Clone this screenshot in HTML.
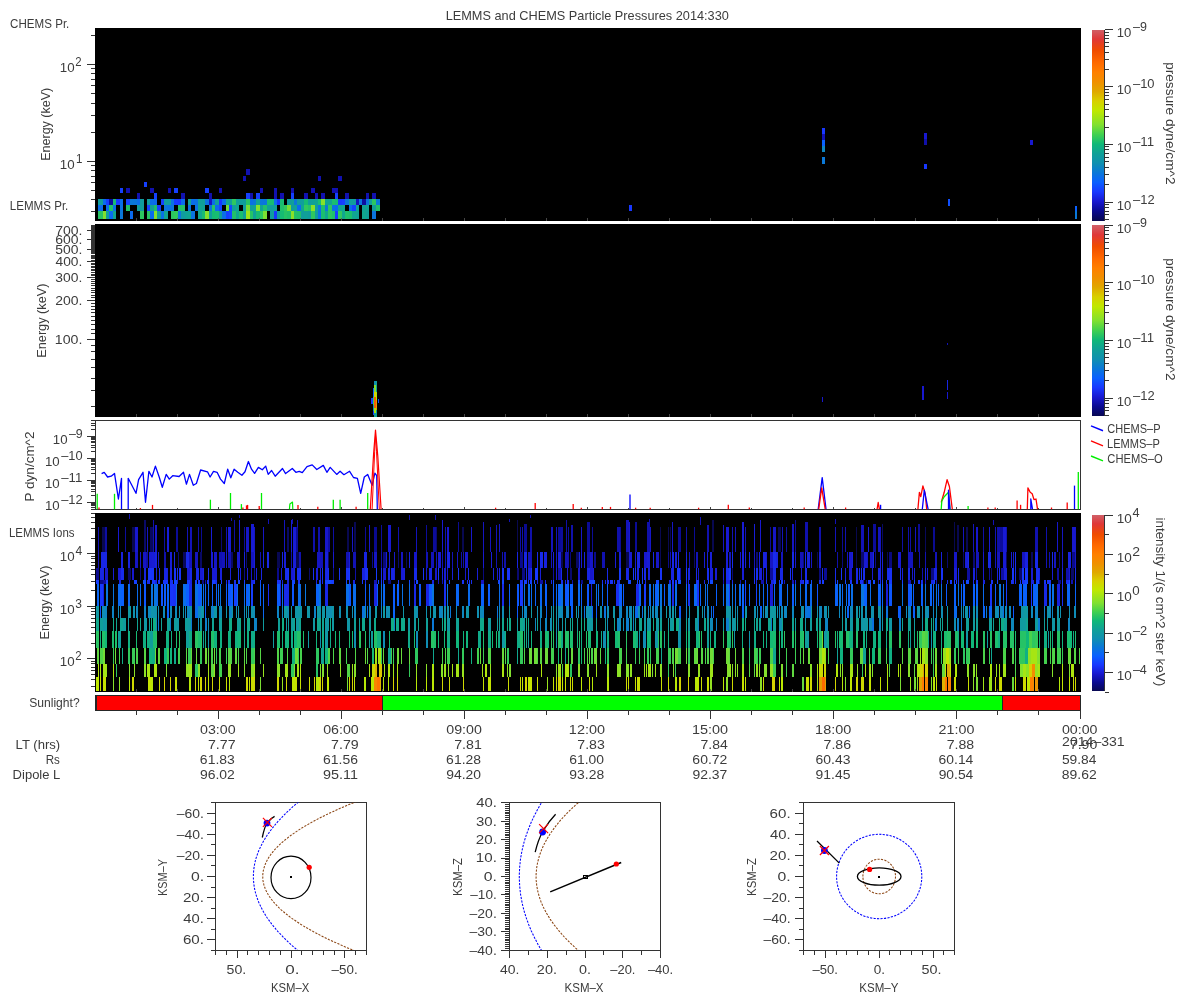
<!DOCTYPE html><html><head><meta charset="utf-8"><style>html,body{margin:0;padding:0;background:#fff;width:1200px;height:1000px;overflow:hidden}svg{display:block}text{font-family:"Liberation Sans",sans-serif}line,rect{shape-rendering:crispEdges}</style></head><body><svg width="1200" height="1000" viewBox="0 0 1200 1000" font-family="Liberation Sans, sans-serif" style="will-change:transform">
<rect x="0.00" y="0.00" width="1200.00" height="1000.00" fill="#ffffff"/>
<defs><linearGradient id="cm" x1="0" y1="1" x2="0" y2="0"><stop offset="0.0" stop-color="#080850"/><stop offset="0.05" stop-color="#0a0a90"/><stop offset="0.1" stop-color="#1818d0"/><stop offset="0.15" stop-color="#1838ff"/><stop offset="0.2" stop-color="#0a60ff"/><stop offset="0.25" stop-color="#0a78d8"/><stop offset="0.3" stop-color="#1090b0"/><stop offset="0.35" stop-color="#10a098"/><stop offset="0.4" stop-color="#10b878"/><stop offset="0.45" stop-color="#40d050"/><stop offset="0.5" stop-color="#80e030"/><stop offset="0.575" stop-color="#c0e800"/><stop offset="0.625" stop-color="#d8d000"/><stop offset="0.675" stop-color="#e0a800"/><stop offset="0.725" stop-color="#f09000"/><stop offset="0.775" stop-color="#ff8000"/><stop offset="0.825" stop-color="#ff6a00"/><stop offset="0.89" stop-color="#f04c00"/><stop offset="0.95" stop-color="#e03838"/><stop offset="1.0" stop-color="#d06068"/></linearGradient></defs>
<text x="445.67" y="19.50" font-size="12.2" textLength="283.21" lengthAdjust="spacingAndGlyphs" fill="#3c3c3c">LEMMS and CHEMS Particle Pressures  2014:330</text>
<rect x="95.00" y="28.00" width="986.00" height="193.00" fill="#000000"/>
<line x1="91.00" y1="211.84" x2="95.00" y2="211.84" stroke="#333333" stroke-width="1"/>
<line x1="91.00" y1="199.75" x2="95.00" y2="199.75" stroke="#333333" stroke-width="1"/>
<line x1="91.00" y1="190.37" x2="95.00" y2="190.37" stroke="#333333" stroke-width="1"/>
<line x1="91.00" y1="182.71" x2="95.00" y2="182.71" stroke="#333333" stroke-width="1"/>
<line x1="91.00" y1="176.24" x2="95.00" y2="176.24" stroke="#333333" stroke-width="1"/>
<line x1="91.00" y1="170.63" x2="95.00" y2="170.63" stroke="#333333" stroke-width="1"/>
<line x1="91.00" y1="165.68" x2="95.00" y2="165.68" stroke="#333333" stroke-width="1"/>
<line x1="87.00" y1="161.25" x2="95.00" y2="161.25" stroke="#333333" stroke-width="1"/>
<line x1="91.00" y1="132.13" x2="95.00" y2="132.13" stroke="#333333" stroke-width="1"/>
<line x1="91.00" y1="115.09" x2="95.00" y2="115.09" stroke="#333333" stroke-width="1"/>
<line x1="91.00" y1="103.00" x2="95.00" y2="103.00" stroke="#333333" stroke-width="1"/>
<line x1="91.00" y1="93.62" x2="95.00" y2="93.62" stroke="#333333" stroke-width="1"/>
<line x1="91.00" y1="85.96" x2="95.00" y2="85.96" stroke="#333333" stroke-width="1"/>
<line x1="91.00" y1="79.49" x2="95.00" y2="79.49" stroke="#333333" stroke-width="1"/>
<line x1="91.00" y1="73.88" x2="95.00" y2="73.88" stroke="#333333" stroke-width="1"/>
<line x1="91.00" y1="68.93" x2="95.00" y2="68.93" stroke="#333333" stroke-width="1"/>
<line x1="87.00" y1="64.50" x2="95.00" y2="64.50" stroke="#333333" stroke-width="1"/>
<line x1="91.00" y1="35.38" x2="95.00" y2="35.38" stroke="#333333" stroke-width="1"/>
<text x="59.79" y="72.00" font-size="12.6" textLength="14.83" lengthAdjust="spacingAndGlyphs" fill="#3c3c3c">10</text>
<text x="75.23" y="65.90" font-size="12.6" textLength="6.33" lengthAdjust="spacingAndGlyphs" fill="#3c3c3c">2</text>
<text x="59.89" y="168.75" font-size="12.6" textLength="14.83" lengthAdjust="spacingAndGlyphs" fill="#3c3c3c">10</text>
<text x="76.12" y="162.65" font-size="12.6" textLength="6.44" lengthAdjust="spacingAndGlyphs" fill="#3c3c3c">1</text>
<text transform="translate(49.80,160.82) rotate(-90)" x="0" y="0" font-size="12.2" textLength="73.09" lengthAdjust="spacingAndGlyphs" fill="#3c3c3c">Energy (keV)</text>
<text x="10.12" y="28.00" font-size="12.2" textLength="59.23" lengthAdjust="spacingAndGlyphs" fill="#3c3c3c">CHEMS Pr.</text>
<text x="9.75" y="210.00" font-size="12.2" textLength="58.60" lengthAdjust="spacingAndGlyphs" fill="#3c3c3c">LEMMS Pr.</text>
<rect x="97.92" y="199.00" width="5.00" height="6.30" fill="#109e9b"/>
<rect x="97.92" y="205.30" width="5.00" height="6.00" fill="#0a6cec"/>
<rect x="97.92" y="211.30" width="5.00" height="7.70" fill="#28c464"/>
<rect x="102.92" y="199.00" width="3.33" height="6.30" fill="#0a6bee"/>
<rect x="102.92" y="211.30" width="3.33" height="7.70" fill="#81e02f"/>
<rect x="106.25" y="199.00" width="2.92" height="6.30" fill="#163dff"/>
<rect x="106.25" y="205.30" width="2.92" height="6.00" fill="#0a6aee"/>
<rect x="106.25" y="211.30" width="2.92" height="7.70" fill="#10a098"/>
<rect x="109.17" y="199.00" width="3.75" height="6.30" fill="#0d0d9e"/>
<rect x="109.17" y="205.30" width="3.75" height="6.00" fill="#21c16a"/>
<rect x="109.17" y="211.30" width="3.75" height="7.70" fill="#0a6bee"/>
<rect x="112.92" y="199.00" width="2.92" height="6.30" fill="#17bc72"/>
<rect x="112.92" y="205.30" width="2.92" height="6.00" fill="#0a70e5"/>
<rect x="112.92" y="211.30" width="2.92" height="7.70" fill="#10a592"/>
<rect x="115.83" y="199.00" width="3.75" height="6.30" fill="#1837fe"/>
<rect x="119.58" y="199.00" width="3.33" height="6.30" fill="#0a6dea"/>
<rect x="119.58" y="205.30" width="3.33" height="6.00" fill="#0a73e1"/>
<rect x="119.58" y="211.30" width="3.33" height="7.70" fill="#0a77d9"/>
<rect x="125.83" y="199.00" width="4.17" height="6.30" fill="#1542ff"/>
<rect x="125.83" y="205.30" width="4.17" height="6.00" fill="#20c06a"/>
<rect x="130.00" y="199.00" width="3.33" height="6.30" fill="#0a78d9"/>
<rect x="130.00" y="211.30" width="3.33" height="7.70" fill="#0a6aee"/>
<rect x="133.33" y="199.00" width="3.33" height="6.30" fill="#0a76db"/>
<rect x="136.67" y="199.00" width="3.33" height="6.30" fill="#0a6ee9"/>
<rect x="136.67" y="205.30" width="3.33" height="6.00" fill="#109d9d"/>
<rect x="140.00" y="199.00" width="3.75" height="6.30" fill="#109c9e"/>
<rect x="140.00" y="205.30" width="3.75" height="6.00" fill="#109e9b"/>
<rect x="140.00" y="211.30" width="3.75" height="7.70" fill="#2cc660"/>
<rect x="147.08" y="199.00" width="3.33" height="6.30" fill="#109d9d"/>
<rect x="147.08" y="205.30" width="3.33" height="6.00" fill="#1542ff"/>
<rect x="147.08" y="211.30" width="3.33" height="7.70" fill="#27c465"/>
<rect x="150.42" y="199.00" width="3.33" height="6.30" fill="#0a6fe7"/>
<rect x="150.42" y="205.30" width="3.33" height="6.00" fill="#10a197"/>
<rect x="150.42" y="211.30" width="3.33" height="7.70" fill="#0a6bee"/>
<rect x="153.75" y="199.00" width="3.33" height="6.30" fill="#0a6aee"/>
<rect x="153.75" y="205.30" width="3.33" height="6.00" fill="#1bbd6f"/>
<rect x="153.75" y="211.30" width="3.33" height="7.70" fill="#85e12d"/>
<rect x="157.08" y="205.30" width="3.75" height="6.00" fill="#163eff"/>
<rect x="157.08" y="211.30" width="3.75" height="7.70" fill="#109e9b"/>
<rect x="160.83" y="199.00" width="3.33" height="6.30" fill="#1442ff"/>
<rect x="160.83" y="211.30" width="3.33" height="7.70" fill="#0a70e5"/>
<rect x="164.17" y="199.00" width="3.33" height="6.30" fill="#109e9b"/>
<rect x="164.17" y="205.30" width="3.33" height="6.00" fill="#0a75dd"/>
<rect x="164.17" y="211.30" width="3.33" height="7.70" fill="#10a394"/>
<rect x="167.50" y="199.00" width="3.33" height="6.30" fill="#109e9c"/>
<rect x="167.50" y="205.30" width="3.33" height="6.00" fill="#0a72e2"/>
<rect x="170.83" y="199.00" width="3.33" height="6.30" fill="#0a71e3"/>
<rect x="170.83" y="205.30" width="3.33" height="6.00" fill="#0a76db"/>
<rect x="170.83" y="211.30" width="3.33" height="7.70" fill="#2ac562"/>
<rect x="174.17" y="199.00" width="3.33" height="6.30" fill="#173bff"/>
<rect x="174.17" y="211.30" width="3.33" height="7.70" fill="#31c95c"/>
<rect x="177.50" y="199.00" width="3.75" height="6.30" fill="#1837fe"/>
<rect x="177.50" y="205.30" width="3.75" height="6.00" fill="#21c06a"/>
<rect x="177.50" y="211.30" width="3.75" height="7.70" fill="#0a75de"/>
<rect x="181.25" y="199.00" width="3.33" height="6.30" fill="#0a6cec"/>
<rect x="181.25" y="205.30" width="3.33" height="6.00" fill="#23c168"/>
<rect x="181.25" y="211.30" width="3.33" height="7.70" fill="#109c9f"/>
<rect x="184.58" y="211.30" width="3.33" height="7.70" fill="#10a295"/>
<rect x="187.92" y="199.00" width="3.33" height="6.30" fill="#10a493"/>
<rect x="187.92" y="205.30" width="3.33" height="6.00" fill="#0a72e2"/>
<rect x="187.92" y="211.30" width="3.33" height="7.70" fill="#10a591"/>
<rect x="191.25" y="199.00" width="3.75" height="6.30" fill="#0a6ee8"/>
<rect x="191.25" y="211.30" width="3.75" height="7.70" fill="#0a74df"/>
<rect x="194.67" y="199.00" width="3.33" height="6.30" fill="#0a72e1"/>
<rect x="194.67" y="205.30" width="3.33" height="6.00" fill="#0a72e2"/>
<rect x="198.00" y="199.00" width="3.75" height="6.30" fill="#10a099"/>
<rect x="198.00" y="205.30" width="3.75" height="6.00" fill="#10a591"/>
<rect x="198.00" y="211.30" width="3.75" height="7.70" fill="#10a68f"/>
<rect x="201.75" y="199.00" width="3.33" height="6.30" fill="#10a098"/>
<rect x="201.75" y="205.30" width="3.33" height="6.00" fill="#10a295"/>
<rect x="201.75" y="211.30" width="3.33" height="7.70" fill="#17bb73"/>
<rect x="205.08" y="199.00" width="3.75" height="6.30" fill="#0a74df"/>
<rect x="205.08" y="211.30" width="3.75" height="7.70" fill="#84e02d"/>
<rect x="208.83" y="199.00" width="3.33" height="6.30" fill="#1515c3"/>
<rect x="208.83" y="205.30" width="3.33" height="6.00" fill="#0a75dc"/>
<rect x="208.83" y="211.30" width="3.33" height="7.70" fill="#109e9b"/>
<rect x="212.17" y="199.00" width="2.92" height="6.30" fill="#0a6fe6"/>
<rect x="212.17" y="205.30" width="2.92" height="6.00" fill="#28c464"/>
<rect x="212.17" y="211.30" width="2.92" height="7.70" fill="#15bb73"/>
<rect x="215.08" y="199.00" width="3.75" height="6.30" fill="#10a099"/>
<rect x="215.08" y="205.30" width="3.75" height="6.00" fill="#0a6ceb"/>
<rect x="215.08" y="211.30" width="3.75" height="7.70" fill="#18bc71"/>
<rect x="218.83" y="199.00" width="3.33" height="6.30" fill="#1836fc"/>
<rect x="218.83" y="205.30" width="3.33" height="6.00" fill="#1346ff"/>
<rect x="218.83" y="211.30" width="3.33" height="7.70" fill="#109c9d"/>
<rect x="222.17" y="199.00" width="3.75" height="6.30" fill="#0a6dea"/>
<rect x="222.17" y="211.30" width="3.75" height="7.70" fill="#0a6fe6"/>
<rect x="225.92" y="199.00" width="3.33" height="6.30" fill="#10a591"/>
<rect x="225.92" y="205.30" width="3.33" height="6.00" fill="#70dc38"/>
<rect x="225.92" y="211.30" width="3.33" height="7.70" fill="#163fff"/>
<rect x="229.25" y="199.00" width="2.92" height="6.30" fill="#10a197"/>
<rect x="229.25" y="205.30" width="2.92" height="6.00" fill="#1249ff"/>
<rect x="229.25" y="211.30" width="2.92" height="7.70" fill="#1348ff"/>
<rect x="232.17" y="199.00" width="3.75" height="6.30" fill="#2ec75f"/>
<rect x="232.17" y="205.30" width="3.75" height="6.00" fill="#109e9b"/>
<rect x="232.17" y="211.30" width="3.75" height="7.70" fill="#21c06a"/>
<rect x="235.92" y="199.00" width="3.33" height="6.30" fill="#109f9a"/>
<rect x="235.92" y="205.30" width="3.33" height="6.00" fill="#10a691"/>
<rect x="235.92" y="211.30" width="3.33" height="7.70" fill="#10a78f"/>
<rect x="239.25" y="199.00" width="3.75" height="6.30" fill="#109d9d"/>
<rect x="239.25" y="211.30" width="3.75" height="7.70" fill="#1abd70"/>
<rect x="243.00" y="199.00" width="3.33" height="6.30" fill="#109d9c"/>
<rect x="243.00" y="205.30" width="3.33" height="6.00" fill="#109d9c"/>
<rect x="243.00" y="211.30" width="3.33" height="7.70" fill="#10a098"/>
<rect x="246.33" y="199.00" width="3.75" height="6.30" fill="#26c366"/>
<rect x="246.33" y="205.30" width="3.75" height="6.00" fill="#77de35"/>
<rect x="246.33" y="211.30" width="3.75" height="7.70" fill="#9ee41a"/>
<rect x="250.08" y="199.00" width="2.92" height="6.30" fill="#0a70e6"/>
<rect x="250.08" y="205.30" width="2.92" height="6.00" fill="#109f9a"/>
<rect x="250.08" y="211.30" width="2.92" height="7.70" fill="#25c366"/>
<rect x="253.00" y="199.00" width="3.33" height="6.30" fill="#0a77d9"/>
<rect x="253.00" y="205.30" width="3.33" height="6.00" fill="#10a394"/>
<rect x="253.00" y="211.30" width="3.33" height="7.70" fill="#10a098"/>
<rect x="256.33" y="199.00" width="3.75" height="6.30" fill="#10a296"/>
<rect x="256.33" y="205.30" width="3.75" height="6.00" fill="#85e12d"/>
<rect x="256.33" y="211.30" width="3.75" height="7.70" fill="#16bb73"/>
<rect x="260.08" y="199.00" width="3.33" height="6.30" fill="#0a77da"/>
<rect x="260.08" y="205.30" width="3.33" height="6.00" fill="#10a493"/>
<rect x="260.08" y="211.30" width="3.33" height="7.70" fill="#2ec75f"/>
<rect x="263.42" y="199.00" width="3.33" height="6.30" fill="#0a75dd"/>
<rect x="263.42" y="205.30" width="3.33" height="6.00" fill="#20c06b"/>
<rect x="263.42" y="211.30" width="3.33" height="7.70" fill="#7cdf32"/>
<rect x="266.75" y="199.00" width="3.33" height="6.30" fill="#18bc72"/>
<rect x="266.75" y="205.30" width="3.33" height="6.00" fill="#10a295"/>
<rect x="270.08" y="199.00" width="3.75" height="6.30" fill="#17bb73"/>
<rect x="270.08" y="205.30" width="3.75" height="6.00" fill="#109c9e"/>
<rect x="270.08" y="211.30" width="3.75" height="7.70" fill="#109d9c"/>
<rect x="273.83" y="199.00" width="3.33" height="6.30" fill="#0a6cec"/>
<rect x="273.83" y="205.30" width="3.33" height="6.00" fill="#109e9a"/>
<rect x="273.83" y="211.30" width="3.33" height="7.70" fill="#1836fc"/>
<rect x="277.17" y="199.00" width="2.92" height="6.30" fill="#1835fa"/>
<rect x="277.17" y="211.30" width="2.92" height="7.70" fill="#109d9d"/>
<rect x="280.08" y="199.00" width="3.75" height="6.30" fill="#18bc72"/>
<rect x="280.08" y="205.30" width="3.75" height="6.00" fill="#1fc06b"/>
<rect x="280.08" y="211.30" width="3.75" height="7.70" fill="#16bb73"/>
<rect x="283.83" y="205.30" width="3.33" height="6.00" fill="#2ec75f"/>
<rect x="283.83" y="211.30" width="3.33" height="7.70" fill="#26c365"/>
<rect x="287.17" y="199.00" width="3.75" height="6.30" fill="#109d9d"/>
<rect x="287.17" y="205.30" width="3.75" height="6.00" fill="#76de35"/>
<rect x="287.17" y="211.30" width="3.75" height="7.70" fill="#1fbf6c"/>
<rect x="290.67" y="199.00" width="3.33" height="6.30" fill="#109f9a"/>
<rect x="290.67" y="205.30" width="3.33" height="6.00" fill="#109c9d"/>
<rect x="290.67" y="211.30" width="3.33" height="7.70" fill="#89e129"/>
<rect x="294.00" y="199.00" width="2.92" height="6.30" fill="#0a78d8"/>
<rect x="294.00" y="205.30" width="2.92" height="6.00" fill="#10a098"/>
<rect x="294.00" y="211.30" width="2.92" height="7.70" fill="#23c168"/>
<rect x="296.92" y="199.00" width="3.75" height="6.30" fill="#109c9e"/>
<rect x="296.92" y="205.30" width="3.75" height="6.00" fill="#0a6bed"/>
<rect x="296.92" y="211.30" width="3.75" height="7.70" fill="#1fbf6c"/>
<rect x="300.67" y="199.00" width="3.33" height="6.30" fill="#109e9b"/>
<rect x="300.67" y="205.30" width="3.33" height="6.00" fill="#10a592"/>
<rect x="300.67" y="211.30" width="3.33" height="7.70" fill="#109d9d"/>
<rect x="304.00" y="199.00" width="3.75" height="6.30" fill="#15bb73"/>
<rect x="304.00" y="205.30" width="3.75" height="6.00" fill="#30c85d"/>
<rect x="304.00" y="211.30" width="3.75" height="7.70" fill="#10a097"/>
<rect x="307.75" y="199.00" width="3.33" height="6.30" fill="#109d9d"/>
<rect x="307.75" y="205.30" width="3.33" height="6.00" fill="#24c267"/>
<rect x="307.75" y="211.30" width="3.33" height="7.70" fill="#109b9f"/>
<rect x="311.08" y="199.00" width="3.75" height="6.30" fill="#10a097"/>
<rect x="311.08" y="205.30" width="3.75" height="6.00" fill="#8ce227"/>
<rect x="311.08" y="211.30" width="3.75" height="7.70" fill="#2ec75f"/>
<rect x="314.83" y="199.00" width="3.33" height="6.30" fill="#10a394"/>
<rect x="314.83" y="205.30" width="3.33" height="6.00" fill="#109e9b"/>
<rect x="314.83" y="211.30" width="3.33" height="7.70" fill="#109f9a"/>
<rect x="318.17" y="199.00" width="2.92" height="6.30" fill="#1abd70"/>
<rect x="318.17" y="205.30" width="2.92" height="6.00" fill="#0a75dd"/>
<rect x="318.17" y="211.30" width="2.92" height="7.70" fill="#0a71e3"/>
<rect x="321.08" y="199.00" width="3.75" height="6.30" fill="#87e12b"/>
<rect x="321.08" y="205.30" width="3.75" height="6.00" fill="#1ebf6c"/>
<rect x="321.08" y="211.30" width="3.75" height="7.70" fill="#1bbe6f"/>
<rect x="324.83" y="199.00" width="3.33" height="6.30" fill="#10a492"/>
<rect x="324.83" y="205.30" width="3.33" height="6.00" fill="#0a78d8"/>
<rect x="324.83" y="211.30" width="3.33" height="7.70" fill="#10a591"/>
<rect x="328.17" y="199.00" width="3.75" height="6.30" fill="#10a492"/>
<rect x="328.17" y="205.30" width="3.75" height="6.00" fill="#2cc660"/>
<rect x="328.17" y="211.30" width="3.75" height="7.70" fill="#2ac562"/>
<rect x="331.92" y="199.00" width="2.92" height="6.30" fill="#1bbe6f"/>
<rect x="331.92" y="205.30" width="2.92" height="6.00" fill="#0a71e3"/>
<rect x="331.92" y="211.30" width="2.92" height="7.70" fill="#1fc06b"/>
<rect x="334.83" y="199.00" width="3.33" height="6.30" fill="#16bb73"/>
<rect x="334.83" y="205.30" width="3.33" height="6.00" fill="#0a6aef"/>
<rect x="334.83" y="211.30" width="3.33" height="7.70" fill="#173bff"/>
<rect x="338.17" y="199.00" width="3.33" height="6.30" fill="#173aff"/>
<rect x="338.17" y="205.30" width="3.33" height="6.00" fill="#10a394"/>
<rect x="338.17" y="211.30" width="3.33" height="7.70" fill="#30c85d"/>
<rect x="341.50" y="199.00" width="3.33" height="6.30" fill="#163fff"/>
<rect x="341.50" y="205.30" width="3.33" height="6.00" fill="#10a690"/>
<rect x="341.50" y="211.30" width="3.33" height="7.70" fill="#10a78f"/>
<rect x="344.83" y="199.00" width="4.17" height="6.30" fill="#0a77d9"/>
<rect x="344.83" y="211.30" width="4.17" height="7.70" fill="#1fc06b"/>
<rect x="349.00" y="199.00" width="3.33" height="6.30" fill="#109d9c"/>
<rect x="349.00" y="205.30" width="3.33" height="6.00" fill="#0a6dea"/>
<rect x="349.00" y="211.30" width="3.33" height="7.70" fill="#1abd6f"/>
<rect x="352.33" y="199.00" width="3.33" height="6.30" fill="#109d9c"/>
<rect x="352.33" y="205.30" width="3.33" height="6.00" fill="#1443ff"/>
<rect x="352.33" y="211.30" width="3.33" height="7.70" fill="#10a690"/>
<rect x="355.67" y="199.00" width="3.33" height="6.30" fill="#1414bd"/>
<rect x="355.67" y="205.30" width="3.33" height="6.00" fill="#10a098"/>
<rect x="355.67" y="211.30" width="3.33" height="7.70" fill="#10a295"/>
<rect x="359.00" y="199.00" width="3.33" height="6.30" fill="#0a75dd"/>
<rect x="362.33" y="199.00" width="3.33" height="6.30" fill="#0e0ea0"/>
<rect x="362.33" y="205.30" width="3.33" height="6.00" fill="#10a295"/>
<rect x="362.33" y="211.30" width="3.33" height="7.70" fill="#10a690"/>
<rect x="365.67" y="199.00" width="3.33" height="6.30" fill="#0a75dd"/>
<rect x="365.67" y="205.30" width="3.33" height="6.00" fill="#10a493"/>
<rect x="365.67" y="211.30" width="3.33" height="7.70" fill="#10a098"/>
<rect x="369.00" y="199.00" width="3.33" height="6.30" fill="#109d9d"/>
<rect x="372.33" y="199.00" width="3.75" height="6.30" fill="#2cc661"/>
<rect x="372.33" y="205.30" width="3.75" height="6.00" fill="#109e9a"/>
<rect x="372.33" y="211.30" width="3.75" height="7.70" fill="#0a75dd"/>
<rect x="376.08" y="199.00" width="3.75" height="6.30" fill="#0a78d9"/>
<rect x="376.08" y="205.30" width="3.75" height="6.00" fill="#20c06a"/>
<rect x="119.58" y="187.50" width="3.33" height="5.80" fill="#1540ff"/>
<rect x="125.83" y="187.50" width="4.17" height="5.80" fill="#1111b0"/>
<rect x="136.67" y="193.30" width="3.33" height="5.60" fill="#1111b0"/>
<rect x="143.75" y="182.00" width="3.33" height="5.30" fill="#1540ff"/>
<rect x="150.42" y="187.50" width="3.33" height="5.80" fill="#1111b0"/>
<rect x="153.75" y="193.30" width="3.33" height="5.60" fill="#1540ff"/>
<rect x="167.50" y="187.50" width="3.33" height="5.80" fill="#1111b0"/>
<rect x="174.17" y="187.50" width="3.33" height="5.80" fill="#1540ff"/>
<rect x="181.25" y="193.30" width="3.33" height="5.60" fill="#1111b0"/>
<rect x="205.08" y="187.50" width="3.75" height="5.80" fill="#1540ff"/>
<rect x="208.83" y="193.30" width="3.33" height="5.60" fill="#1111b0"/>
<rect x="218.83" y="187.50" width="3.33" height="5.80" fill="#1111b0"/>
<rect x="243.00" y="175.80" width="3.33" height="5.00" fill="#1111b0"/>
<rect x="246.33" y="193.30" width="3.75" height="5.60" fill="#1540ff"/>
<rect x="246.33" y="169.00" width="3.75" height="6.00" fill="#1111b0"/>
<rect x="250.08" y="193.30" width="2.92" height="5.60" fill="#1111b0"/>
<rect x="256.33" y="193.30" width="3.75" height="5.60" fill="#1540ff"/>
<rect x="260.08" y="187.50" width="3.33" height="5.80" fill="#1111b0"/>
<rect x="273.83" y="187.50" width="3.33" height="5.80" fill="#1111b0"/>
<rect x="273.83" y="193.30" width="3.33" height="5.60" fill="#1111b0"/>
<rect x="280.08" y="193.30" width="3.75" height="5.60" fill="#1111b0"/>
<rect x="290.67" y="193.30" width="3.33" height="5.60" fill="#1540ff"/>
<rect x="290.67" y="187.50" width="3.33" height="5.80" fill="#1111b0"/>
<rect x="304.00" y="193.30" width="3.75" height="5.60" fill="#1111b0"/>
<rect x="311.08" y="187.50" width="3.75" height="5.80" fill="#1111b0"/>
<rect x="314.83" y="193.30" width="3.33" height="5.60" fill="#1111b0"/>
<rect x="318.17" y="175.80" width="2.92" height="5.00" fill="#1111b0"/>
<rect x="321.08" y="193.30" width="3.75" height="5.60" fill="#1111b0"/>
<rect x="331.92" y="187.50" width="2.92" height="5.80" fill="#1111b0"/>
<rect x="334.83" y="193.30" width="3.33" height="5.60" fill="#1540ff"/>
<rect x="334.83" y="187.50" width="3.33" height="5.80" fill="#1111b0"/>
<rect x="338.17" y="175.80" width="3.33" height="5.00" fill="#1111b0"/>
<rect x="344.83" y="193.30" width="4.17" height="5.60" fill="#1111b0"/>
<rect x="365.67" y="193.30" width="3.33" height="5.60" fill="#1111b0"/>
<rect x="372.33" y="193.30" width="3.75" height="5.60" fill="#1111b0"/>
<rect x="822.00" y="128.00" width="2.60" height="6.00" fill="#1838ff"/>
<rect x="822.00" y="134.00" width="2.60" height="6.00" fill="#1212b6"/>
<rect x="822.00" y="140.00" width="2.60" height="6.00" fill="#0a60ff"/>
<rect x="822.00" y="146.00" width="2.60" height="5.60" fill="#0e86c0"/>
<rect x="822.00" y="157.00" width="2.60" height="6.60" fill="#0a78d8"/>
<rect x="924.00" y="133.00" width="2.60" height="6.00" fill="#1818d0"/>
<rect x="924.00" y="139.00" width="2.60" height="5.60" fill="#1010aa"/>
<rect x="924.00" y="163.60" width="2.60" height="5.60" fill="#1838ff"/>
<rect x="1030.00" y="139.70" width="2.60" height="4.90" fill="#1818d0"/>
<rect x="947.50" y="199.40" width="2.60" height="6.10" fill="#1050ff"/>
<rect x="1074.50" y="205.50" width="2.60" height="5.50" fill="#0a60ff"/>
<rect x="1074.50" y="211.00" width="2.60" height="7.70" fill="#0a78d8"/>
<rect x="629.00" y="205.00" width="2.60" height="6.00" fill="#1838ff"/>
<line x1="136.04" y1="218.00" x2="136.04" y2="221.00" stroke="#555555" stroke-width="0.8"/>
<line x1="177.08" y1="218.00" x2="177.08" y2="221.00" stroke="#555555" stroke-width="0.8"/>
<line x1="218.12" y1="218.00" x2="218.12" y2="221.00" stroke="#555555" stroke-width="0.8"/>
<line x1="259.17" y1="218.00" x2="259.17" y2="221.00" stroke="#555555" stroke-width="0.8"/>
<line x1="300.21" y1="218.00" x2="300.21" y2="221.00" stroke="#555555" stroke-width="0.8"/>
<line x1="341.25" y1="218.00" x2="341.25" y2="221.00" stroke="#555555" stroke-width="0.8"/>
<line x1="382.29" y1="218.00" x2="382.29" y2="221.00" stroke="#555555" stroke-width="0.8"/>
<line x1="423.33" y1="218.00" x2="423.33" y2="221.00" stroke="#555555" stroke-width="0.8"/>
<line x1="464.38" y1="218.00" x2="464.38" y2="221.00" stroke="#555555" stroke-width="0.8"/>
<line x1="505.42" y1="218.00" x2="505.42" y2="221.00" stroke="#555555" stroke-width="0.8"/>
<line x1="546.46" y1="218.00" x2="546.46" y2="221.00" stroke="#555555" stroke-width="0.8"/>
<line x1="587.50" y1="218.00" x2="587.50" y2="221.00" stroke="#555555" stroke-width="0.8"/>
<line x1="628.54" y1="218.00" x2="628.54" y2="221.00" stroke="#555555" stroke-width="0.8"/>
<line x1="669.58" y1="218.00" x2="669.58" y2="221.00" stroke="#555555" stroke-width="0.8"/>
<line x1="710.62" y1="218.00" x2="710.62" y2="221.00" stroke="#555555" stroke-width="0.8"/>
<line x1="751.67" y1="218.00" x2="751.67" y2="221.00" stroke="#555555" stroke-width="0.8"/>
<line x1="792.71" y1="218.00" x2="792.71" y2="221.00" stroke="#555555" stroke-width="0.8"/>
<line x1="833.75" y1="218.00" x2="833.75" y2="221.00" stroke="#555555" stroke-width="0.8"/>
<line x1="874.79" y1="218.00" x2="874.79" y2="221.00" stroke="#555555" stroke-width="0.8"/>
<line x1="915.83" y1="218.00" x2="915.83" y2="221.00" stroke="#555555" stroke-width="0.8"/>
<line x1="956.88" y1="218.00" x2="956.88" y2="221.00" stroke="#555555" stroke-width="0.8"/>
<line x1="997.92" y1="218.00" x2="997.92" y2="221.00" stroke="#555555" stroke-width="0.8"/>
<line x1="1038.96" y1="218.00" x2="1038.96" y2="221.00" stroke="#555555" stroke-width="0.8"/>
<rect x="1092.00" y="29.50" width="12.00" height="191.00" fill="url(#cm)"/>
<line x1="1104.50" y1="29.50" x2="1104.50" y2="220.50" stroke="#333333" stroke-width="1"/>
<line x1="1104.50" y1="29.50" x2="1113.00" y2="29.50" stroke="#333333" stroke-width="1"/>
<line x1="1104.50" y1="69.69" x2="1109.00" y2="69.69" stroke="#333333" stroke-width="1"/>
<line x1="1104.50" y1="59.57" x2="1109.00" y2="59.57" stroke="#333333" stroke-width="1"/>
<line x1="1104.50" y1="52.38" x2="1109.00" y2="52.38" stroke="#333333" stroke-width="1"/>
<line x1="1104.50" y1="46.81" x2="1109.00" y2="46.81" stroke="#333333" stroke-width="1"/>
<line x1="1104.50" y1="42.26" x2="1109.00" y2="42.26" stroke="#333333" stroke-width="1"/>
<line x1="1104.50" y1="38.41" x2="1109.00" y2="38.41" stroke="#333333" stroke-width="1"/>
<line x1="1104.50" y1="35.07" x2="1109.00" y2="35.07" stroke="#333333" stroke-width="1"/>
<line x1="1104.50" y1="32.13" x2="1109.00" y2="32.13" stroke="#333333" stroke-width="1"/>
<line x1="1104.50" y1="86.90" x2="1113.00" y2="86.90" stroke="#333333" stroke-width="1"/>
<line x1="1104.50" y1="127.09" x2="1109.00" y2="127.09" stroke="#333333" stroke-width="1"/>
<line x1="1104.50" y1="116.97" x2="1109.00" y2="116.97" stroke="#333333" stroke-width="1"/>
<line x1="1104.50" y1="109.78" x2="1109.00" y2="109.78" stroke="#333333" stroke-width="1"/>
<line x1="1104.50" y1="104.21" x2="1109.00" y2="104.21" stroke="#333333" stroke-width="1"/>
<line x1="1104.50" y1="99.66" x2="1109.00" y2="99.66" stroke="#333333" stroke-width="1"/>
<line x1="1104.50" y1="95.81" x2="1109.00" y2="95.81" stroke="#333333" stroke-width="1"/>
<line x1="1104.50" y1="92.47" x2="1109.00" y2="92.47" stroke="#333333" stroke-width="1"/>
<line x1="1104.50" y1="89.53" x2="1109.00" y2="89.53" stroke="#333333" stroke-width="1"/>
<line x1="1104.50" y1="144.30" x2="1113.00" y2="144.30" stroke="#333333" stroke-width="1"/>
<line x1="1104.50" y1="184.49" x2="1109.00" y2="184.49" stroke="#333333" stroke-width="1"/>
<line x1="1104.50" y1="174.37" x2="1109.00" y2="174.37" stroke="#333333" stroke-width="1"/>
<line x1="1104.50" y1="167.18" x2="1109.00" y2="167.18" stroke="#333333" stroke-width="1"/>
<line x1="1104.50" y1="161.61" x2="1109.00" y2="161.61" stroke="#333333" stroke-width="1"/>
<line x1="1104.50" y1="157.06" x2="1109.00" y2="157.06" stroke="#333333" stroke-width="1"/>
<line x1="1104.50" y1="153.21" x2="1109.00" y2="153.21" stroke="#333333" stroke-width="1"/>
<line x1="1104.50" y1="149.87" x2="1109.00" y2="149.87" stroke="#333333" stroke-width="1"/>
<line x1="1104.50" y1="146.93" x2="1109.00" y2="146.93" stroke="#333333" stroke-width="1"/>
<line x1="1104.50" y1="202.10" x2="1113.00" y2="202.10" stroke="#333333" stroke-width="1"/>
<line x1="1104.50" y1="219.41" x2="1109.00" y2="219.41" stroke="#333333" stroke-width="1"/>
<line x1="1104.50" y1="214.86" x2="1109.00" y2="214.86" stroke="#333333" stroke-width="1"/>
<line x1="1104.50" y1="211.01" x2="1109.00" y2="211.01" stroke="#333333" stroke-width="1"/>
<line x1="1104.50" y1="207.67" x2="1109.00" y2="207.67" stroke="#333333" stroke-width="1"/>
<line x1="1104.50" y1="204.73" x2="1109.00" y2="204.73" stroke="#333333" stroke-width="1"/>
<text x="1116.80" y="37.00" font-size="12.6" textLength="14.61" lengthAdjust="spacingAndGlyphs" fill="#3c3c3c">10</text>
<text x="1133.00" y="30.90" font-size="12.6" textLength="13.89" lengthAdjust="spacingAndGlyphs" fill="#3c3c3c">–9</text>
<text x="1116.80" y="94.40" font-size="12.6" textLength="14.61" lengthAdjust="spacingAndGlyphs" fill="#3c3c3c">10</text>
<text x="1133.00" y="88.30" font-size="12.6" textLength="21.50" lengthAdjust="spacingAndGlyphs" fill="#3c3c3c">–10</text>
<text x="1116.80" y="151.80" font-size="12.6" textLength="14.61" lengthAdjust="spacingAndGlyphs" fill="#3c3c3c">10</text>
<text x="1133.00" y="145.70" font-size="12.6" textLength="21.14" lengthAdjust="spacingAndGlyphs" fill="#3c3c3c">–11</text>
<text x="1116.80" y="209.60" font-size="12.6" textLength="14.61" lengthAdjust="spacingAndGlyphs" fill="#3c3c3c">10</text>
<text x="1133.00" y="203.50" font-size="12.6" textLength="21.64" lengthAdjust="spacingAndGlyphs" fill="#3c3c3c">–12</text>
<text transform="translate(1165.50,62.13) rotate(90)" x="0" y="0" font-size="12.2" textLength="122.36" lengthAdjust="spacingAndGlyphs" fill="#3c3c3c">pressure dyne/cm^2</text>
<rect x="95.00" y="224.20" width="986.00" height="192.30" fill="#000000"/>
<rect x="91.20" y="225.20" width="4.00" height="25.30" fill="#333333"/>
<line x1="91.00" y1="406.70" x2="95.00" y2="406.70" stroke="#333333" stroke-width="1"/>
<line x1="91.00" y1="390.59" x2="95.00" y2="390.59" stroke="#333333" stroke-width="1"/>
<line x1="91.00" y1="378.10" x2="95.00" y2="378.10" stroke="#333333" stroke-width="1"/>
<line x1="91.00" y1="367.90" x2="95.00" y2="367.90" stroke="#333333" stroke-width="1"/>
<line x1="91.00" y1="359.27" x2="95.00" y2="359.27" stroke="#333333" stroke-width="1"/>
<line x1="91.00" y1="351.79" x2="95.00" y2="351.79" stroke="#333333" stroke-width="1"/>
<line x1="91.00" y1="345.20" x2="95.00" y2="345.20" stroke="#333333" stroke-width="1"/>
<line x1="87.00" y1="339.30" x2="95.00" y2="339.30" stroke="#333333" stroke-width="1"/>
<line x1="91.00" y1="333.96" x2="95.00" y2="333.96" stroke="#333333" stroke-width="1"/>
<line x1="91.00" y1="329.09" x2="95.00" y2="329.09" stroke="#333333" stroke-width="1"/>
<line x1="91.00" y1="324.61" x2="95.00" y2="324.61" stroke="#333333" stroke-width="1"/>
<line x1="91.00" y1="320.46" x2="95.00" y2="320.46" stroke="#333333" stroke-width="1"/>
<line x1="91.00" y1="316.60" x2="95.00" y2="316.60" stroke="#333333" stroke-width="1"/>
<line x1="91.00" y1="312.99" x2="95.00" y2="312.99" stroke="#333333" stroke-width="1"/>
<line x1="91.00" y1="309.60" x2="95.00" y2="309.60" stroke="#333333" stroke-width="1"/>
<line x1="91.00" y1="306.40" x2="95.00" y2="306.40" stroke="#333333" stroke-width="1"/>
<line x1="91.00" y1="303.37" x2="95.00" y2="303.37" stroke="#333333" stroke-width="1"/>
<line x1="87.00" y1="300.50" x2="95.00" y2="300.50" stroke="#333333" stroke-width="1"/>
<line x1="91.00" y1="297.77" x2="95.00" y2="297.77" stroke="#333333" stroke-width="1"/>
<line x1="91.00" y1="295.16" x2="95.00" y2="295.16" stroke="#333333" stroke-width="1"/>
<line x1="91.00" y1="292.67" x2="95.00" y2="292.67" stroke="#333333" stroke-width="1"/>
<line x1="91.00" y1="290.29" x2="95.00" y2="290.29" stroke="#333333" stroke-width="1"/>
<line x1="91.00" y1="288.01" x2="95.00" y2="288.01" stroke="#333333" stroke-width="1"/>
<line x1="91.00" y1="285.81" x2="95.00" y2="285.81" stroke="#333333" stroke-width="1"/>
<line x1="91.00" y1="283.70" x2="95.00" y2="283.70" stroke="#333333" stroke-width="1"/>
<line x1="91.00" y1="281.66" x2="95.00" y2="281.66" stroke="#333333" stroke-width="1"/>
<line x1="91.00" y1="279.70" x2="95.00" y2="279.70" stroke="#333333" stroke-width="1"/>
<line x1="87.00" y1="277.80" x2="95.00" y2="277.80" stroke="#333333" stroke-width="1"/>
<line x1="91.00" y1="275.96" x2="95.00" y2="275.96" stroke="#333333" stroke-width="1"/>
<line x1="91.00" y1="274.19" x2="95.00" y2="274.19" stroke="#333333" stroke-width="1"/>
<line x1="91.00" y1="272.46" x2="95.00" y2="272.46" stroke="#333333" stroke-width="1"/>
<line x1="91.00" y1="270.79" x2="95.00" y2="270.79" stroke="#333333" stroke-width="1"/>
<line x1="91.00" y1="269.17" x2="95.00" y2="269.17" stroke="#333333" stroke-width="1"/>
<line x1="91.00" y1="267.59" x2="95.00" y2="267.59" stroke="#333333" stroke-width="1"/>
<line x1="91.00" y1="266.06" x2="95.00" y2="266.06" stroke="#333333" stroke-width="1"/>
<line x1="91.00" y1="264.57" x2="95.00" y2="264.57" stroke="#333333" stroke-width="1"/>
<line x1="91.00" y1="263.11" x2="95.00" y2="263.11" stroke="#333333" stroke-width="1"/>
<line x1="87.00" y1="261.69" x2="95.00" y2="261.69" stroke="#333333" stroke-width="1"/>
<line x1="91.00" y1="260.31" x2="95.00" y2="260.31" stroke="#333333" stroke-width="1"/>
<line x1="91.00" y1="258.96" x2="95.00" y2="258.96" stroke="#333333" stroke-width="1"/>
<line x1="91.00" y1="257.65" x2="95.00" y2="257.65" stroke="#333333" stroke-width="1"/>
<line x1="91.00" y1="256.36" x2="95.00" y2="256.36" stroke="#333333" stroke-width="1"/>
<line x1="91.00" y1="255.10" x2="95.00" y2="255.10" stroke="#333333" stroke-width="1"/>
<line x1="91.00" y1="253.87" x2="95.00" y2="253.87" stroke="#333333" stroke-width="1"/>
<line x1="91.00" y1="252.67" x2="95.00" y2="252.67" stroke="#333333" stroke-width="1"/>
<line x1="91.00" y1="251.49" x2="95.00" y2="251.49" stroke="#333333" stroke-width="1"/>
<line x1="91.00" y1="250.33" x2="95.00" y2="250.33" stroke="#333333" stroke-width="1"/>
<line x1="87.00" y1="249.20" x2="95.00" y2="249.20" stroke="#333333" stroke-width="1"/>
<line x1="87.00" y1="239.00" x2="95.00" y2="239.00" stroke="#333333" stroke-width="1"/>
<line x1="87.00" y1="230.37" x2="95.00" y2="230.37" stroke="#333333" stroke-width="1"/>
<text x="55.19" y="234.87" font-size="12.6" textLength="27.19" lengthAdjust="spacingAndGlyphs" fill="#3c3c3c">700.</text>
<text x="55.20" y="243.50" font-size="12.6" textLength="27.17" lengthAdjust="spacingAndGlyphs" fill="#3c3c3c">600.</text>
<text x="55.34" y="253.70" font-size="12.6" textLength="27.02" lengthAdjust="spacingAndGlyphs" fill="#3c3c3c">500.</text>
<text x="55.59" y="266.19" font-size="12.6" textLength="26.77" lengthAdjust="spacingAndGlyphs" fill="#3c3c3c">400.</text>
<text x="55.38" y="282.30" font-size="12.6" textLength="26.99" lengthAdjust="spacingAndGlyphs" fill="#3c3c3c">300.</text>
<text x="55.20" y="305.00" font-size="12.6" textLength="27.17" lengthAdjust="spacingAndGlyphs" fill="#3c3c3c">200.</text>
<text x="54.83" y="343.80" font-size="12.6" textLength="27.57" lengthAdjust="spacingAndGlyphs" fill="#3c3c3c">100.</text>
<text transform="translate(45.70,357.74) rotate(-90)" x="0" y="0" font-size="12.2" textLength="74.22" lengthAdjust="spacingAndGlyphs" fill="#3c3c3c">Energy (keV)</text>
<line x1="136.04" y1="413.50" x2="136.04" y2="416.50" stroke="#555555" stroke-width="0.8"/>
<line x1="177.08" y1="413.50" x2="177.08" y2="416.50" stroke="#555555" stroke-width="0.8"/>
<line x1="218.12" y1="413.50" x2="218.12" y2="416.50" stroke="#555555" stroke-width="0.8"/>
<line x1="259.17" y1="413.50" x2="259.17" y2="416.50" stroke="#555555" stroke-width="0.8"/>
<line x1="300.21" y1="413.50" x2="300.21" y2="416.50" stroke="#555555" stroke-width="0.8"/>
<line x1="341.25" y1="413.50" x2="341.25" y2="416.50" stroke="#555555" stroke-width="0.8"/>
<line x1="382.29" y1="413.50" x2="382.29" y2="416.50" stroke="#555555" stroke-width="0.8"/>
<line x1="423.33" y1="413.50" x2="423.33" y2="416.50" stroke="#555555" stroke-width="0.8"/>
<line x1="464.38" y1="413.50" x2="464.38" y2="416.50" stroke="#555555" stroke-width="0.8"/>
<line x1="505.42" y1="413.50" x2="505.42" y2="416.50" stroke="#555555" stroke-width="0.8"/>
<line x1="546.46" y1="413.50" x2="546.46" y2="416.50" stroke="#555555" stroke-width="0.8"/>
<line x1="587.50" y1="413.50" x2="587.50" y2="416.50" stroke="#555555" stroke-width="0.8"/>
<line x1="628.54" y1="413.50" x2="628.54" y2="416.50" stroke="#555555" stroke-width="0.8"/>
<line x1="669.58" y1="413.50" x2="669.58" y2="416.50" stroke="#555555" stroke-width="0.8"/>
<line x1="710.62" y1="413.50" x2="710.62" y2="416.50" stroke="#555555" stroke-width="0.8"/>
<line x1="751.67" y1="413.50" x2="751.67" y2="416.50" stroke="#555555" stroke-width="0.8"/>
<line x1="792.71" y1="413.50" x2="792.71" y2="416.50" stroke="#555555" stroke-width="0.8"/>
<line x1="833.75" y1="413.50" x2="833.75" y2="416.50" stroke="#555555" stroke-width="0.8"/>
<line x1="874.79" y1="413.50" x2="874.79" y2="416.50" stroke="#555555" stroke-width="0.8"/>
<line x1="915.83" y1="413.50" x2="915.83" y2="416.50" stroke="#555555" stroke-width="0.8"/>
<line x1="956.88" y1="413.50" x2="956.88" y2="416.50" stroke="#555555" stroke-width="0.8"/>
<line x1="997.92" y1="413.50" x2="997.92" y2="416.50" stroke="#555555" stroke-width="0.8"/>
<line x1="1038.96" y1="413.50" x2="1038.96" y2="416.50" stroke="#555555" stroke-width="0.8"/>
<rect x="372.50" y="388.00" width="1.70" height="9.00" fill="#0a60ff"/>
<rect x="372.50" y="397.00" width="1.70" height="8.00" fill="#40d050"/>
<rect x="372.50" y="405.00" width="1.70" height="6.00" fill="#1090b0"/>
<rect x="372.50" y="411.00" width="1.70" height="4.00" fill="#1838ff"/>
<rect x="374.20" y="381.00" width="1.70" height="4.00" fill="#1090b0"/>
<rect x="374.20" y="385.00" width="1.70" height="7.00" fill="#80e030"/>
<rect x="374.20" y="392.00" width="1.70" height="5.00" fill="#d6d200"/>
<rect x="374.20" y="397.00" width="1.70" height="11.00" fill="#f95e00"/>
<rect x="374.20" y="408.00" width="1.70" height="5.00" fill="#abe510"/>
<rect x="374.20" y="413.00" width="1.70" height="3.50" fill="#10a098"/>
<rect x="375.60" y="381.00" width="1.70" height="11.00" fill="#10a098"/>
<rect x="375.60" y="392.00" width="1.70" height="8.00" fill="#abe510"/>
<rect x="375.60" y="400.00" width="1.70" height="10.00" fill="#e89c00"/>
<rect x="375.60" y="410.00" width="1.70" height="6.50" fill="#10a098"/>
<rect x="377.50" y="398.50" width="1.70" height="4.00" fill="#1050ff"/>
<rect x="371.00" y="398.00" width="1.70" height="6.00" fill="#1838ff"/>
<rect x="821.50" y="396.50" width="1.60" height="5.30" fill="#1818d0"/>
<rect x="922.00" y="385.60" width="1.60" height="14.40" fill="#1818d0"/>
<rect x="946.50" y="379.50" width="1.60" height="10.90" fill="#1825e3"/>
<rect x="946.50" y="392.30" width="1.60" height="6.60" fill="#1818d0"/>
<rect x="946.50" y="343.00" width="1.60" height="2.00" fill="#1212b6"/>
<rect x="1092.00" y="225.30" width="12.00" height="191.00" fill="url(#cm)"/>
<line x1="1104.50" y1="225.30" x2="1104.50" y2="416.30" stroke="#333333" stroke-width="1"/>
<line x1="1104.50" y1="225.30" x2="1113.00" y2="225.30" stroke="#333333" stroke-width="1"/>
<line x1="1104.50" y1="265.56" x2="1109.00" y2="265.56" stroke="#333333" stroke-width="1"/>
<line x1="1104.50" y1="255.42" x2="1109.00" y2="255.42" stroke="#333333" stroke-width="1"/>
<line x1="1104.50" y1="248.22" x2="1109.00" y2="248.22" stroke="#333333" stroke-width="1"/>
<line x1="1104.50" y1="242.64" x2="1109.00" y2="242.64" stroke="#333333" stroke-width="1"/>
<line x1="1104.50" y1="238.08" x2="1109.00" y2="238.08" stroke="#333333" stroke-width="1"/>
<line x1="1104.50" y1="234.22" x2="1109.00" y2="234.22" stroke="#333333" stroke-width="1"/>
<line x1="1104.50" y1="230.88" x2="1109.00" y2="230.88" stroke="#333333" stroke-width="1"/>
<line x1="1104.50" y1="227.94" x2="1109.00" y2="227.94" stroke="#333333" stroke-width="1"/>
<line x1="1104.50" y1="282.80" x2="1113.00" y2="282.80" stroke="#333333" stroke-width="1"/>
<line x1="1104.50" y1="323.06" x2="1109.00" y2="323.06" stroke="#333333" stroke-width="1"/>
<line x1="1104.50" y1="312.92" x2="1109.00" y2="312.92" stroke="#333333" stroke-width="1"/>
<line x1="1104.50" y1="305.72" x2="1109.00" y2="305.72" stroke="#333333" stroke-width="1"/>
<line x1="1104.50" y1="300.14" x2="1109.00" y2="300.14" stroke="#333333" stroke-width="1"/>
<line x1="1104.50" y1="295.58" x2="1109.00" y2="295.58" stroke="#333333" stroke-width="1"/>
<line x1="1104.50" y1="291.72" x2="1109.00" y2="291.72" stroke="#333333" stroke-width="1"/>
<line x1="1104.50" y1="288.38" x2="1109.00" y2="288.38" stroke="#333333" stroke-width="1"/>
<line x1="1104.50" y1="285.44" x2="1109.00" y2="285.44" stroke="#333333" stroke-width="1"/>
<line x1="1104.50" y1="340.50" x2="1113.00" y2="340.50" stroke="#333333" stroke-width="1"/>
<line x1="1104.50" y1="380.76" x2="1109.00" y2="380.76" stroke="#333333" stroke-width="1"/>
<line x1="1104.50" y1="370.62" x2="1109.00" y2="370.62" stroke="#333333" stroke-width="1"/>
<line x1="1104.50" y1="363.42" x2="1109.00" y2="363.42" stroke="#333333" stroke-width="1"/>
<line x1="1104.50" y1="357.84" x2="1109.00" y2="357.84" stroke="#333333" stroke-width="1"/>
<line x1="1104.50" y1="353.28" x2="1109.00" y2="353.28" stroke="#333333" stroke-width="1"/>
<line x1="1104.50" y1="349.42" x2="1109.00" y2="349.42" stroke="#333333" stroke-width="1"/>
<line x1="1104.50" y1="346.08" x2="1109.00" y2="346.08" stroke="#333333" stroke-width="1"/>
<line x1="1104.50" y1="343.14" x2="1109.00" y2="343.14" stroke="#333333" stroke-width="1"/>
<line x1="1104.50" y1="398.20" x2="1113.00" y2="398.20" stroke="#333333" stroke-width="1"/>
<line x1="1104.50" y1="415.54" x2="1109.00" y2="415.54" stroke="#333333" stroke-width="1"/>
<line x1="1104.50" y1="410.98" x2="1109.00" y2="410.98" stroke="#333333" stroke-width="1"/>
<line x1="1104.50" y1="407.12" x2="1109.00" y2="407.12" stroke="#333333" stroke-width="1"/>
<line x1="1104.50" y1="403.78" x2="1109.00" y2="403.78" stroke="#333333" stroke-width="1"/>
<line x1="1104.50" y1="400.84" x2="1109.00" y2="400.84" stroke="#333333" stroke-width="1"/>
<text x="1116.80" y="232.80" font-size="12.6" textLength="14.61" lengthAdjust="spacingAndGlyphs" fill="#3c3c3c">10</text>
<text x="1133.00" y="226.70" font-size="12.6" textLength="13.89" lengthAdjust="spacingAndGlyphs" fill="#3c3c3c">–9</text>
<text x="1116.80" y="290.30" font-size="12.6" textLength="14.61" lengthAdjust="spacingAndGlyphs" fill="#3c3c3c">10</text>
<text x="1133.00" y="284.20" font-size="12.6" textLength="21.50" lengthAdjust="spacingAndGlyphs" fill="#3c3c3c">–10</text>
<text x="1116.80" y="348.00" font-size="12.6" textLength="14.61" lengthAdjust="spacingAndGlyphs" fill="#3c3c3c">10</text>
<text x="1133.00" y="341.90" font-size="12.6" textLength="21.14" lengthAdjust="spacingAndGlyphs" fill="#3c3c3c">–11</text>
<text x="1116.80" y="405.70" font-size="12.6" textLength="14.61" lengthAdjust="spacingAndGlyphs" fill="#3c3c3c">10</text>
<text x="1133.00" y="399.60" font-size="12.6" textLength="21.64" lengthAdjust="spacingAndGlyphs" fill="#3c3c3c">–12</text>
<text transform="translate(1165.50,258.13) rotate(90)" x="0" y="0" font-size="12.2" textLength="122.36" lengthAdjust="spacingAndGlyphs" fill="#3c3c3c">pressure dyne/cm^2</text>
<rect x="95.50" y="420.50" width="985.00" height="89.00" fill="#ffffff" stroke="#333333" stroke-width="1"/>
<line x1="91.00" y1="509.02" x2="95.00" y2="509.02" stroke="#333333" stroke-width="1"/>
<line x1="91.00" y1="507.28" x2="95.00" y2="507.28" stroke="#333333" stroke-width="1"/>
<line x1="91.00" y1="505.80" x2="95.00" y2="505.80" stroke="#333333" stroke-width="1"/>
<line x1="91.00" y1="504.52" x2="95.00" y2="504.52" stroke="#333333" stroke-width="1"/>
<line x1="91.00" y1="503.40" x2="95.00" y2="503.40" stroke="#333333" stroke-width="1"/>
<line x1="87.00" y1="502.39" x2="95.00" y2="502.39" stroke="#333333" stroke-width="1"/>
<line x1="91.00" y1="495.76" x2="95.00" y2="495.76" stroke="#333333" stroke-width="1"/>
<line x1="91.00" y1="491.88" x2="95.00" y2="491.88" stroke="#333333" stroke-width="1"/>
<line x1="91.00" y1="489.13" x2="95.00" y2="489.13" stroke="#333333" stroke-width="1"/>
<line x1="91.00" y1="486.99" x2="95.00" y2="486.99" stroke="#333333" stroke-width="1"/>
<line x1="91.00" y1="485.25" x2="95.00" y2="485.25" stroke="#333333" stroke-width="1"/>
<line x1="91.00" y1="483.77" x2="95.00" y2="483.77" stroke="#333333" stroke-width="1"/>
<line x1="91.00" y1="482.49" x2="95.00" y2="482.49" stroke="#333333" stroke-width="1"/>
<line x1="91.00" y1="481.37" x2="95.00" y2="481.37" stroke="#333333" stroke-width="1"/>
<line x1="87.00" y1="480.36" x2="95.00" y2="480.36" stroke="#333333" stroke-width="1"/>
<line x1="91.00" y1="473.73" x2="95.00" y2="473.73" stroke="#333333" stroke-width="1"/>
<line x1="91.00" y1="469.85" x2="95.00" y2="469.85" stroke="#333333" stroke-width="1"/>
<line x1="91.00" y1="467.10" x2="95.00" y2="467.10" stroke="#333333" stroke-width="1"/>
<line x1="91.00" y1="464.96" x2="95.00" y2="464.96" stroke="#333333" stroke-width="1"/>
<line x1="91.00" y1="463.22" x2="95.00" y2="463.22" stroke="#333333" stroke-width="1"/>
<line x1="91.00" y1="461.74" x2="95.00" y2="461.74" stroke="#333333" stroke-width="1"/>
<line x1="91.00" y1="460.46" x2="95.00" y2="460.46" stroke="#333333" stroke-width="1"/>
<line x1="91.00" y1="459.34" x2="95.00" y2="459.34" stroke="#333333" stroke-width="1"/>
<line x1="87.00" y1="458.33" x2="95.00" y2="458.33" stroke="#333333" stroke-width="1"/>
<line x1="91.00" y1="451.70" x2="95.00" y2="451.70" stroke="#333333" stroke-width="1"/>
<line x1="91.00" y1="447.82" x2="95.00" y2="447.82" stroke="#333333" stroke-width="1"/>
<line x1="91.00" y1="445.07" x2="95.00" y2="445.07" stroke="#333333" stroke-width="1"/>
<line x1="91.00" y1="442.93" x2="95.00" y2="442.93" stroke="#333333" stroke-width="1"/>
<line x1="91.00" y1="441.19" x2="95.00" y2="441.19" stroke="#333333" stroke-width="1"/>
<line x1="91.00" y1="439.71" x2="95.00" y2="439.71" stroke="#333333" stroke-width="1"/>
<line x1="91.00" y1="438.43" x2="95.00" y2="438.43" stroke="#333333" stroke-width="1"/>
<line x1="91.00" y1="437.31" x2="95.00" y2="437.31" stroke="#333333" stroke-width="1"/>
<line x1="87.00" y1="436.30" x2="95.00" y2="436.30" stroke="#333333" stroke-width="1"/>
<line x1="91.00" y1="429.67" x2="95.00" y2="429.67" stroke="#333333" stroke-width="1"/>
<line x1="91.00" y1="425.79" x2="95.00" y2="425.79" stroke="#333333" stroke-width="1"/>
<line x1="91.00" y1="423.04" x2="95.00" y2="423.04" stroke="#333333" stroke-width="1"/>
<line x1="91.00" y1="420.90" x2="95.00" y2="420.90" stroke="#333333" stroke-width="1"/>
<text x="52.80" y="443.80" font-size="12.6" textLength="14.72" lengthAdjust="spacingAndGlyphs" fill="#3c3c3c">10</text>
<text x="68.90" y="437.70" font-size="12.6" textLength="13.79" lengthAdjust="spacingAndGlyphs" fill="#3c3c3c">–9</text>
<text x="44.90" y="465.80" font-size="12.6" textLength="14.72" lengthAdjust="spacingAndGlyphs" fill="#3c3c3c">10</text>
<text x="61.20" y="459.70" font-size="12.6" textLength="21.39" lengthAdjust="spacingAndGlyphs" fill="#3c3c3c">–10</text>
<text x="44.90" y="487.90" font-size="12.6" textLength="14.72" lengthAdjust="spacingAndGlyphs" fill="#3c3c3c">10</text>
<text x="61.20" y="481.80" font-size="12.6" textLength="21.04" lengthAdjust="spacingAndGlyphs" fill="#3c3c3c">–11</text>
<text x="44.90" y="509.90" font-size="12.6" textLength="14.72" lengthAdjust="spacingAndGlyphs" fill="#3c3c3c">10</text>
<text x="61.20" y="503.80" font-size="12.6" textLength="21.54" lengthAdjust="spacingAndGlyphs" fill="#3c3c3c">–12</text>
<text transform="translate(34.40,501.40) rotate(-90)" x="0" y="0" font-size="12.2" textLength="69.87" lengthAdjust="spacingAndGlyphs" fill="#3c3c3c">P dyn/cm^2</text>
<line x1="136.04" y1="507.60" x2="136.04" y2="509.60" stroke="#333333" stroke-width="0.9"/>
<line x1="177.08" y1="507.60" x2="177.08" y2="509.60" stroke="#333333" stroke-width="0.9"/>
<line x1="218.12" y1="506.60" x2="218.12" y2="509.60" stroke="#333333" stroke-width="0.9"/>
<line x1="259.17" y1="507.60" x2="259.17" y2="509.60" stroke="#333333" stroke-width="0.9"/>
<line x1="300.21" y1="507.60" x2="300.21" y2="509.60" stroke="#333333" stroke-width="0.9"/>
<line x1="341.25" y1="506.60" x2="341.25" y2="509.60" stroke="#333333" stroke-width="0.9"/>
<line x1="382.29" y1="507.60" x2="382.29" y2="509.60" stroke="#333333" stroke-width="0.9"/>
<line x1="423.33" y1="507.60" x2="423.33" y2="509.60" stroke="#333333" stroke-width="0.9"/>
<line x1="464.38" y1="506.60" x2="464.38" y2="509.60" stroke="#333333" stroke-width="0.9"/>
<line x1="505.42" y1="507.60" x2="505.42" y2="509.60" stroke="#333333" stroke-width="0.9"/>
<line x1="546.46" y1="507.60" x2="546.46" y2="509.60" stroke="#333333" stroke-width="0.9"/>
<line x1="587.50" y1="506.60" x2="587.50" y2="509.60" stroke="#333333" stroke-width="0.9"/>
<line x1="628.54" y1="507.60" x2="628.54" y2="509.60" stroke="#333333" stroke-width="0.9"/>
<line x1="669.58" y1="507.60" x2="669.58" y2="509.60" stroke="#333333" stroke-width="0.9"/>
<line x1="710.62" y1="506.60" x2="710.62" y2="509.60" stroke="#333333" stroke-width="0.9"/>
<line x1="751.67" y1="507.60" x2="751.67" y2="509.60" stroke="#333333" stroke-width="0.9"/>
<line x1="792.71" y1="507.60" x2="792.71" y2="509.60" stroke="#333333" stroke-width="0.9"/>
<line x1="833.75" y1="506.60" x2="833.75" y2="509.60" stroke="#333333" stroke-width="0.9"/>
<line x1="874.79" y1="507.60" x2="874.79" y2="509.60" stroke="#333333" stroke-width="0.9"/>
<line x1="915.83" y1="507.60" x2="915.83" y2="509.60" stroke="#333333" stroke-width="0.9"/>
<line x1="956.88" y1="506.60" x2="956.88" y2="509.60" stroke="#333333" stroke-width="0.9"/>
<line x1="997.92" y1="507.60" x2="997.92" y2="509.60" stroke="#333333" stroke-width="0.9"/>
<line x1="1038.96" y1="507.60" x2="1038.96" y2="509.60" stroke="#333333" stroke-width="0.9"/>
<polyline fill="none" stroke="#0000ff" stroke-width="1.3" stroke-linejoin="round" points="101.6,473.6 104.2,472.3 107.6,477.0 111.2,476.2 114.5,473.4 118.4,499.0 121.5,478.3 121.5,509.3"/>
<polyline fill="none" stroke="#0000ff" stroke-width="1.3" stroke-linejoin="round" points="128.2,509.3 128.2,478.3 136.0,493.3 138.6,479.6 143.0,472.3 145.5,502.3 148.9,471.3 152.0,477.0 155.4,466.1 159.2,477.0 162.3,487.3 166.2,474.4 169.3,479.1 172.7,475.7 179.1,476.5 183.5,472.3 186.4,484.2 189.5,474.4 193.3,485.3 196.4,483.5 200.6,470.0 207.5,471.8 210.1,477.0 213.5,471.3 217.1,472.3 220.5,479.1 224.3,483.5 227.7,469.2 230.8,477.8 234.1,469.2 237.8,472.3 241.9,475.2 245.0,471.8 248.4,461.5 251.5,469.2 254.6,473.4 258.4,467.4 262.3,469.8 265.7,466.1 268.2,474.4 271.6,470.5 275.2,476.2 282.5,468.5 285.6,473.6 292.3,468.5 295.9,472.3 299.2,471.3 302.3,472.6 307.0,466.7 312.2,464.9 316.8,469.5 323.3,465.4 326.9,472.3 330.2,467.4 336.7,474.4 340.1,471.3 343.9,474.7 349.6,471.3 353.5,477.5 357.4,478.3 360.7,493.3 364.3,477.0 367.7,474.4 372.1,485.3 374.9,473.1 376.7,475.7 377.3,509.3"/>
<polyline fill="none" stroke="#ff0000" stroke-width="1.2" stroke-linejoin="round" points="370.3,509.3 373.6,453.7 375.5,430.0 377.8,456.3 381.1,509.3"/>
<polyline fill="none" stroke="#ff0000" stroke-width="1.0" stroke-linejoin="round" points="372.1,509.3 374.7,451.2 375.5,435.7 376.5,451.2 379.3,509.3"/>
<polyline fill="none" stroke="#00ee00" stroke-width="1.3" stroke-linejoin="round" points="97.2,493.8 97.2,509.3"/>
<polyline fill="none" stroke="#00ee00" stroke-width="1.3" stroke-linejoin="round" points="114.5,493.8 114.5,509.3"/>
<polyline fill="none" stroke="#00ee00" stroke-width="1.3" stroke-linejoin="round" points="210.4,499.7 210.4,509.3"/>
<polyline fill="none" stroke="#00ee00" stroke-width="1.3" stroke-linejoin="round" points="230.5,493.0 230.5,509.3"/>
<polyline fill="none" stroke="#00ee00" stroke-width="1.3" stroke-linejoin="round" points="241.4,504.1 241.4,509.3"/>
<polyline fill="none" stroke="#00ee00" stroke-width="1.3" stroke-linejoin="round" points="261.5,493.0 261.5,509.3"/>
<polyline fill="none" stroke="#00ee00" stroke-width="1.3" stroke-linejoin="round" points="333.3,499.7 333.3,509.3"/>
<polyline fill="none" stroke="#00ee00" stroke-width="1.3" stroke-linejoin="round" points="340.1,499.7 340.1,509.3"/>
<polyline fill="none" stroke="#00ee00" stroke-width="1.3" stroke-linejoin="round" points="367.7,493.0 367.7,509.3"/>
<polyline fill="none" stroke="#00ee00" stroke-width="1.2" stroke-linejoin="round" points="289.4,509.3 289.9,504.1 292.5,502.1 292.8,509.3"/>
<polyline fill="none" stroke="#ff0000" stroke-width="1.3" stroke-linejoin="round" points="99.0,507.5 99.0,509.3"/>
<polyline fill="none" stroke="#ff0000" stroke-width="1.3" stroke-linejoin="round" points="140.4,508.0 140.4,509.3"/>
<polyline fill="none" stroke="#ff0000" stroke-width="1.3" stroke-linejoin="round" points="152.5,504.9 152.5,509.3"/>
<polyline fill="none" stroke="#ff0000" stroke-width="1.3" stroke-linejoin="round" points="242.9,507.5 242.9,509.3"/>
<polyline fill="none" stroke="#ff0000" stroke-width="1.3" stroke-linejoin="round" points="246.5,505.4 246.5,509.3"/>
<polyline fill="none" stroke="#ff0000" stroke-width="1.3" stroke-linejoin="round" points="247.6,504.9 247.6,509.3"/>
<polyline fill="none" stroke="#ff0000" stroke-width="1.3" stroke-linejoin="round" points="259.2,505.9 259.2,509.3"/>
<polyline fill="none" stroke="#ff0000" stroke-width="1.3" stroke-linejoin="round" points="298.0,504.9 298.0,509.3"/>
<polyline fill="none" stroke="#ff0000" stroke-width="1.3" stroke-linejoin="round" points="317.8,506.7 317.8,509.3"/>
<polyline fill="none" stroke="#ff0000" stroke-width="1.3" stroke-linejoin="round" points="356.1,506.7 356.1,509.3"/>
<polyline fill="none" stroke="#0000ff" stroke-width="1.3" stroke-linejoin="round" points="630.0,509.2 630.0,494.6"/>
<polyline fill="none" stroke="#ff0000" stroke-width="1.3" stroke-linejoin="round" points="495.6,507.7 495.6,509.2"/>
<polyline fill="none" stroke="#ff0000" stroke-width="1.3" stroke-linejoin="round" points="535.2,503.1 535.2,509.2"/>
<polyline fill="none" stroke="#ff0000" stroke-width="1.3" stroke-linejoin="round" points="573.2,504.0 573.2,509.2"/>
<polyline fill="none" stroke="#ff0000" stroke-width="1.3" stroke-linejoin="round" points="581.3,507.7 581.3,509.2"/>
<polyline fill="none" stroke="#ff0000" stroke-width="1.3" stroke-linejoin="round" points="602.3,506.9 602.3,509.2"/>
<polyline fill="none" stroke="#ff0000" stroke-width="1.3" stroke-linejoin="round" points="610.5,506.9 610.5,509.2"/>
<polyline fill="none" stroke="#ff0000" stroke-width="1.3" stroke-linejoin="round" points="635.6,507.7 635.6,509.2"/>
<polyline fill="none" stroke="#ff0000" stroke-width="1.3" stroke-linejoin="round" points="650.2,507.7 650.2,509.2"/>
<polyline fill="none" stroke="#ff0000" stroke-width="1.3" stroke-linejoin="round" points="698.6,507.7 698.6,509.2"/>
<polyline fill="none" stroke="#ff0000" stroke-width="1.3" stroke-linejoin="round" points="728.3,504.8 728.3,509.2"/>
<polyline fill="none" stroke="#0000ff" stroke-width="1.3" stroke-linejoin="round" points="818.2,509.2 822.2,477.7 826.0,509.2"/>
<polyline fill="none" stroke="#ff0000" stroke-width="1.3" stroke-linejoin="round" points="818.7,509.2 821.7,487.9 825.2,509.2"/>
<polyline fill="none" stroke="#ff0000" stroke-width="1.3" stroke-linejoin="round" points="877.1,509.2 878.2,502.5 879.4,509.2"/>
<polyline fill="none" stroke="#0000ff" stroke-width="1.3" stroke-linejoin="round" points="880.6,509.2 880.6,504.8"/>
<polyline fill="none" stroke="#ff0000" stroke-width="1.3" stroke-linejoin="round" points="917.9,509.2 919.4,492.3 920.8,496.7 922.9,485.9 925.2,493.7 926.7,509.2"/>
<polyline fill="none" stroke="#0000ff" stroke-width="1.3" stroke-linejoin="round" points="922.3,509.2 924.3,490.2 928.1,509.2"/>
<polyline fill="none" stroke="#ff0000" stroke-width="1.3" stroke-linejoin="round" points="941.2,502.5 944.2,492.3 947.1,479.7 949.4,486.5 952.3,509.2"/>
<polyline fill="none" stroke="#00ee00" stroke-width="1.3" stroke-linejoin="round" points="941.2,509.2 941.8,501.0 944.2,496.7 948.5,492.3 950.0,509.2"/>
<polyline fill="none" stroke="#0000ff" stroke-width="1.3" stroke-linejoin="round" points="948.5,509.2 948.5,490.2 950.0,509.2"/>
<polyline fill="none" stroke="#00ee00" stroke-width="1.3" stroke-linejoin="round" points="968.1,509.2 968.1,506.0"/>
<polyline fill="none" stroke="#ff0000" stroke-width="1.3" stroke-linejoin="round" points="1017.1,509.2 1017.1,500.5"/>
<polyline fill="none" stroke="#ff0000" stroke-width="1.3" stroke-linejoin="round" points="1020.6,509.2 1020.6,504.8"/>
<polyline fill="none" stroke="#ff0000" stroke-width="1.3" stroke-linejoin="round" points="1027.3,509.2 1027.9,487.9 1030.2,492.3 1032.2,493.7 1034.0,499.6 1036.0,499.0 1037.5,509.2"/>
<polyline fill="none" stroke="#0000ff" stroke-width="1.3" stroke-linejoin="round" points="1030.8,509.2 1030.8,499.0 1032.5,509.2"/>
<polyline fill="none" stroke="#ff0000" stroke-width="1.3" stroke-linejoin="round" points="1067.2,509.2 1067.2,502.5"/>
<polyline fill="none" stroke="#0000ff" stroke-width="1.3" stroke-linejoin="round" points="1074.5,509.2 1074.5,485.6"/>
<polyline fill="none" stroke="#00ee00" stroke-width="1.3" stroke-linejoin="round" points="1078.3,509.2 1078.3,471.9"/>
<polyline fill="none" stroke="#ff0000" stroke-width="1.3" stroke-linejoin="round" points="749.3,509.2 749.3,507.5"/>
<polyline fill="none" stroke="#ff0000" stroke-width="1.3" stroke-linejoin="round" points="804.2,509.2 804.2,507.5"/>
<polyline fill="none" stroke="#ff0000" stroke-width="1.3" stroke-linejoin="round" points="845.6,509.2 845.6,507.5"/>
<polyline fill="none" stroke="#ff0000" stroke-width="1.3" stroke-linejoin="round" points="987.9,509.2 987.9,507.5"/>
<polyline fill="none" stroke="#ff0000" stroke-width="1.3" stroke-linejoin="round" points="995.2,509.2 995.2,507.5"/>
<polyline fill="none" stroke="#ff0000" stroke-width="1.3" stroke-linejoin="round" points="1051.5,509.2 1051.5,507.5"/>
<path d="M1091.00,425.90 L1103.00,430.75" stroke="#0000ff" stroke-width="1.4" fill="none"/>
<text x="1107.35" y="432.60" font-size="12.2" textLength="53.22" lengthAdjust="spacingAndGlyphs" fill="#3c3c3c">CHEMS–P</text>
<path d="M1091.00,440.95 L1103.00,445.80" stroke="#ff0000" stroke-width="1.4" fill="none"/>
<text x="1107.00" y="447.60" font-size="12.2" textLength="52.88" lengthAdjust="spacingAndGlyphs" fill="#3c3c3c">LEMMS–P</text>
<path d="M1091.00,456.00 L1103.00,460.85" stroke="#00ee00" stroke-width="1.4" fill="none"/>
<text x="1107.34" y="462.60" font-size="12.2" textLength="55.29" lengthAdjust="spacingAndGlyphs" fill="#3c3c3c">CHEMS–O</text>
<rect x="95.00" y="513.00" width="986.00" height="179.00" fill="#000000"/>
<rect x="98.00" y="526.80" width="1.00" height="24.70" fill="#1313b8"/>
<rect x="102.00" y="526.80" width="3.00" height="24.70" fill="#080850"/>
<rect x="105.00" y="526.80" width="2.00" height="24.70" fill="#0e0ea4"/>
<rect x="118.00" y="526.80" width="1.00" height="24.70" fill="#1819d2"/>
<rect x="125.00" y="526.80" width="1.00" height="24.70" fill="#0d0d9d"/>
<rect x="132.00" y="526.80" width="3.00" height="24.70" fill="#080850"/>
<rect x="135.00" y="526.80" width="3.00" height="24.70" fill="#1818d0"/>
<rect x="144.00" y="519.80" width="2.00" height="31.70" fill="#090966"/>
<rect x="147.00" y="526.80" width="1.00" height="24.70" fill="#1515c3"/>
<rect x="150.00" y="526.80" width="3.00" height="24.70" fill="#08085d"/>
<rect x="153.00" y="519.80" width="1.00" height="31.70" fill="#1111ae"/>
<rect x="155.00" y="524.80" width="2.00" height="26.70" fill="#1717cb"/>
<rect x="164.00" y="526.80" width="1.00" height="24.70" fill="#0e0ea5"/>
<rect x="167.00" y="526.80" width="2.00" height="24.70" fill="#181ed9"/>
<rect x="176.00" y="526.80" width="2.00" height="24.70" fill="#0c0c98"/>
<rect x="187.00" y="526.80" width="1.00" height="24.70" fill="#1313ba"/>
<rect x="190.00" y="526.80" width="2.00" height="24.70" fill="#1313ba"/>
<rect x="198.00" y="526.80" width="1.00" height="24.70" fill="#1010ab"/>
<rect x="201.00" y="526.80" width="1.00" height="24.70" fill="#0b0b95"/>
<rect x="211.00" y="526.80" width="1.00" height="24.70" fill="#181dd7"/>
<rect x="221.00" y="526.80" width="1.00" height="24.70" fill="#090970"/>
<rect x="226.00" y="526.80" width="1.00" height="24.70" fill="#1111b0"/>
<rect x="228.00" y="526.80" width="3.00" height="24.70" fill="#181dd7"/>
<rect x="234.00" y="519.80" width="1.00" height="31.70" fill="#0e0ea3"/>
<rect x="239.00" y="519.80" width="1.00" height="31.70" fill="#181dd7"/>
<rect x="244.00" y="526.80" width="1.00" height="24.70" fill="#0c0c9a"/>
<rect x="246.00" y="526.80" width="3.00" height="24.70" fill="#1616c5"/>
<rect x="251.00" y="523.80" width="3.00" height="27.70" fill="#181bd5"/>
<rect x="254.00" y="526.80" width="1.00" height="24.70" fill="#1616c7"/>
<rect x="263.00" y="526.80" width="1.00" height="24.70" fill="#1616c7"/>
<rect x="284.00" y="519.80" width="1.00" height="31.70" fill="#1414bf"/>
<rect x="287.00" y="526.80" width="2.00" height="24.70" fill="#090962"/>
<rect x="291.00" y="519.80" width="1.00" height="31.70" fill="#181dd7"/>
<rect x="293.00" y="526.80" width="3.00" height="24.70" fill="#181cd6"/>
<rect x="296.00" y="526.80" width="2.00" height="24.70" fill="#0c0c97"/>
<rect x="313.00" y="526.80" width="2.00" height="24.70" fill="#1010aa"/>
<rect x="318.00" y="526.80" width="2.00" height="24.70" fill="#1010ab"/>
<rect x="325.00" y="526.80" width="3.00" height="24.70" fill="#1717ca"/>
<rect x="328.00" y="526.80" width="2.00" height="24.70" fill="#0e0ea4"/>
<rect x="333.00" y="526.80" width="1.00" height="24.70" fill="#0e0ea4"/>
<rect x="347.00" y="526.80" width="2.00" height="24.70" fill="#080850"/>
<rect x="352.00" y="526.80" width="1.00" height="24.70" fill="#1616c6"/>
<rect x="354.00" y="521.80" width="2.00" height="29.70" fill="#080853"/>
<rect x="365.00" y="526.80" width="1.00" height="24.70" fill="#0b0b97"/>
<rect x="369.00" y="524.80" width="1.00" height="26.70" fill="#1818ce"/>
<rect x="374.00" y="526.80" width="3.00" height="24.70" fill="#0a0a90"/>
<rect x="381.00" y="524.80" width="1.00" height="26.70" fill="#0d0d9d"/>
<rect x="388.00" y="524.80" width="3.00" height="26.70" fill="#1818d1"/>
<rect x="398.00" y="526.80" width="1.00" height="24.70" fill="#1010ac"/>
<rect x="416.00" y="526.80" width="1.00" height="24.70" fill="#1313bb"/>
<rect x="426.00" y="524.80" width="1.00" height="26.70" fill="#0c0c9a"/>
<rect x="433.00" y="526.80" width="3.00" height="24.70" fill="#0c0c9a"/>
<rect x="436.00" y="526.80" width="1.00" height="24.70" fill="#090974"/>
<rect x="442.00" y="519.80" width="1.00" height="31.70" fill="#1819d1"/>
<rect x="445.00" y="526.80" width="1.00" height="24.70" fill="#1111b0"/>
<rect x="447.00" y="526.80" width="2.00" height="24.70" fill="#1818d0"/>
<rect x="458.00" y="521.80" width="1.00" height="29.70" fill="#0b0b94"/>
<rect x="462.00" y="526.80" width="2.00" height="24.70" fill="#080850"/>
<rect x="471.00" y="526.80" width="1.00" height="24.70" fill="#1818ce"/>
<rect x="483.00" y="521.80" width="1.00" height="29.70" fill="#1515c1"/>
<rect x="490.00" y="526.80" width="1.00" height="24.70" fill="#1414bf"/>
<rect x="496.00" y="524.80" width="1.00" height="26.70" fill="#1313b7"/>
<rect x="499.00" y="523.80" width="1.00" height="27.70" fill="#1616c6"/>
<rect x="517.00" y="519.80" width="1.00" height="31.70" fill="#080850"/>
<rect x="520.00" y="526.80" width="1.00" height="24.70" fill="#0f0fa5"/>
<rect x="522.00" y="526.80" width="1.00" height="24.70" fill="#1010ad"/>
<rect x="524.00" y="523.80" width="3.00" height="27.70" fill="#0a0a91"/>
<rect x="530.00" y="526.80" width="2.00" height="24.70" fill="#1010aa"/>
<rect x="551.00" y="526.80" width="2.00" height="24.70" fill="#1414bd"/>
<rect x="556.00" y="526.80" width="1.00" height="24.70" fill="#1313b9"/>
<rect x="558.00" y="526.80" width="3.00" height="24.70" fill="#0b0b96"/>
<rect x="561.00" y="526.80" width="2.00" height="24.70" fill="#0d0d9c"/>
<rect x="566.00" y="519.80" width="1.00" height="31.70" fill="#0f0fa7"/>
<rect x="568.00" y="526.80" width="1.00" height="24.70" fill="#0d0da0"/>
<rect x="571.00" y="524.80" width="2.00" height="26.70" fill="#1010ad"/>
<rect x="581.00" y="526.80" width="1.00" height="24.70" fill="#1717ca"/>
<rect x="587.00" y="521.80" width="3.00" height="29.70" fill="#0b0b95"/>
<rect x="592.00" y="526.80" width="1.00" height="24.70" fill="#0c0c98"/>
<rect x="617.00" y="526.80" width="3.00" height="24.70" fill="#1010ab"/>
<rect x="620.00" y="526.80" width="1.00" height="24.70" fill="#0b0b95"/>
<rect x="626.00" y="519.80" width="3.00" height="31.70" fill="#1414bc"/>
<rect x="629.00" y="521.80" width="1.00" height="29.70" fill="#1818d0"/>
<rect x="635.00" y="521.80" width="2.00" height="29.70" fill="#0b0b96"/>
<rect x="647.00" y="521.80" width="3.00" height="29.70" fill="#1010ab"/>
<rect x="650.00" y="526.80" width="1.00" height="24.70" fill="#1616c8"/>
<rect x="660.00" y="526.80" width="1.00" height="24.70" fill="#080850"/>
<rect x="668.00" y="526.80" width="1.00" height="24.70" fill="#080850"/>
<rect x="670.00" y="526.80" width="1.00" height="24.70" fill="#080850"/>
<rect x="672.00" y="521.80" width="1.00" height="29.70" fill="#1616c7"/>
<rect x="678.00" y="526.80" width="3.00" height="24.70" fill="#0b0b95"/>
<rect x="686.00" y="526.80" width="1.00" height="24.70" fill="#0f0fa8"/>
<rect x="694.00" y="526.80" width="1.00" height="24.70" fill="#0b0b96"/>
<rect x="707.00" y="524.80" width="2.00" height="26.70" fill="#1111ae"/>
<rect x="712.00" y="519.80" width="2.00" height="31.70" fill="#080850"/>
<rect x="723.00" y="524.80" width="1.00" height="26.70" fill="#1515c2"/>
<rect x="726.00" y="526.80" width="3.00" height="24.70" fill="#1819d1"/>
<rect x="732.00" y="526.80" width="1.00" height="24.70" fill="#1212b6"/>
<rect x="735.00" y="526.80" width="1.00" height="24.70" fill="#1313ba"/>
<rect x="742.00" y="521.80" width="2.00" height="29.70" fill="#181cd5"/>
<rect x="745.00" y="526.80" width="1.00" height="24.70" fill="#1313b7"/>
<rect x="754.00" y="523.80" width="1.00" height="27.70" fill="#181dd8"/>
<rect x="760.00" y="519.80" width="1.00" height="31.70" fill="#1818d1"/>
<rect x="770.00" y="526.80" width="1.00" height="24.70" fill="#0c0c98"/>
<rect x="773.00" y="526.80" width="3.00" height="24.70" fill="#1616c7"/>
<rect x="778.00" y="526.80" width="3.00" height="24.70" fill="#080851"/>
<rect x="782.00" y="526.80" width="1.00" height="24.70" fill="#1313b9"/>
<rect x="786.00" y="526.80" width="1.00" height="24.70" fill="#0e0ea0"/>
<rect x="792.00" y="523.80" width="2.00" height="27.70" fill="#1515c1"/>
<rect x="795.00" y="519.80" width="1.00" height="31.70" fill="#0b0b93"/>
<rect x="805.00" y="521.80" width="3.00" height="29.70" fill="#1010ad"/>
<rect x="819.00" y="526.80" width="2.00" height="24.70" fill="#1010ac"/>
<rect x="835.00" y="526.80" width="1.00" height="24.70" fill="#1313bb"/>
<rect x="842.00" y="526.80" width="1.00" height="24.70" fill="#0b0b92"/>
<rect x="845.00" y="526.80" width="1.00" height="24.70" fill="#1111b1"/>
<rect x="856.00" y="526.80" width="1.00" height="24.70" fill="#080850"/>
<rect x="861.00" y="524.80" width="3.00" height="26.70" fill="#1212b6"/>
<rect x="868.00" y="526.80" width="1.00" height="24.70" fill="#181bd5"/>
<rect x="873.00" y="523.80" width="3.00" height="27.70" fill="#0c0c9a"/>
<rect x="878.00" y="526.80" width="3.00" height="24.70" fill="#1414bf"/>
<rect x="882.00" y="523.80" width="1.00" height="27.70" fill="#090962"/>
<rect x="902.00" y="526.80" width="1.00" height="24.70" fill="#0f0fa5"/>
<rect x="908.00" y="526.80" width="1.00" height="24.70" fill="#1010ad"/>
<rect x="910.00" y="526.80" width="1.00" height="24.70" fill="#0f0fa6"/>
<rect x="915.00" y="526.80" width="1.00" height="24.70" fill="#1414c0"/>
<rect x="918.00" y="523.80" width="2.00" height="27.70" fill="#0b0b95"/>
<rect x="925.00" y="526.80" width="1.00" height="24.70" fill="#08085c"/>
<rect x="933.00" y="526.80" width="2.00" height="24.70" fill="#0b0b92"/>
<rect x="954.00" y="521.80" width="1.00" height="29.70" fill="#080850"/>
<rect x="957.00" y="524.80" width="2.00" height="26.70" fill="#080850"/>
<rect x="963.00" y="526.80" width="1.00" height="24.70" fill="#1414be"/>
<rect x="966.00" y="526.80" width="2.00" height="24.70" fill="#080854"/>
<rect x="973.00" y="523.80" width="1.00" height="27.70" fill="#1414bd"/>
<rect x="976.00" y="526.80" width="2.00" height="24.70" fill="#1717cc"/>
<rect x="983.00" y="526.80" width="1.00" height="24.70" fill="#0f0fa5"/>
<rect x="989.00" y="526.80" width="1.00" height="24.70" fill="#1819d2"/>
<rect x="995.00" y="526.80" width="1.00" height="24.70" fill="#1313b8"/>
<rect x="997.00" y="526.80" width="3.00" height="24.70" fill="#0f0fa8"/>
<rect x="1000.00" y="526.80" width="3.00" height="24.70" fill="#0c0c9a"/>
<rect x="1003.00" y="526.80" width="3.00" height="24.70" fill="#181ad4"/>
<rect x="1006.00" y="526.80" width="1.00" height="24.70" fill="#1212b4"/>
<rect x="1035.00" y="526.80" width="3.00" height="24.70" fill="#1111af"/>
<rect x="1046.00" y="526.80" width="1.00" height="24.70" fill="#1010ad"/>
<rect x="1057.00" y="521.80" width="1.00" height="29.70" fill="#1717cd"/>
<rect x="1062.00" y="526.80" width="1.00" height="24.70" fill="#1515c2"/>
<rect x="1072.00" y="526.80" width="3.00" height="24.70" fill="#1818ce"/>
<rect x="1075.00" y="526.80" width="1.00" height="24.70" fill="#1717ca"/>
<rect x="98.00" y="551.50" width="1.00" height="16.70" fill="#1414be"/>
<rect x="101.00" y="551.50" width="3.00" height="16.70" fill="#1825e4"/>
<rect x="104.00" y="551.50" width="3.00" height="16.70" fill="#1826e4"/>
<rect x="121.00" y="551.50" width="2.00" height="16.70" fill="#1822df"/>
<rect x="128.00" y="551.50" width="2.00" height="16.70" fill="#1824e1"/>
<rect x="135.00" y="551.50" width="3.00" height="16.70" fill="#1515c3"/>
<rect x="140.00" y="551.50" width="1.00" height="16.70" fill="#1717cd"/>
<rect x="143.00" y="551.50" width="3.00" height="16.70" fill="#1515c4"/>
<rect x="146.00" y="551.50" width="2.00" height="16.70" fill="#1010aa"/>
<rect x="149.00" y="551.50" width="3.00" height="16.70" fill="#181ad4"/>
<rect x="152.00" y="551.50" width="3.00" height="16.70" fill="#181cd5"/>
<rect x="155.00" y="551.50" width="2.00" height="16.70" fill="#1823e1"/>
<rect x="158.00" y="551.50" width="1.00" height="16.70" fill="#1818cf"/>
<rect x="164.00" y="551.50" width="2.00" height="16.70" fill="#1010ac"/>
<rect x="170.00" y="551.50" width="2.00" height="16.70" fill="#181ed9"/>
<rect x="174.00" y="551.50" width="1.00" height="16.70" fill="#1824e2"/>
<rect x="178.00" y="551.50" width="1.00" height="16.70" fill="#090976"/>
<rect x="183.00" y="551.50" width="3.00" height="16.70" fill="#08085d"/>
<rect x="186.00" y="551.50" width="3.00" height="16.70" fill="#1829e9"/>
<rect x="189.00" y="551.50" width="3.00" height="16.70" fill="#1414c0"/>
<rect x="195.00" y="551.50" width="3.00" height="16.70" fill="#1414bd"/>
<rect x="200.00" y="551.50" width="2.00" height="16.70" fill="#090965"/>
<rect x="211.00" y="551.50" width="2.00" height="16.70" fill="#181bd5"/>
<rect x="214.00" y="551.50" width="3.00" height="16.70" fill="#1616c6"/>
<rect x="219.00" y="551.50" width="3.00" height="16.70" fill="#1111b2"/>
<rect x="222.00" y="551.50" width="3.00" height="16.70" fill="#1313bb"/>
<rect x="226.00" y="551.50" width="1.00" height="16.70" fill="#1818ce"/>
<rect x="228.00" y="551.50" width="3.00" height="16.70" fill="#1212b5"/>
<rect x="231.00" y="551.50" width="2.00" height="16.70" fill="#090969"/>
<rect x="237.00" y="551.50" width="3.00" height="16.70" fill="#1819d2"/>
<rect x="244.00" y="551.50" width="1.00" height="16.70" fill="#1820dc"/>
<rect x="246.00" y="551.50" width="1.00" height="16.70" fill="#09096e"/>
<rect x="251.00" y="551.50" width="3.00" height="16.70" fill="#1414bf"/>
<rect x="254.00" y="551.50" width="1.00" height="16.70" fill="#181ed9"/>
<rect x="260.00" y="551.50" width="1.00" height="16.70" fill="#1111b2"/>
<rect x="263.00" y="551.50" width="1.00" height="16.70" fill="#1823e0"/>
<rect x="267.00" y="551.50" width="2.00" height="16.70" fill="#1828e8"/>
<rect x="277.00" y="551.50" width="3.00" height="16.70" fill="#080853"/>
<rect x="282.00" y="551.50" width="1.00" height="16.70" fill="#1825e4"/>
<rect x="284.00" y="551.50" width="2.00" height="16.70" fill="#181cd6"/>
<rect x="291.00" y="551.50" width="1.00" height="16.70" fill="#1010aa"/>
<rect x="293.00" y="551.50" width="3.00" height="16.70" fill="#181ed9"/>
<rect x="296.00" y="551.50" width="3.00" height="16.70" fill="#080850"/>
<rect x="299.00" y="551.50" width="2.00" height="16.70" fill="#1111af"/>
<rect x="317.00" y="551.50" width="3.00" height="16.70" fill="#1515c2"/>
<rect x="320.00" y="551.50" width="3.00" height="16.70" fill="#1313b9"/>
<rect x="325.00" y="551.50" width="3.00" height="16.70" fill="#1821dd"/>
<rect x="328.00" y="551.50" width="1.00" height="16.70" fill="#09096a"/>
<rect x="333.00" y="551.50" width="1.00" height="16.70" fill="#1818cf"/>
<rect x="346.00" y="551.50" width="3.00" height="16.70" fill="#1212b3"/>
<rect x="349.00" y="551.50" width="1.00" height="16.70" fill="#181ed8"/>
<rect x="353.00" y="551.50" width="3.00" height="16.70" fill="#1212b4"/>
<rect x="364.00" y="551.50" width="3.00" height="16.70" fill="#1824e2"/>
<rect x="372.00" y="551.50" width="1.00" height="16.70" fill="#0a0a89"/>
<rect x="374.00" y="551.50" width="3.00" height="16.70" fill="#1515c4"/>
<rect x="381.00" y="551.50" width="1.00" height="16.70" fill="#1010ab"/>
<rect x="383.00" y="551.50" width="3.00" height="16.70" fill="#09097b"/>
<rect x="386.00" y="551.50" width="1.00" height="16.70" fill="#181dd7"/>
<rect x="389.00" y="551.50" width="1.00" height="16.70" fill="#181dd8"/>
<rect x="394.00" y="551.50" width="1.00" height="16.70" fill="#1717cb"/>
<rect x="398.00" y="551.50" width="1.00" height="16.70" fill="#090970"/>
<rect x="401.00" y="551.50" width="2.00" height="16.70" fill="#1414bf"/>
<rect x="406.00" y="551.50" width="1.00" height="16.70" fill="#08085b"/>
<rect x="409.00" y="551.50" width="1.00" height="16.70" fill="#1823e0"/>
<rect x="414.00" y="551.50" width="3.00" height="16.70" fill="#1616c9"/>
<rect x="426.00" y="551.50" width="2.00" height="16.70" fill="#1212b5"/>
<rect x="431.00" y="551.50" width="3.00" height="16.70" fill="#1313b9"/>
<rect x="436.00" y="551.50" width="1.00" height="16.70" fill="#1313ba"/>
<rect x="438.00" y="551.50" width="3.00" height="16.70" fill="#181ad3"/>
<rect x="442.00" y="551.50" width="1.00" height="16.70" fill="#1212b6"/>
<rect x="445.00" y="551.50" width="1.00" height="16.70" fill="#1111b2"/>
<rect x="447.00" y="551.50" width="3.00" height="16.70" fill="#1826e5"/>
<rect x="452.00" y="551.50" width="1.00" height="16.70" fill="#1313b9"/>
<rect x="457.00" y="551.50" width="1.00" height="16.70" fill="#1515c4"/>
<rect x="461.00" y="551.50" width="1.00" height="16.70" fill="#1010aa"/>
<rect x="463.00" y="551.50" width="1.00" height="16.70" fill="#1111b2"/>
<rect x="465.00" y="551.50" width="3.00" height="16.70" fill="#1717cb"/>
<rect x="483.00" y="551.50" width="1.00" height="16.70" fill="#1819d1"/>
<rect x="491.00" y="551.50" width="1.00" height="16.70" fill="#181ed9"/>
<rect x="496.00" y="551.50" width="1.00" height="16.70" fill="#1111b0"/>
<rect x="502.00" y="551.50" width="1.00" height="16.70" fill="#1212b3"/>
<rect x="504.00" y="551.50" width="2.00" height="16.70" fill="#1010aa"/>
<rect x="517.00" y="551.50" width="1.00" height="16.70" fill="#1824e2"/>
<rect x="520.00" y="551.50" width="3.00" height="16.70" fill="#0a0a8b"/>
<rect x="524.00" y="551.50" width="3.00" height="16.70" fill="#1825e3"/>
<rect x="528.00" y="551.50" width="3.00" height="16.70" fill="#1313ba"/>
<rect x="531.00" y="551.50" width="1.00" height="16.70" fill="#1212b3"/>
<rect x="537.00" y="551.50" width="1.00" height="16.70" fill="#1828e8"/>
<rect x="540.00" y="551.50" width="3.00" height="16.70" fill="#182aea"/>
<rect x="544.00" y="551.50" width="3.00" height="16.70" fill="#1821de"/>
<rect x="551.00" y="551.50" width="1.00" height="16.70" fill="#1414bd"/>
<rect x="553.00" y="551.50" width="1.00" height="16.70" fill="#1820dc"/>
<rect x="556.00" y="551.50" width="1.00" height="16.70" fill="#1616c7"/>
<rect x="558.00" y="551.50" width="3.00" height="16.70" fill="#181fda"/>
<rect x="561.00" y="551.50" width="2.00" height="16.70" fill="#080850"/>
<rect x="565.00" y="551.50" width="3.00" height="16.70" fill="#1212b6"/>
<rect x="568.00" y="551.50" width="1.00" height="16.70" fill="#1010ac"/>
<rect x="570.00" y="551.50" width="1.00" height="16.70" fill="#09097b"/>
<rect x="576.00" y="551.50" width="3.00" height="16.70" fill="#090965"/>
<rect x="579.00" y="551.50" width="1.00" height="16.70" fill="#1822df"/>
<rect x="581.00" y="551.50" width="1.00" height="16.70" fill="#181bd5"/>
<rect x="584.00" y="551.50" width="1.00" height="16.70" fill="#1822de"/>
<rect x="587.00" y="551.50" width="3.00" height="16.70" fill="#1010ae"/>
<rect x="590.00" y="551.50" width="3.00" height="16.70" fill="#1616c8"/>
<rect x="594.00" y="551.50" width="2.00" height="16.70" fill="#0a0a8e"/>
<rect x="602.00" y="551.50" width="3.00" height="16.70" fill="#1111b1"/>
<rect x="615.00" y="551.50" width="1.00" height="16.70" fill="#181cd5"/>
<rect x="619.00" y="551.50" width="2.00" height="16.70" fill="#1820db"/>
<rect x="626.00" y="551.50" width="3.00" height="16.70" fill="#080850"/>
<rect x="629.00" y="551.50" width="3.00" height="16.70" fill="#181cd5"/>
<rect x="635.00" y="551.50" width="1.00" height="16.70" fill="#1819d1"/>
<rect x="637.00" y="551.50" width="3.00" height="16.70" fill="#1826e5"/>
<rect x="644.00" y="551.50" width="3.00" height="16.70" fill="#1818cf"/>
<rect x="647.00" y="551.50" width="3.00" height="16.70" fill="#181dd7"/>
<rect x="653.00" y="551.50" width="1.00" height="16.70" fill="#1827e6"/>
<rect x="656.00" y="551.50" width="3.00" height="16.70" fill="#1616c5"/>
<rect x="660.00" y="551.50" width="1.00" height="16.70" fill="#080859"/>
<rect x="668.00" y="551.50" width="1.00" height="16.70" fill="#0a0a89"/>
<rect x="670.00" y="551.50" width="1.00" height="16.70" fill="#1313bb"/>
<rect x="672.00" y="551.50" width="2.00" height="16.70" fill="#1827e6"/>
<rect x="675.00" y="551.50" width="2.00" height="16.70" fill="#181fda"/>
<rect x="678.00" y="551.50" width="1.00" height="16.70" fill="#1829e9"/>
<rect x="686.00" y="551.50" width="1.00" height="16.70" fill="#1822df"/>
<rect x="689.00" y="551.50" width="1.00" height="16.70" fill="#1414bc"/>
<rect x="694.00" y="551.50" width="1.00" height="16.70" fill="#090966"/>
<rect x="696.00" y="551.50" width="2.00" height="16.70" fill="#1313b7"/>
<rect x="704.00" y="551.50" width="1.00" height="16.70" fill="#181bd5"/>
<rect x="707.00" y="551.50" width="1.00" height="16.70" fill="#181ed8"/>
<rect x="710.00" y="551.50" width="2.00" height="16.70" fill="#1820dc"/>
<rect x="726.00" y="551.50" width="2.00" height="16.70" fill="#181ed9"/>
<rect x="729.00" y="551.50" width="2.00" height="16.70" fill="#1414bd"/>
<rect x="732.00" y="551.50" width="1.00" height="16.70" fill="#182beb"/>
<rect x="740.00" y="551.50" width="1.00" height="16.70" fill="#1818d1"/>
<rect x="742.00" y="551.50" width="2.00" height="16.70" fill="#1821de"/>
<rect x="745.00" y="551.50" width="1.00" height="16.70" fill="#1820db"/>
<rect x="749.00" y="551.50" width="1.00" height="16.70" fill="#1824e2"/>
<rect x="754.00" y="551.50" width="1.00" height="16.70" fill="#1313b9"/>
<rect x="756.00" y="551.50" width="2.00" height="16.70" fill="#090972"/>
<rect x="759.00" y="551.50" width="1.00" height="16.70" fill="#181fdb"/>
<rect x="763.00" y="551.50" width="3.00" height="16.70" fill="#1822de"/>
<rect x="766.00" y="551.50" width="1.00" height="16.70" fill="#181bd4"/>
<rect x="770.00" y="551.50" width="3.00" height="16.70" fill="#1616c6"/>
<rect x="773.00" y="551.50" width="3.00" height="16.70" fill="#182bec"/>
<rect x="776.00" y="551.50" width="2.00" height="16.70" fill="#1824e2"/>
<rect x="781.00" y="551.50" width="2.00" height="16.70" fill="#1414c0"/>
<rect x="792.00" y="551.50" width="2.00" height="16.70" fill="#1828e8"/>
<rect x="795.00" y="551.50" width="1.00" height="16.70" fill="#1717cd"/>
<rect x="800.00" y="551.50" width="3.00" height="16.70" fill="#1313b8"/>
<rect x="803.00" y="551.50" width="1.00" height="16.70" fill="#0a0a88"/>
<rect x="805.00" y="551.50" width="1.00" height="16.70" fill="#182aea"/>
<rect x="807.00" y="551.50" width="3.00" height="16.70" fill="#1823e0"/>
<rect x="811.00" y="551.50" width="1.00" height="16.70" fill="#1515c3"/>
<rect x="817.00" y="551.50" width="1.00" height="16.70" fill="#080853"/>
<rect x="819.00" y="551.50" width="2.00" height="16.70" fill="#181dd7"/>
<rect x="837.00" y="551.50" width="1.00" height="16.70" fill="#1010aa"/>
<rect x="842.00" y="551.50" width="1.00" height="16.70" fill="#090979"/>
<rect x="847.00" y="551.50" width="1.00" height="16.70" fill="#1414c0"/>
<rect x="849.00" y="551.50" width="3.00" height="16.70" fill="#1818ce"/>
<rect x="852.00" y="551.50" width="1.00" height="16.70" fill="#181fdb"/>
<rect x="856.00" y="551.50" width="1.00" height="16.70" fill="#080850"/>
<rect x="861.00" y="551.50" width="3.00" height="16.70" fill="#090972"/>
<rect x="864.00" y="551.50" width="3.00" height="16.70" fill="#181ad3"/>
<rect x="867.00" y="551.50" width="1.00" height="16.70" fill="#1616c9"/>
<rect x="870.00" y="551.50" width="3.00" height="16.70" fill="#1515c4"/>
<rect x="873.00" y="551.50" width="1.00" height="16.70" fill="#1828e7"/>
<rect x="875.00" y="551.50" width="1.00" height="16.70" fill="#0a0a8b"/>
<rect x="880.00" y="551.50" width="1.00" height="16.70" fill="#1821dd"/>
<rect x="882.00" y="551.50" width="1.00" height="16.70" fill="#181ed9"/>
<rect x="887.00" y="551.50" width="1.00" height="16.70" fill="#080854"/>
<rect x="889.00" y="551.50" width="3.00" height="16.70" fill="#09097d"/>
<rect x="898.00" y="551.50" width="3.00" height="16.70" fill="#1819d1"/>
<rect x="908.00" y="551.50" width="3.00" height="16.70" fill="#1414bc"/>
<rect x="911.00" y="551.50" width="2.00" height="16.70" fill="#1414bf"/>
<rect x="919.00" y="551.50" width="1.00" height="16.70" fill="#1212b2"/>
<rect x="925.00" y="551.50" width="1.00" height="16.70" fill="#1111b1"/>
<rect x="935.00" y="551.50" width="2.00" height="16.70" fill="#1313ba"/>
<rect x="941.00" y="551.50" width="1.00" height="16.70" fill="#1822df"/>
<rect x="947.00" y="551.50" width="1.00" height="16.70" fill="#09096d"/>
<rect x="954.00" y="551.50" width="3.00" height="16.70" fill="#1616c7"/>
<rect x="963.00" y="551.50" width="1.00" height="16.70" fill="#08085c"/>
<rect x="965.00" y="551.50" width="3.00" height="16.70" fill="#181dd7"/>
<rect x="968.00" y="551.50" width="1.00" height="16.70" fill="#182bec"/>
<rect x="973.00" y="551.50" width="2.00" height="16.70" fill="#090977"/>
<rect x="976.00" y="551.50" width="3.00" height="16.70" fill="#1414bb"/>
<rect x="983.00" y="551.50" width="1.00" height="16.70" fill="#1717cd"/>
<rect x="988.00" y="551.50" width="3.00" height="16.70" fill="#182aea"/>
<rect x="995.00" y="551.50" width="1.00" height="16.70" fill="#1313b9"/>
<rect x="997.00" y="551.50" width="3.00" height="16.70" fill="#1414bc"/>
<rect x="1003.00" y="551.50" width="3.00" height="16.70" fill="#181bd4"/>
<rect x="1006.00" y="551.50" width="1.00" height="16.70" fill="#090960"/>
<rect x="1011.00" y="551.50" width="1.00" height="16.70" fill="#181cd6"/>
<rect x="1013.00" y="551.50" width="1.00" height="16.70" fill="#181ad3"/>
<rect x="1015.00" y="551.50" width="1.00" height="16.70" fill="#182bec"/>
<rect x="1022.00" y="551.50" width="3.00" height="16.70" fill="#1515c3"/>
<rect x="1025.00" y="551.50" width="3.00" height="16.70" fill="#1822df"/>
<rect x="1031.00" y="551.50" width="2.00" height="16.70" fill="#080858"/>
<rect x="1035.00" y="551.50" width="3.00" height="16.70" fill="#1829e9"/>
<rect x="1046.00" y="551.50" width="1.00" height="16.70" fill="#1313b7"/>
<rect x="1049.00" y="551.50" width="1.00" height="16.70" fill="#1111ae"/>
<rect x="1052.00" y="551.50" width="1.00" height="16.70" fill="#182bec"/>
<rect x="1054.00" y="551.50" width="2.00" height="16.70" fill="#1515c2"/>
<rect x="1059.00" y="551.50" width="1.00" height="16.70" fill="#090976"/>
<rect x="1062.00" y="551.50" width="1.00" height="16.70" fill="#1818ce"/>
<rect x="1068.00" y="551.50" width="3.00" height="16.70" fill="#1825e4"/>
<rect x="1072.00" y="551.50" width="3.00" height="16.70" fill="#0a0a8e"/>
<rect x="1075.00" y="551.50" width="1.00" height="16.70" fill="#1616c8"/>
<rect x="96.00" y="568.20" width="3.00" height="12.00" fill="#0a0a8e"/>
<rect x="100.00" y="568.20" width="3.00" height="12.00" fill="#1826e4"/>
<rect x="103.00" y="568.20" width="1.00" height="12.00" fill="#1824e2"/>
<rect x="105.00" y="568.20" width="3.00" height="12.00" fill="#1717cb"/>
<rect x="113.00" y="568.20" width="1.00" height="12.00" fill="#181ed8"/>
<rect x="118.00" y="568.20" width="3.00" height="12.00" fill="#181ad4"/>
<rect x="121.00" y="568.20" width="3.00" height="12.00" fill="#182beb"/>
<rect x="128.00" y="568.20" width="3.00" height="12.00" fill="#090966"/>
<rect x="132.00" y="568.20" width="2.00" height="12.00" fill="#1717ce"/>
<rect x="140.00" y="568.20" width="1.00" height="12.00" fill="#0a0a82"/>
<rect x="144.00" y="568.20" width="2.00" height="12.00" fill="#1824e2"/>
<rect x="148.00" y="568.20" width="3.00" height="12.00" fill="#1837fe"/>
<rect x="151.00" y="568.20" width="3.00" height="12.00" fill="#1835fb"/>
<rect x="156.00" y="568.20" width="1.00" height="12.00" fill="#181fda"/>
<rect x="159.00" y="568.20" width="1.00" height="12.00" fill="#182ff2"/>
<rect x="164.00" y="568.20" width="3.00" height="12.00" fill="#1826e4"/>
<rect x="167.00" y="568.20" width="1.00" height="12.00" fill="#1821de"/>
<rect x="170.00" y="568.20" width="2.00" height="12.00" fill="#1823e0"/>
<rect x="174.00" y="568.20" width="2.00" height="12.00" fill="#1833f7"/>
<rect x="177.00" y="568.20" width="1.00" height="12.00" fill="#1830f4"/>
<rect x="179.00" y="568.20" width="2.00" height="12.00" fill="#1835fb"/>
<rect x="187.00" y="568.20" width="3.00" height="12.00" fill="#181bd4"/>
<rect x="190.00" y="568.20" width="2.00" height="12.00" fill="#1829e9"/>
<rect x="196.00" y="568.20" width="3.00" height="12.00" fill="#1829e9"/>
<rect x="200.00" y="568.20" width="3.00" height="12.00" fill="#181ad3"/>
<rect x="203.00" y="568.20" width="1.00" height="12.00" fill="#1824e2"/>
<rect x="208.00" y="568.20" width="1.00" height="12.00" fill="#1830f3"/>
<rect x="212.00" y="568.20" width="3.00" height="12.00" fill="#181bd5"/>
<rect x="215.00" y="568.20" width="2.00" height="12.00" fill="#181bd4"/>
<rect x="220.00" y="568.20" width="2.00" height="12.00" fill="#1821de"/>
<rect x="230.00" y="568.20" width="1.00" height="12.00" fill="#1820dc"/>
<rect x="238.00" y="568.20" width="1.00" height="12.00" fill="#1832f7"/>
<rect x="240.00" y="568.20" width="1.00" height="12.00" fill="#1821de"/>
<rect x="244.00" y="568.20" width="1.00" height="12.00" fill="#0a0a84"/>
<rect x="247.00" y="568.20" width="1.00" height="12.00" fill="#181bd4"/>
<rect x="251.00" y="568.20" width="1.00" height="12.00" fill="#1717ca"/>
<rect x="254.00" y="568.20" width="1.00" height="12.00" fill="#0a0a91"/>
<rect x="256.00" y="568.20" width="1.00" height="12.00" fill="#1820dc"/>
<rect x="261.00" y="568.20" width="1.00" height="12.00" fill="#1825e3"/>
<rect x="277.00" y="568.20" width="2.00" height="12.00" fill="#0a0a8c"/>
<rect x="281.00" y="568.20" width="1.00" height="12.00" fill="#181bd4"/>
<rect x="285.00" y="568.20" width="3.00" height="12.00" fill="#182def"/>
<rect x="288.00" y="568.20" width="1.00" height="12.00" fill="#1834f9"/>
<rect x="291.00" y="568.20" width="3.00" height="12.00" fill="#181ad3"/>
<rect x="294.00" y="568.20" width="1.00" height="12.00" fill="#1823e0"/>
<rect x="297.00" y="568.20" width="3.00" height="12.00" fill="#182ef0"/>
<rect x="300.00" y="568.20" width="1.00" height="12.00" fill="#1838ff"/>
<rect x="309.00" y="568.20" width="1.00" height="12.00" fill="#090969"/>
<rect x="313.00" y="568.20" width="1.00" height="12.00" fill="#182ff2"/>
<rect x="316.00" y="568.20" width="2.00" height="12.00" fill="#181ed9"/>
<rect x="320.00" y="568.20" width="1.00" height="12.00" fill="#1822df"/>
<rect x="322.00" y="568.20" width="1.00" height="12.00" fill="#1831f5"/>
<rect x="325.00" y="568.20" width="3.00" height="12.00" fill="#1826e5"/>
<rect x="328.00" y="568.20" width="1.00" height="12.00" fill="#182ff1"/>
<rect x="333.00" y="568.20" width="1.00" height="12.00" fill="#0a0a8a"/>
<rect x="339.00" y="568.20" width="1.00" height="12.00" fill="#1832f6"/>
<rect x="346.00" y="568.20" width="3.00" height="12.00" fill="#1831f5"/>
<rect x="349.00" y="568.20" width="1.00" height="12.00" fill="#173bff"/>
<rect x="355.00" y="568.20" width="1.00" height="12.00" fill="#0f0fa7"/>
<rect x="362.00" y="568.20" width="3.00" height="12.00" fill="#1824e2"/>
<rect x="365.00" y="568.20" width="3.00" height="12.00" fill="#1831f4"/>
<rect x="376.00" y="568.20" width="1.00" height="12.00" fill="#173cff"/>
<rect x="381.00" y="568.20" width="1.00" height="12.00" fill="#182ef1"/>
<rect x="383.00" y="568.20" width="3.00" height="12.00" fill="#1818d1"/>
<rect x="388.00" y="568.20" width="2.00" height="12.00" fill="#1827e5"/>
<rect x="391.00" y="568.20" width="3.00" height="12.00" fill="#1825e3"/>
<rect x="394.00" y="568.20" width="1.00" height="12.00" fill="#181fda"/>
<rect x="401.00" y="568.20" width="3.00" height="12.00" fill="#181bd5"/>
<rect x="404.00" y="568.20" width="1.00" height="12.00" fill="#181ed9"/>
<rect x="414.00" y="568.20" width="3.00" height="12.00" fill="#182aeb"/>
<rect x="423.00" y="568.20" width="1.00" height="12.00" fill="#1834f9"/>
<rect x="426.00" y="568.20" width="1.00" height="12.00" fill="#1819d1"/>
<rect x="429.00" y="568.20" width="3.00" height="12.00" fill="#1827e6"/>
<rect x="435.00" y="568.20" width="2.00" height="12.00" fill="#1717ca"/>
<rect x="438.00" y="568.20" width="1.00" height="12.00" fill="#173aff"/>
<rect x="442.00" y="568.20" width="1.00" height="12.00" fill="#1822df"/>
<rect x="444.00" y="568.20" width="2.00" height="12.00" fill="#181bd5"/>
<rect x="447.00" y="568.20" width="1.00" height="12.00" fill="#1819d1"/>
<rect x="452.00" y="568.20" width="1.00" height="12.00" fill="#181fda"/>
<rect x="458.00" y="568.20" width="1.00" height="12.00" fill="#1833f7"/>
<rect x="465.00" y="568.20" width="1.00" height="12.00" fill="#1717cc"/>
<rect x="468.00" y="568.20" width="1.00" height="12.00" fill="#1829e9"/>
<rect x="477.00" y="568.20" width="1.00" height="12.00" fill="#181ed9"/>
<rect x="483.00" y="568.20" width="1.00" height="12.00" fill="#09097e"/>
<rect x="493.00" y="568.20" width="1.00" height="12.00" fill="#1821dc"/>
<rect x="497.00" y="568.20" width="1.00" height="12.00" fill="#181cd6"/>
<rect x="499.00" y="568.20" width="1.00" height="12.00" fill="#1822df"/>
<rect x="502.00" y="568.20" width="2.00" height="12.00" fill="#1834f9"/>
<rect x="507.00" y="568.20" width="3.00" height="12.00" fill="#1833f7"/>
<rect x="517.00" y="568.20" width="2.00" height="12.00" fill="#090972"/>
<rect x="522.00" y="568.20" width="3.00" height="12.00" fill="#0a0a84"/>
<rect x="526.00" y="568.20" width="1.00" height="12.00" fill="#1826e5"/>
<rect x="528.00" y="568.20" width="3.00" height="12.00" fill="#181ed8"/>
<rect x="531.00" y="568.20" width="1.00" height="12.00" fill="#1831f5"/>
<rect x="535.00" y="568.20" width="3.00" height="12.00" fill="#1839ff"/>
<rect x="540.00" y="568.20" width="1.00" height="12.00" fill="#181ed9"/>
<rect x="553.00" y="568.20" width="1.00" height="12.00" fill="#0d0d9f"/>
<rect x="556.00" y="568.20" width="1.00" height="12.00" fill="#181ad3"/>
<rect x="558.00" y="568.20" width="3.00" height="12.00" fill="#1010aa"/>
<rect x="561.00" y="568.20" width="1.00" height="12.00" fill="#182aea"/>
<rect x="567.00" y="568.20" width="1.00" height="12.00" fill="#1818d0"/>
<rect x="570.00" y="568.20" width="2.00" height="12.00" fill="#09096e"/>
<rect x="578.00" y="568.20" width="2.00" height="12.00" fill="#1819d2"/>
<rect x="587.00" y="568.20" width="3.00" height="12.00" fill="#1825e3"/>
<rect x="590.00" y="568.20" width="3.00" height="12.00" fill="#1717cc"/>
<rect x="593.00" y="568.20" width="1.00" height="12.00" fill="#181ed9"/>
<rect x="607.00" y="568.20" width="1.00" height="12.00" fill="#1829e9"/>
<rect x="619.00" y="568.20" width="2.00" height="12.00" fill="#173bff"/>
<rect x="626.00" y="568.20" width="3.00" height="12.00" fill="#1826e5"/>
<rect x="633.00" y="568.20" width="1.00" height="12.00" fill="#173bff"/>
<rect x="635.00" y="568.20" width="1.00" height="12.00" fill="#1833f8"/>
<rect x="637.00" y="568.20" width="2.00" height="12.00" fill="#1826e5"/>
<rect x="642.00" y="568.20" width="1.00" height="12.00" fill="#1832f6"/>
<rect x="644.00" y="568.20" width="2.00" height="12.00" fill="#1829ea"/>
<rect x="648.00" y="568.20" width="2.00" height="12.00" fill="#1821de"/>
<rect x="660.00" y="568.20" width="2.00" height="12.00" fill="#1834f9"/>
<rect x="671.00" y="568.20" width="3.00" height="12.00" fill="#1825e3"/>
<rect x="677.00" y="568.20" width="3.00" height="12.00" fill="#1838ff"/>
<rect x="680.00" y="568.20" width="1.00" height="12.00" fill="#1010ab"/>
<rect x="686.00" y="568.20" width="1.00" height="12.00" fill="#173bff"/>
<rect x="688.00" y="568.20" width="2.00" height="12.00" fill="#1825e3"/>
<rect x="696.00" y="568.20" width="1.00" height="12.00" fill="#182aeb"/>
<rect x="698.00" y="568.20" width="1.00" height="12.00" fill="#181ad3"/>
<rect x="707.00" y="568.20" width="2.00" height="12.00" fill="#182ef0"/>
<rect x="710.00" y="568.20" width="3.00" height="12.00" fill="#181ed9"/>
<rect x="715.00" y="568.20" width="2.00" height="12.00" fill="#181ad2"/>
<rect x="723.00" y="568.20" width="1.00" height="12.00" fill="#1820db"/>
<rect x="726.00" y="568.20" width="3.00" height="12.00" fill="#182ff2"/>
<rect x="729.00" y="568.20" width="2.00" height="12.00" fill="#173bff"/>
<rect x="732.00" y="568.20" width="1.00" height="12.00" fill="#090978"/>
<rect x="742.00" y="568.20" width="2.00" height="12.00" fill="#181dd7"/>
<rect x="754.00" y="568.20" width="1.00" height="12.00" fill="#182ef1"/>
<rect x="756.00" y="568.20" width="2.00" height="12.00" fill="#182ef0"/>
<rect x="759.00" y="568.20" width="3.00" height="12.00" fill="#181ed8"/>
<rect x="763.00" y="568.20" width="1.00" height="12.00" fill="#1818d0"/>
<rect x="766.00" y="568.20" width="1.00" height="12.00" fill="#182ced"/>
<rect x="770.00" y="568.20" width="3.00" height="12.00" fill="#0d0d9c"/>
<rect x="773.00" y="568.20" width="3.00" height="12.00" fill="#182aea"/>
<rect x="780.00" y="568.20" width="3.00" height="12.00" fill="#1827e6"/>
<rect x="790.00" y="568.20" width="1.00" height="12.00" fill="#1834f9"/>
<rect x="792.00" y="568.20" width="1.00" height="12.00" fill="#1821de"/>
<rect x="801.00" y="568.20" width="1.00" height="12.00" fill="#1819d2"/>
<rect x="805.00" y="568.20" width="2.00" height="12.00" fill="#182bec"/>
<rect x="819.00" y="568.20" width="2.00" height="12.00" fill="#090974"/>
<rect x="822.00" y="568.20" width="1.00" height="12.00" fill="#182aeb"/>
<rect x="824.00" y="568.20" width="3.00" height="12.00" fill="#0b0b95"/>
<rect x="835.00" y="568.20" width="1.00" height="12.00" fill="#182ced"/>
<rect x="841.00" y="568.20" width="1.00" height="12.00" fill="#1834fa"/>
<rect x="845.00" y="568.20" width="1.00" height="12.00" fill="#181fda"/>
<rect x="849.00" y="568.20" width="3.00" height="12.00" fill="#1717cb"/>
<rect x="856.00" y="568.20" width="2.00" height="12.00" fill="#1827e6"/>
<rect x="859.00" y="568.20" width="1.00" height="12.00" fill="#182bec"/>
<rect x="861.00" y="568.20" width="1.00" height="12.00" fill="#1834f9"/>
<rect x="863.00" y="568.20" width="2.00" height="12.00" fill="#182ced"/>
<rect x="872.00" y="568.20" width="1.00" height="12.00" fill="#181ad3"/>
<rect x="878.00" y="568.20" width="3.00" height="12.00" fill="#1824e2"/>
<rect x="882.00" y="568.20" width="1.00" height="12.00" fill="#181bd5"/>
<rect x="887.00" y="568.20" width="3.00" height="12.00" fill="#182def"/>
<rect x="890.00" y="568.20" width="2.00" height="12.00" fill="#1831f5"/>
<rect x="900.00" y="568.20" width="1.00" height="12.00" fill="#182beb"/>
<rect x="902.00" y="568.20" width="1.00" height="12.00" fill="#181fda"/>
<rect x="908.00" y="568.20" width="2.00" height="12.00" fill="#182aeb"/>
<rect x="912.00" y="568.20" width="1.00" height="12.00" fill="#1819d1"/>
<rect x="914.00" y="568.20" width="1.00" height="12.00" fill="#181dd8"/>
<rect x="922.00" y="568.20" width="1.00" height="12.00" fill="#1010ac"/>
<rect x="925.00" y="568.20" width="1.00" height="12.00" fill="#1826e5"/>
<rect x="927.00" y="568.20" width="1.00" height="12.00" fill="#181dd8"/>
<rect x="931.00" y="568.20" width="3.00" height="12.00" fill="#0a0a86"/>
<rect x="934.00" y="568.20" width="3.00" height="12.00" fill="#1824e2"/>
<rect x="941.00" y="568.20" width="2.00" height="12.00" fill="#1833f8"/>
<rect x="954.00" y="568.20" width="3.00" height="12.00" fill="#181dd7"/>
<rect x="958.00" y="568.20" width="1.00" height="12.00" fill="#182cee"/>
<rect x="967.00" y="568.20" width="3.00" height="12.00" fill="#0e0ea0"/>
<rect x="973.00" y="568.20" width="2.00" height="12.00" fill="#1820dc"/>
<rect x="976.00" y="568.20" width="1.00" height="12.00" fill="#0f0fa6"/>
<rect x="983.00" y="568.20" width="1.00" height="12.00" fill="#1819d1"/>
<rect x="989.00" y="568.20" width="1.00" height="12.00" fill="#0c0c99"/>
<rect x="991.00" y="568.20" width="1.00" height="12.00" fill="#090970"/>
<rect x="997.00" y="568.20" width="1.00" height="12.00" fill="#1822df"/>
<rect x="999.00" y="568.20" width="1.00" height="12.00" fill="#182ef1"/>
<rect x="1001.00" y="568.20" width="3.00" height="12.00" fill="#0f0fa8"/>
<rect x="1004.00" y="568.20" width="3.00" height="12.00" fill="#181ed9"/>
<rect x="1012.00" y="568.20" width="2.00" height="12.00" fill="#1836fb"/>
<rect x="1015.00" y="568.20" width="1.00" height="12.00" fill="#182bec"/>
<rect x="1019.00" y="568.20" width="3.00" height="12.00" fill="#090969"/>
<rect x="1022.00" y="568.20" width="2.00" height="12.00" fill="#173aff"/>
<rect x="1025.00" y="568.20" width="3.00" height="12.00" fill="#1836fd"/>
<rect x="1031.00" y="568.20" width="2.00" height="12.00" fill="#181ad3"/>
<rect x="1036.00" y="568.20" width="3.00" height="12.00" fill="#182def"/>
<rect x="1039.00" y="568.20" width="1.00" height="12.00" fill="#1825e4"/>
<rect x="1052.00" y="568.20" width="1.00" height="12.00" fill="#181cd6"/>
<rect x="1057.00" y="568.20" width="2.00" height="12.00" fill="#0e0ea3"/>
<rect x="1062.00" y="568.20" width="1.00" height="12.00" fill="#1827e6"/>
<rect x="1066.00" y="568.20" width="3.00" height="12.00" fill="#1010ac"/>
<rect x="1069.00" y="568.20" width="1.00" height="12.00" fill="#1818ce"/>
<rect x="1071.00" y="568.20" width="3.00" height="12.00" fill="#090966"/>
<rect x="1075.00" y="568.20" width="1.00" height="12.00" fill="#182cee"/>
<rect x="96.00" y="580.20" width="3.00" height="4.00" fill="#163dff"/>
<rect x="100.00" y="580.20" width="3.00" height="4.00" fill="#0a0a8d"/>
<rect x="103.00" y="580.20" width="3.00" height="4.00" fill="#0e0ea2"/>
<rect x="106.00" y="580.20" width="2.00" height="4.00" fill="#163fff"/>
<rect x="119.00" y="580.20" width="2.00" height="4.00" fill="#1827e6"/>
<rect x="129.00" y="580.20" width="1.00" height="4.00" fill="#1010ac"/>
<rect x="134.00" y="580.20" width="3.00" height="4.00" fill="#1541ff"/>
<rect x="143.00" y="580.20" width="3.00" height="4.00" fill="#114cff"/>
<rect x="147.00" y="580.20" width="3.00" height="4.00" fill="#1829ea"/>
<rect x="152.00" y="580.20" width="3.00" height="4.00" fill="#173bff"/>
<rect x="155.00" y="580.20" width="2.00" height="4.00" fill="#1826e5"/>
<rect x="158.00" y="580.20" width="2.00" height="4.00" fill="#1834f9"/>
<rect x="163.00" y="580.20" width="3.00" height="4.00" fill="#1836fb"/>
<rect x="166.00" y="580.20" width="2.00" height="4.00" fill="#1739ff"/>
<rect x="170.00" y="580.20" width="3.00" height="4.00" fill="#182ff2"/>
<rect x="174.00" y="580.20" width="3.00" height="4.00" fill="#114cff"/>
<rect x="177.00" y="580.20" width="1.00" height="4.00" fill="#1822df"/>
<rect x="187.00" y="580.20" width="3.00" height="4.00" fill="#1839ff"/>
<rect x="190.00" y="580.20" width="2.00" height="4.00" fill="#1823e0"/>
<rect x="195.00" y="580.20" width="2.00" height="4.00" fill="#1542ff"/>
<rect x="198.00" y="580.20" width="2.00" height="4.00" fill="#1837fe"/>
<rect x="202.00" y="580.20" width="2.00" height="4.00" fill="#0a0a83"/>
<rect x="205.00" y="580.20" width="1.00" height="4.00" fill="#1010ad"/>
<rect x="207.00" y="580.20" width="2.00" height="4.00" fill="#1838ff"/>
<rect x="212.00" y="580.20" width="3.00" height="4.00" fill="#153fff"/>
<rect x="215.00" y="580.20" width="2.00" height="4.00" fill="#1830f4"/>
<rect x="221.00" y="580.20" width="1.00" height="4.00" fill="#173bff"/>
<rect x="226.00" y="580.20" width="1.00" height="4.00" fill="#1828e7"/>
<rect x="228.00" y="580.20" width="2.00" height="4.00" fill="#182bec"/>
<rect x="234.00" y="580.20" width="2.00" height="4.00" fill="#182ff1"/>
<rect x="238.00" y="580.20" width="2.00" height="4.00" fill="#1442ff"/>
<rect x="244.00" y="580.20" width="1.00" height="4.00" fill="#173bff"/>
<rect x="251.00" y="580.20" width="3.00" height="4.00" fill="#1827e6"/>
<rect x="254.00" y="580.20" width="1.00" height="4.00" fill="#1834f9"/>
<rect x="260.00" y="580.20" width="1.00" height="4.00" fill="#1347ff"/>
<rect x="277.00" y="580.20" width="3.00" height="4.00" fill="#1832f6"/>
<rect x="280.00" y="580.20" width="1.00" height="4.00" fill="#1834f9"/>
<rect x="282.00" y="580.20" width="1.00" height="4.00" fill="#1824e2"/>
<rect x="287.00" y="580.20" width="2.00" height="4.00" fill="#1823e0"/>
<rect x="292.00" y="580.20" width="3.00" height="4.00" fill="#1347ff"/>
<rect x="298.00" y="580.20" width="2.00" height="4.00" fill="#1831f5"/>
<rect x="316.00" y="580.20" width="1.00" height="4.00" fill="#1826e5"/>
<rect x="319.00" y="580.20" width="2.00" height="4.00" fill="#1837fe"/>
<rect x="322.00" y="580.20" width="1.00" height="4.00" fill="#182ced"/>
<rect x="325.00" y="580.20" width="3.00" height="4.00" fill="#1542ff"/>
<rect x="328.00" y="580.20" width="3.00" height="4.00" fill="#114bff"/>
<rect x="331.00" y="580.20" width="3.00" height="4.00" fill="#163eff"/>
<rect x="346.00" y="580.20" width="1.00" height="4.00" fill="#1249ff"/>
<rect x="349.00" y="580.20" width="1.00" height="4.00" fill="#1839ff"/>
<rect x="353.00" y="580.20" width="2.00" height="4.00" fill="#1823e0"/>
<rect x="362.00" y="580.20" width="1.00" height="4.00" fill="#1838ff"/>
<rect x="365.00" y="580.20" width="1.00" height="4.00" fill="#1827e7"/>
<rect x="374.00" y="580.20" width="3.00" height="4.00" fill="#1313b8"/>
<rect x="378.00" y="580.20" width="1.00" height="4.00" fill="#124aff"/>
<rect x="381.00" y="580.20" width="1.00" height="4.00" fill="#173bff"/>
<rect x="383.00" y="580.20" width="1.00" height="4.00" fill="#1833f8"/>
<rect x="388.00" y="580.20" width="3.00" height="4.00" fill="#0a0a84"/>
<rect x="398.00" y="580.20" width="1.00" height="4.00" fill="#1835fa"/>
<rect x="409.00" y="580.20" width="1.00" height="4.00" fill="#1249ff"/>
<rect x="414.00" y="580.20" width="1.00" height="4.00" fill="#1515c4"/>
<rect x="416.00" y="580.20" width="2.00" height="4.00" fill="#1346ff"/>
<rect x="432.00" y="580.20" width="2.00" height="4.00" fill="#1822df"/>
<rect x="438.00" y="580.20" width="1.00" height="4.00" fill="#1515c2"/>
<rect x="442.00" y="580.20" width="1.00" height="4.00" fill="#1212b3"/>
<rect x="444.00" y="580.20" width="2.00" height="4.00" fill="#1831f5"/>
<rect x="449.00" y="580.20" width="1.00" height="4.00" fill="#1347ff"/>
<rect x="462.00" y="580.20" width="2.00" height="4.00" fill="#1833f7"/>
<rect x="467.00" y="580.20" width="1.00" height="4.00" fill="#182dee"/>
<rect x="469.00" y="580.20" width="1.00" height="4.00" fill="#1834f8"/>
<rect x="471.00" y="580.20" width="1.00" height="4.00" fill="#182def"/>
<rect x="481.00" y="580.20" width="3.00" height="4.00" fill="#1515c4"/>
<rect x="498.00" y="580.20" width="2.00" height="4.00" fill="#1348ff"/>
<rect x="502.00" y="580.20" width="2.00" height="4.00" fill="#1248ff"/>
<rect x="520.00" y="580.20" width="3.00" height="4.00" fill="#1830f3"/>
<rect x="524.00" y="580.20" width="3.00" height="4.00" fill="#163fff"/>
<rect x="528.00" y="580.20" width="1.00" height="4.00" fill="#1833f8"/>
<rect x="530.00" y="580.20" width="2.00" height="4.00" fill="#1540ff"/>
<rect x="534.00" y="580.20" width="1.00" height="4.00" fill="#1249ff"/>
<rect x="537.00" y="580.20" width="1.00" height="4.00" fill="#1823e0"/>
<rect x="540.00" y="580.20" width="3.00" height="4.00" fill="#0e0ea0"/>
<rect x="545.00" y="580.20" width="1.00" height="4.00" fill="#1827e6"/>
<rect x="551.00" y="580.20" width="1.00" height="4.00" fill="#1827e6"/>
<rect x="553.00" y="580.20" width="1.00" height="4.00" fill="#114cff"/>
<rect x="561.00" y="580.20" width="2.00" height="4.00" fill="#182def"/>
<rect x="565.00" y="580.20" width="1.00" height="4.00" fill="#182aeb"/>
<rect x="567.00" y="580.20" width="2.00" height="4.00" fill="#1832f6"/>
<rect x="572.00" y="580.20" width="1.00" height="4.00" fill="#0f0fa7"/>
<rect x="578.00" y="580.20" width="2.00" height="4.00" fill="#114bff"/>
<rect x="581.00" y="580.20" width="2.00" height="4.00" fill="#0a0a8a"/>
<rect x="589.00" y="580.20" width="3.00" height="4.00" fill="#1542ff"/>
<rect x="592.00" y="580.20" width="3.00" height="4.00" fill="#1248ff"/>
<rect x="602.00" y="580.20" width="1.00" height="4.00" fill="#182ef1"/>
<rect x="605.00" y="580.20" width="1.00" height="4.00" fill="#1828e7"/>
<rect x="607.00" y="580.20" width="2.00" height="4.00" fill="#182beb"/>
<rect x="610.00" y="580.20" width="3.00" height="4.00" fill="#1833f8"/>
<rect x="614.00" y="580.20" width="1.00" height="4.00" fill="#182ef0"/>
<rect x="617.00" y="580.20" width="3.00" height="4.00" fill="#182ced"/>
<rect x="628.00" y="580.20" width="3.00" height="4.00" fill="#1347ff"/>
<rect x="637.00" y="580.20" width="1.00" height="4.00" fill="#1345ff"/>
<rect x="639.00" y="580.20" width="1.00" height="4.00" fill="#1248ff"/>
<rect x="642.00" y="580.20" width="1.00" height="4.00" fill="#1442ff"/>
<rect x="645.00" y="580.20" width="1.00" height="4.00" fill="#1826e5"/>
<rect x="656.00" y="580.20" width="3.00" height="4.00" fill="#1249ff"/>
<rect x="669.00" y="580.20" width="2.00" height="4.00" fill="#1825e3"/>
<rect x="672.00" y="580.20" width="2.00" height="4.00" fill="#1837fe"/>
<rect x="675.00" y="580.20" width="2.00" height="4.00" fill="#1839ff"/>
<rect x="678.00" y="580.20" width="3.00" height="4.00" fill="#114cff"/>
<rect x="686.00" y="580.20" width="1.00" height="4.00" fill="#182dee"/>
<rect x="688.00" y="580.20" width="1.00" height="4.00" fill="#1827e6"/>
<rect x="696.00" y="580.20" width="3.00" height="4.00" fill="#1835fa"/>
<rect x="704.00" y="580.20" width="1.00" height="4.00" fill="#1826e4"/>
<rect x="708.00" y="580.20" width="1.00" height="4.00" fill="#1345ff"/>
<rect x="710.00" y="580.20" width="3.00" height="4.00" fill="#1249ff"/>
<rect x="723.00" y="580.20" width="1.00" height="4.00" fill="#1111b1"/>
<rect x="726.00" y="580.20" width="3.00" height="4.00" fill="#1826e5"/>
<rect x="729.00" y="580.20" width="1.00" height="4.00" fill="#1825e3"/>
<rect x="732.00" y="580.20" width="1.00" height="4.00" fill="#182bec"/>
<rect x="740.00" y="580.20" width="1.00" height="4.00" fill="#1010aa"/>
<rect x="745.00" y="580.20" width="1.00" height="4.00" fill="#1839ff"/>
<rect x="754.00" y="580.20" width="1.00" height="4.00" fill="#1833f7"/>
<rect x="756.00" y="580.20" width="1.00" height="4.00" fill="#1822df"/>
<rect x="761.00" y="580.20" width="3.00" height="4.00" fill="#1010ae"/>
<rect x="766.00" y="580.20" width="1.00" height="4.00" fill="#1833f8"/>
<rect x="771.00" y="580.20" width="3.00" height="4.00" fill="#1825e3"/>
<rect x="774.00" y="580.20" width="2.00" height="4.00" fill="#163dff"/>
<rect x="779.00" y="580.20" width="1.00" height="4.00" fill="#173bff"/>
<rect x="781.00" y="580.20" width="2.00" height="4.00" fill="#1541ff"/>
<rect x="784.00" y="580.20" width="1.00" height="4.00" fill="#1616c7"/>
<rect x="792.00" y="580.20" width="2.00" height="4.00" fill="#1313b7"/>
<rect x="795.00" y="580.20" width="1.00" height="4.00" fill="#182aeb"/>
<rect x="800.00" y="580.20" width="3.00" height="4.00" fill="#1826e4"/>
<rect x="803.00" y="580.20" width="1.00" height="4.00" fill="#1836fd"/>
<rect x="805.00" y="580.20" width="3.00" height="4.00" fill="#1540ff"/>
<rect x="808.00" y="580.20" width="1.00" height="4.00" fill="#1313b7"/>
<rect x="811.00" y="580.20" width="1.00" height="4.00" fill="#114bff"/>
<rect x="819.00" y="580.20" width="2.00" height="4.00" fill="#182bec"/>
<rect x="822.00" y="580.20" width="2.00" height="4.00" fill="#173bff"/>
<rect x="835.00" y="580.20" width="1.00" height="4.00" fill="#163eff"/>
<rect x="837.00" y="580.20" width="1.00" height="4.00" fill="#1347ff"/>
<rect x="845.00" y="580.20" width="1.00" height="4.00" fill="#1348ff"/>
<rect x="850.00" y="580.20" width="2.00" height="4.00" fill="#1835fb"/>
<rect x="856.00" y="580.20" width="2.00" height="4.00" fill="#182ef0"/>
<rect x="860.00" y="580.20" width="3.00" height="4.00" fill="#1831f5"/>
<rect x="863.00" y="580.20" width="1.00" height="4.00" fill="#1111ae"/>
<rect x="866.00" y="580.20" width="1.00" height="4.00" fill="#0a0a81"/>
<rect x="868.00" y="580.20" width="3.00" height="4.00" fill="#1838fe"/>
<rect x="873.00" y="580.20" width="2.00" height="4.00" fill="#114bff"/>
<rect x="878.00" y="580.20" width="1.00" height="4.00" fill="#1414bc"/>
<rect x="880.00" y="580.20" width="1.00" height="4.00" fill="#182cee"/>
<rect x="882.00" y="580.20" width="1.00" height="4.00" fill="#1540ff"/>
<rect x="886.00" y="580.20" width="1.00" height="4.00" fill="#1834fa"/>
<rect x="889.00" y="580.20" width="3.00" height="4.00" fill="#173cff"/>
<rect x="902.00" y="580.20" width="1.00" height="4.00" fill="#173cff"/>
<rect x="908.00" y="580.20" width="3.00" height="4.00" fill="#1313bb"/>
<rect x="914.00" y="580.20" width="1.00" height="4.00" fill="#1542ff"/>
<rect x="918.00" y="580.20" width="2.00" height="4.00" fill="#1835fa"/>
<rect x="921.00" y="580.20" width="2.00" height="4.00" fill="#182dee"/>
<rect x="925.00" y="580.20" width="1.00" height="4.00" fill="#1616c6"/>
<rect x="931.00" y="580.20" width="3.00" height="4.00" fill="#1828e7"/>
<rect x="934.00" y="580.20" width="1.00" height="4.00" fill="#1346ff"/>
<rect x="936.00" y="580.20" width="1.00" height="4.00" fill="#1313b7"/>
<rect x="941.00" y="580.20" width="1.00" height="4.00" fill="#1822de"/>
<rect x="947.00" y="580.20" width="1.00" height="4.00" fill="#182ced"/>
<rect x="950.00" y="580.20" width="2.00" height="4.00" fill="#173aff"/>
<rect x="954.00" y="580.20" width="1.00" height="4.00" fill="#1838ff"/>
<rect x="956.00" y="580.20" width="1.00" height="4.00" fill="#173aff"/>
<rect x="958.00" y="580.20" width="1.00" height="4.00" fill="#1833f7"/>
<rect x="963.00" y="580.20" width="1.00" height="4.00" fill="#1837fd"/>
<rect x="966.00" y="580.20" width="3.00" height="4.00" fill="#1346ff"/>
<rect x="973.00" y="580.20" width="1.00" height="4.00" fill="#182ff2"/>
<rect x="976.00" y="580.20" width="2.00" height="4.00" fill="#1833f8"/>
<rect x="983.00" y="580.20" width="2.00" height="4.00" fill="#1824e1"/>
<rect x="991.00" y="580.20" width="2.00" height="4.00" fill="#1832f7"/>
<rect x="997.00" y="580.20" width="1.00" height="4.00" fill="#1345ff"/>
<rect x="1006.00" y="580.20" width="1.00" height="4.00" fill="#1834f9"/>
<rect x="1011.00" y="580.20" width="3.00" height="4.00" fill="#1830f3"/>
<rect x="1015.00" y="580.20" width="1.00" height="4.00" fill="#1831f5"/>
<rect x="1020.00" y="580.20" width="1.00" height="4.00" fill="#1833f8"/>
<rect x="1022.00" y="580.20" width="3.00" height="4.00" fill="#1836fb"/>
<rect x="1025.00" y="580.20" width="3.00" height="4.00" fill="#1347ff"/>
<rect x="1031.00" y="580.20" width="3.00" height="4.00" fill="#1825e4"/>
<rect x="1036.00" y="580.20" width="3.00" height="4.00" fill="#1541ff"/>
<rect x="1039.00" y="580.20" width="1.00" height="4.00" fill="#0d0d9e"/>
<rect x="1044.00" y="580.20" width="2.00" height="4.00" fill="#1834fa"/>
<rect x="1047.00" y="580.20" width="3.00" height="4.00" fill="#1834fa"/>
<rect x="1050.00" y="580.20" width="1.00" height="4.00" fill="#1833f7"/>
<rect x="1058.00" y="580.20" width="3.00" height="4.00" fill="#0a0a88"/>
<rect x="1062.00" y="580.20" width="1.00" height="4.00" fill="#1832f6"/>
<rect x="1066.00" y="580.20" width="3.00" height="4.00" fill="#182bec"/>
<rect x="1069.00" y="580.20" width="1.00" height="4.00" fill="#1346ff"/>
<rect x="1071.00" y="580.20" width="2.00" height="4.00" fill="#1111b1"/>
<rect x="1075.00" y="580.20" width="1.00" height="4.00" fill="#1837fe"/>
<rect x="97.00" y="584.20" width="2.00" height="21.60" fill="#0a66f5"/>
<rect x="100.00" y="584.20" width="3.00" height="21.60" fill="#173aff"/>
<rect x="103.00" y="584.20" width="1.00" height="21.60" fill="#1821dd"/>
<rect x="106.00" y="584.20" width="2.00" height="21.60" fill="#0a75dc"/>
<rect x="113.00" y="584.20" width="1.00" height="21.60" fill="#0a73e1"/>
<rect x="118.00" y="584.20" width="3.00" height="21.60" fill="#0a68f2"/>
<rect x="121.00" y="584.20" width="3.00" height="21.60" fill="#0a62fb"/>
<rect x="128.00" y="584.20" width="2.00" height="21.60" fill="#0a67f3"/>
<rect x="137.00" y="584.20" width="1.00" height="21.60" fill="#0a6bec"/>
<rect x="140.00" y="584.20" width="1.00" height="21.60" fill="#0a67f3"/>
<rect x="144.00" y="584.20" width="2.00" height="21.60" fill="#0e56ff"/>
<rect x="151.00" y="584.20" width="2.00" height="21.60" fill="#0a72e1"/>
<rect x="154.00" y="584.20" width="3.00" height="21.60" fill="#0a74df"/>
<rect x="157.00" y="584.20" width="1.00" height="21.60" fill="#0a67f4"/>
<rect x="161.00" y="584.20" width="2.00" height="21.60" fill="#0e56ff"/>
<rect x="164.00" y="584.20" width="2.00" height="21.60" fill="#0c5bff"/>
<rect x="167.00" y="584.20" width="2.00" height="21.60" fill="#0a64f8"/>
<rect x="170.00" y="584.20" width="3.00" height="21.60" fill="#1834f8"/>
<rect x="173.00" y="584.20" width="3.00" height="21.60" fill="#1831f4"/>
<rect x="176.00" y="584.20" width="1.00" height="21.60" fill="#0a6fe6"/>
<rect x="183.00" y="584.20" width="3.00" height="21.60" fill="#0a6ee8"/>
<rect x="186.00" y="584.20" width="3.00" height="21.60" fill="#0b5eff"/>
<rect x="189.00" y="584.20" width="3.00" height="21.60" fill="#1829e9"/>
<rect x="195.00" y="584.20" width="3.00" height="21.60" fill="#0a6fe7"/>
<rect x="198.00" y="584.20" width="3.00" height="21.60" fill="#0c5bff"/>
<rect x="201.00" y="584.20" width="1.00" height="21.60" fill="#0a70e5"/>
<rect x="203.00" y="584.20" width="1.00" height="21.60" fill="#0a6dea"/>
<rect x="205.00" y="584.20" width="1.00" height="21.60" fill="#0a65f7"/>
<rect x="208.00" y="584.20" width="1.00" height="21.60" fill="#0a65f7"/>
<rect x="212.00" y="584.20" width="1.00" height="21.60" fill="#0a5fff"/>
<rect x="216.00" y="584.20" width="1.00" height="21.60" fill="#0a62fc"/>
<rect x="218.00" y="584.20" width="1.00" height="21.60" fill="#0a6ee9"/>
<rect x="220.00" y="584.20" width="1.00" height="21.60" fill="#0a73e0"/>
<rect x="226.00" y="584.20" width="1.00" height="21.60" fill="#0c5bff"/>
<rect x="228.00" y="584.20" width="3.00" height="21.60" fill="#0e55ff"/>
<rect x="231.00" y="584.20" width="2.00" height="21.60" fill="#0a60ff"/>
<rect x="234.00" y="584.20" width="3.00" height="21.60" fill="#1540ff"/>
<rect x="237.00" y="584.20" width="1.00" height="21.60" fill="#0a6aee"/>
<rect x="244.00" y="584.20" width="1.00" height="21.60" fill="#0a6bee"/>
<rect x="246.00" y="584.20" width="3.00" height="21.60" fill="#0a61fd"/>
<rect x="249.00" y="584.20" width="1.00" height="21.60" fill="#0a74df"/>
<rect x="251.00" y="584.20" width="2.00" height="21.60" fill="#163fff"/>
<rect x="260.00" y="584.20" width="1.00" height="21.60" fill="#0a62fb"/>
<rect x="263.00" y="584.20" width="1.00" height="21.60" fill="#0a62fc"/>
<rect x="268.00" y="584.20" width="1.00" height="21.60" fill="#182ef0"/>
<rect x="277.00" y="584.20" width="3.00" height="21.60" fill="#0c5bff"/>
<rect x="280.00" y="584.20" width="1.00" height="21.60" fill="#1825e3"/>
<rect x="282.00" y="584.20" width="1.00" height="21.60" fill="#0a6dea"/>
<rect x="284.00" y="584.20" width="3.00" height="21.60" fill="#182aea"/>
<rect x="287.00" y="584.20" width="2.00" height="21.60" fill="#1829e9"/>
<rect x="292.00" y="584.20" width="2.00" height="21.60" fill="#0d57ff"/>
<rect x="298.00" y="584.20" width="3.00" height="21.60" fill="#0a6bed"/>
<rect x="305.00" y="584.20" width="1.00" height="21.60" fill="#0a75dd"/>
<rect x="316.00" y="584.20" width="3.00" height="21.60" fill="#0a64f8"/>
<rect x="319.00" y="584.20" width="2.00" height="21.60" fill="#0a73e0"/>
<rect x="325.00" y="584.20" width="3.00" height="21.60" fill="#1827e7"/>
<rect x="346.00" y="584.20" width="3.00" height="21.60" fill="#0a6deb"/>
<rect x="349.00" y="584.20" width="2.00" height="21.60" fill="#0c5aff"/>
<rect x="353.00" y="584.20" width="3.00" height="21.60" fill="#0a6cec"/>
<rect x="365.00" y="584.20" width="1.00" height="21.60" fill="#0c5aff"/>
<rect x="369.00" y="584.20" width="1.00" height="21.60" fill="#0a64f9"/>
<rect x="374.00" y="584.20" width="3.00" height="21.60" fill="#1823e0"/>
<rect x="377.00" y="584.20" width="1.00" height="21.60" fill="#0b5dff"/>
<rect x="381.00" y="584.20" width="1.00" height="21.60" fill="#0a72e1"/>
<rect x="383.00" y="584.20" width="2.00" height="21.60" fill="#0a67f4"/>
<rect x="393.00" y="584.20" width="2.00" height="21.60" fill="#0b5cff"/>
<rect x="397.00" y="584.20" width="2.00" height="21.60" fill="#0a60ff"/>
<rect x="402.00" y="584.20" width="1.00" height="21.60" fill="#0a70e4"/>
<rect x="409.00" y="584.20" width="1.00" height="21.60" fill="#0a6cec"/>
<rect x="414.00" y="584.20" width="2.00" height="21.60" fill="#1828e8"/>
<rect x="419.00" y="584.20" width="2.00" height="21.60" fill="#0d59ff"/>
<rect x="426.00" y="584.20" width="3.00" height="21.60" fill="#1824e2"/>
<rect x="429.00" y="584.20" width="3.00" height="21.60" fill="#0c59ff"/>
<rect x="432.00" y="584.20" width="2.00" height="21.60" fill="#0a75dd"/>
<rect x="444.00" y="584.20" width="2.00" height="21.60" fill="#1830f3"/>
<rect x="447.00" y="584.20" width="1.00" height="21.60" fill="#0a72e1"/>
<rect x="456.00" y="584.20" width="3.00" height="21.60" fill="#0a66f5"/>
<rect x="468.00" y="584.20" width="2.00" height="21.60" fill="#0a6bed"/>
<rect x="481.00" y="584.20" width="3.00" height="21.60" fill="#0a61fd"/>
<rect x="488.00" y="584.20" width="2.00" height="21.60" fill="#0b5eff"/>
<rect x="499.00" y="584.20" width="1.00" height="21.60" fill="#0a6ceb"/>
<rect x="502.00" y="584.20" width="2.00" height="21.60" fill="#182bec"/>
<rect x="509.00" y="584.20" width="1.00" height="21.60" fill="#0b5cff"/>
<rect x="517.00" y="584.20" width="2.00" height="21.60" fill="#0d58ff"/>
<rect x="520.00" y="584.20" width="3.00" height="21.60" fill="#1839ff"/>
<rect x="524.00" y="584.20" width="1.00" height="21.60" fill="#0a70e4"/>
<rect x="528.00" y="584.20" width="2.00" height="21.60" fill="#0a6cec"/>
<rect x="531.00" y="584.20" width="1.00" height="21.60" fill="#0a69f1"/>
<rect x="535.00" y="584.20" width="1.00" height="21.60" fill="#0a63fa"/>
<rect x="540.00" y="584.20" width="2.00" height="21.60" fill="#0a67f3"/>
<rect x="545.00" y="584.20" width="2.00" height="21.60" fill="#0a62fc"/>
<rect x="553.00" y="584.20" width="1.00" height="21.60" fill="#0c5bff"/>
<rect x="556.00" y="584.20" width="1.00" height="21.60" fill="#0a65f7"/>
<rect x="558.00" y="584.20" width="3.00" height="21.60" fill="#0a64f9"/>
<rect x="561.00" y="584.20" width="2.00" height="21.60" fill="#0a70e5"/>
<rect x="565.00" y="584.20" width="3.00" height="21.60" fill="#0d58ff"/>
<rect x="568.00" y="584.20" width="1.00" height="21.60" fill="#0a63fa"/>
<rect x="570.00" y="584.20" width="3.00" height="21.60" fill="#0a5fff"/>
<rect x="578.00" y="584.20" width="2.00" height="21.60" fill="#0a68f1"/>
<rect x="581.00" y="584.20" width="1.00" height="21.60" fill="#0c5bff"/>
<rect x="587.00" y="584.20" width="2.00" height="21.60" fill="#0d57ff"/>
<rect x="591.00" y="584.20" width="1.00" height="21.60" fill="#181fdb"/>
<rect x="596.00" y="584.20" width="1.00" height="21.60" fill="#0a70e5"/>
<rect x="598.00" y="584.20" width="1.00" height="21.60" fill="#0a6aef"/>
<rect x="602.00" y="584.20" width="1.00" height="21.60" fill="#0a66f5"/>
<rect x="607.00" y="584.20" width="1.00" height="21.60" fill="#0b5cff"/>
<rect x="616.00" y="584.20" width="3.00" height="21.60" fill="#182ff2"/>
<rect x="619.00" y="584.20" width="3.00" height="21.60" fill="#0b5eff"/>
<rect x="623.00" y="584.20" width="1.00" height="21.60" fill="#0b5eff"/>
<rect x="636.00" y="584.20" width="3.00" height="21.60" fill="#1829e9"/>
<rect x="639.00" y="584.20" width="2.00" height="21.60" fill="#0a63fb"/>
<rect x="644.00" y="584.20" width="2.00" height="21.60" fill="#173bff"/>
<rect x="649.00" y="584.20" width="2.00" height="21.60" fill="#0a6aef"/>
<rect x="653.00" y="584.20" width="1.00" height="21.60" fill="#0a72e2"/>
<rect x="655.00" y="584.20" width="3.00" height="21.60" fill="#0a62fb"/>
<rect x="658.00" y="584.20" width="1.00" height="21.60" fill="#0a73e0"/>
<rect x="660.00" y="584.20" width="2.00" height="21.60" fill="#0a72e1"/>
<rect x="664.00" y="584.20" width="1.00" height="21.60" fill="#0c5bff"/>
<rect x="668.00" y="584.20" width="3.00" height="21.60" fill="#0a6fe7"/>
<rect x="672.00" y="584.20" width="2.00" height="21.60" fill="#1828e7"/>
<rect x="675.00" y="584.20" width="2.00" height="21.60" fill="#0a6cec"/>
<rect x="686.00" y="584.20" width="1.00" height="21.60" fill="#0a6ee9"/>
<rect x="688.00" y="584.20" width="2.00" height="21.60" fill="#1834f9"/>
<rect x="694.00" y="584.20" width="3.00" height="21.60" fill="#0a67f4"/>
<rect x="697.00" y="584.20" width="2.00" height="21.60" fill="#1833f8"/>
<rect x="700.00" y="584.20" width="1.00" height="21.60" fill="#0a66f6"/>
<rect x="705.00" y="584.20" width="1.00" height="21.60" fill="#0a6ee8"/>
<rect x="707.00" y="584.20" width="1.00" height="21.60" fill="#0a6de9"/>
<rect x="716.00" y="584.20" width="1.00" height="21.60" fill="#0a60ff"/>
<rect x="723.00" y="584.20" width="1.00" height="21.60" fill="#0a68f2"/>
<rect x="726.00" y="584.20" width="3.00" height="21.60" fill="#0a6de9"/>
<rect x="729.00" y="584.20" width="1.00" height="21.60" fill="#1541ff"/>
<rect x="732.00" y="584.20" width="1.00" height="21.60" fill="#0a74df"/>
<rect x="735.00" y="584.20" width="1.00" height="21.60" fill="#0a67f3"/>
<rect x="739.00" y="584.20" width="2.00" height="21.60" fill="#0a6aee"/>
<rect x="742.00" y="584.20" width="2.00" height="21.60" fill="#0a62fb"/>
<rect x="745.00" y="584.20" width="1.00" height="21.60" fill="#1541ff"/>
<rect x="749.00" y="584.20" width="1.00" height="21.60" fill="#0a62fb"/>
<rect x="756.00" y="584.20" width="1.00" height="21.60" fill="#1443ff"/>
<rect x="759.00" y="584.20" width="1.00" height="21.60" fill="#0a66f5"/>
<rect x="763.00" y="584.20" width="1.00" height="21.60" fill="#0a67f3"/>
<rect x="767.00" y="584.20" width="1.00" height="21.60" fill="#0b5eff"/>
<rect x="770.00" y="584.20" width="3.00" height="21.60" fill="#181bd5"/>
<rect x="774.00" y="584.20" width="1.00" height="21.60" fill="#0a63fa"/>
<rect x="779.00" y="584.20" width="3.00" height="21.60" fill="#0a66f4"/>
<rect x="787.00" y="584.20" width="1.00" height="21.60" fill="#0a6bee"/>
<rect x="792.00" y="584.20" width="2.00" height="21.60" fill="#0c5bff"/>
<rect x="795.00" y="584.20" width="1.00" height="21.60" fill="#0a75dd"/>
<rect x="800.00" y="584.20" width="1.00" height="21.60" fill="#0a73e0"/>
<rect x="805.00" y="584.20" width="2.00" height="21.60" fill="#0a68f2"/>
<rect x="810.00" y="584.20" width="2.00" height="21.60" fill="#0a69f0"/>
<rect x="817.00" y="584.20" width="1.00" height="21.60" fill="#0e54ff"/>
<rect x="835.00" y="584.20" width="3.00" height="21.60" fill="#0a63fa"/>
<rect x="839.00" y="584.20" width="2.00" height="21.60" fill="#0a72e2"/>
<rect x="842.00" y="584.20" width="1.00" height="21.60" fill="#0a69f0"/>
<rect x="846.00" y="584.20" width="1.00" height="21.60" fill="#0a6fe7"/>
<rect x="848.00" y="584.20" width="2.00" height="21.60" fill="#0b5cff"/>
<rect x="851.00" y="584.20" width="2.00" height="21.60" fill="#0a6ee8"/>
<rect x="861.00" y="584.20" width="3.00" height="21.60" fill="#0a75de"/>
<rect x="864.00" y="584.20" width="3.00" height="21.60" fill="#0a61fe"/>
<rect x="870.00" y="584.20" width="1.00" height="21.60" fill="#0a6bed"/>
<rect x="878.00" y="584.20" width="3.00" height="21.60" fill="#0a60fe"/>
<rect x="882.00" y="584.20" width="1.00" height="21.60" fill="#0a67f4"/>
<rect x="886.00" y="584.20" width="2.00" height="21.60" fill="#181dd8"/>
<rect x="889.00" y="584.20" width="3.00" height="21.60" fill="#0d57ff"/>
<rect x="902.00" y="584.20" width="1.00" height="21.60" fill="#0a72e1"/>
<rect x="908.00" y="584.20" width="3.00" height="21.60" fill="#0e55ff"/>
<rect x="911.00" y="584.20" width="1.00" height="21.60" fill="#0a68f2"/>
<rect x="913.00" y="584.20" width="1.00" height="21.60" fill="#0a60ff"/>
<rect x="921.00" y="584.20" width="2.00" height="21.60" fill="#0b5eff"/>
<rect x="925.00" y="584.20" width="1.00" height="21.60" fill="#0a75dd"/>
<rect x="930.00" y="584.20" width="2.00" height="21.60" fill="#0a64f8"/>
<rect x="933.00" y="584.20" width="1.00" height="21.60" fill="#0a63fa"/>
<rect x="936.00" y="584.20" width="1.00" height="21.60" fill="#0a74df"/>
<rect x="938.00" y="584.20" width="1.00" height="21.60" fill="#0a60fe"/>
<rect x="941.00" y="584.20" width="1.00" height="21.60" fill="#0a75de"/>
<rect x="946.00" y="584.20" width="1.00" height="21.60" fill="#0c5aff"/>
<rect x="954.00" y="584.20" width="2.00" height="21.60" fill="#0a60fe"/>
<rect x="958.00" y="584.20" width="1.00" height="21.60" fill="#0a71e3"/>
<rect x="961.00" y="584.20" width="1.00" height="21.60" fill="#0a63f9"/>
<rect x="963.00" y="584.20" width="2.00" height="21.60" fill="#0b5eff"/>
<rect x="973.00" y="584.20" width="2.00" height="21.60" fill="#0a60ff"/>
<rect x="976.00" y="584.20" width="2.00" height="21.60" fill="#0a64f9"/>
<rect x="983.00" y="584.20" width="1.00" height="21.60" fill="#0a69f1"/>
<rect x="990.00" y="584.20" width="2.00" height="21.60" fill="#1834f8"/>
<rect x="995.00" y="584.20" width="1.00" height="21.60" fill="#0b5dff"/>
<rect x="999.00" y="584.20" width="2.00" height="21.60" fill="#0a75dd"/>
<rect x="1003.00" y="584.20" width="1.00" height="21.60" fill="#0a6bee"/>
<rect x="1006.00" y="584.20" width="1.00" height="21.60" fill="#163eff"/>
<rect x="1019.00" y="584.20" width="3.00" height="21.60" fill="#0a61fe"/>
<rect x="1023.00" y="584.20" width="3.00" height="21.60" fill="#0a62fc"/>
<rect x="1026.00" y="584.20" width="1.00" height="21.60" fill="#0a60ff"/>
<rect x="1031.00" y="584.20" width="1.00" height="21.60" fill="#1838ff"/>
<rect x="1033.00" y="584.20" width="3.00" height="21.60" fill="#0a61fd"/>
<rect x="1036.00" y="584.20" width="2.00" height="21.60" fill="#0a6bed"/>
<rect x="1044.00" y="584.20" width="3.00" height="21.60" fill="#1829e9"/>
<rect x="1049.00" y="584.20" width="2.00" height="21.60" fill="#0a64f8"/>
<rect x="1052.00" y="584.20" width="2.00" height="21.60" fill="#0a70e5"/>
<rect x="1057.00" y="584.20" width="3.00" height="21.60" fill="#1820dc"/>
<rect x="1062.00" y="584.20" width="1.00" height="21.60" fill="#182ef1"/>
<rect x="1067.00" y="584.20" width="3.00" height="21.60" fill="#0a65f7"/>
<rect x="1075.00" y="584.20" width="1.00" height="21.60" fill="#0a63fa"/>
<rect x="96.00" y="605.80" width="3.00" height="12.50" fill="#1099a3"/>
<rect x="100.00" y="605.80" width="1.00" height="12.50" fill="#0d58ff"/>
<rect x="102.00" y="605.80" width="3.00" height="12.50" fill="#0f8db5"/>
<rect x="105.00" y="605.80" width="2.00" height="12.50" fill="#0d86c1"/>
<rect x="112.00" y="605.80" width="2.00" height="12.50" fill="#0d83c6"/>
<rect x="118.00" y="605.80" width="1.00" height="12.50" fill="#0e8abb"/>
<rect x="120.00" y="605.80" width="1.00" height="12.50" fill="#0e88bd"/>
<rect x="128.00" y="605.80" width="3.00" height="12.50" fill="#1099a3"/>
<rect x="133.00" y="605.80" width="2.00" height="12.50" fill="#1091ae"/>
<rect x="136.00" y="605.80" width="2.00" height="12.50" fill="#0e88bd"/>
<rect x="144.00" y="605.80" width="2.00" height="12.50" fill="#0d83c5"/>
<rect x="148.00" y="605.80" width="3.00" height="12.50" fill="#0e89bc"/>
<rect x="151.00" y="605.80" width="3.00" height="12.50" fill="#1093ac"/>
<rect x="154.00" y="605.80" width="3.00" height="12.50" fill="#1091ae"/>
<rect x="158.00" y="605.80" width="1.00" height="12.50" fill="#108eb3"/>
<rect x="163.00" y="605.80" width="2.00" height="12.50" fill="#0e89bc"/>
<rect x="167.00" y="605.80" width="2.00" height="12.50" fill="#0a5fff"/>
<rect x="170.00" y="605.80" width="2.00" height="12.50" fill="#0f8cb6"/>
<rect x="175.00" y="605.80" width="2.00" height="12.50" fill="#0e8aba"/>
<rect x="179.00" y="605.80" width="1.00" height="12.50" fill="#1093ab"/>
<rect x="183.00" y="605.80" width="1.00" height="12.50" fill="#1094aa"/>
<rect x="185.00" y="605.80" width="1.00" height="12.50" fill="#0e87c0"/>
<rect x="187.00" y="605.80" width="3.00" height="12.50" fill="#0d86c1"/>
<rect x="190.00" y="605.80" width="2.00" height="12.50" fill="#1094ab"/>
<rect x="195.00" y="605.80" width="3.00" height="12.50" fill="#0a6deb"/>
<rect x="198.00" y="605.80" width="3.00" height="12.50" fill="#0e87c0"/>
<rect x="201.00" y="605.80" width="3.00" height="12.50" fill="#1095a9"/>
<rect x="205.00" y="605.80" width="1.00" height="12.50" fill="#0b5eff"/>
<rect x="211.00" y="605.80" width="3.00" height="12.50" fill="#0d83c5"/>
<rect x="214.00" y="605.80" width="3.00" height="12.50" fill="#1097a5"/>
<rect x="219.00" y="605.80" width="3.00" height="12.50" fill="#0f8aba"/>
<rect x="226.00" y="605.80" width="1.00" height="12.50" fill="#1093ab"/>
<rect x="229.00" y="605.80" width="3.00" height="12.50" fill="#0d83c6"/>
<rect x="232.00" y="605.80" width="1.00" height="12.50" fill="#1096a8"/>
<rect x="236.00" y="605.80" width="1.00" height="12.50" fill="#0f8db6"/>
<rect x="238.00" y="605.80" width="1.00" height="12.50" fill="#1093ac"/>
<rect x="244.00" y="605.80" width="1.00" height="12.50" fill="#0e88be"/>
<rect x="246.00" y="605.80" width="1.00" height="12.50" fill="#1094a9"/>
<rect x="248.00" y="605.80" width="1.00" height="12.50" fill="#0f8ab9"/>
<rect x="251.00" y="605.80" width="3.00" height="12.50" fill="#1090b0"/>
<rect x="254.00" y="605.80" width="1.00" height="12.50" fill="#0f8bb9"/>
<rect x="263.00" y="605.80" width="1.00" height="12.50" fill="#0a69f1"/>
<rect x="277.00" y="605.80" width="2.00" height="12.50" fill="#0d84c5"/>
<rect x="282.00" y="605.80" width="1.00" height="12.50" fill="#0d83c5"/>
<rect x="284.00" y="605.80" width="3.00" height="12.50" fill="#1099a3"/>
<rect x="287.00" y="605.80" width="2.00" height="12.50" fill="#108eb3"/>
<rect x="291.00" y="605.80" width="1.00" height="12.50" fill="#1094aa"/>
<rect x="295.00" y="605.80" width="3.00" height="12.50" fill="#1095a9"/>
<rect x="298.00" y="605.80" width="3.00" height="12.50" fill="#1097a5"/>
<rect x="301.00" y="605.80" width="1.00" height="12.50" fill="#1093ab"/>
<rect x="307.00" y="605.80" width="3.00" height="12.50" fill="#1096a7"/>
<rect x="314.00" y="605.80" width="2.00" height="12.50" fill="#0d84c5"/>
<rect x="317.00" y="605.80" width="3.00" height="12.50" fill="#1098a4"/>
<rect x="320.00" y="605.80" width="1.00" height="12.50" fill="#1093ab"/>
<rect x="322.00" y="605.80" width="3.00" height="12.50" fill="#1096a6"/>
<rect x="326.00" y="605.80" width="3.00" height="12.50" fill="#108fb2"/>
<rect x="329.00" y="605.80" width="3.00" height="12.50" fill="#0f8eb4"/>
<rect x="332.00" y="605.80" width="2.00" height="12.50" fill="#1096a6"/>
<rect x="339.00" y="605.80" width="2.00" height="12.50" fill="#0f8eb3"/>
<rect x="346.00" y="605.80" width="2.00" height="12.50" fill="#1092ad"/>
<rect x="352.00" y="605.80" width="1.00" height="12.50" fill="#108fb2"/>
<rect x="354.00" y="605.80" width="2.00" height="12.50" fill="#0d85c2"/>
<rect x="362.00" y="605.80" width="3.00" height="12.50" fill="#0a75dd"/>
<rect x="365.00" y="605.80" width="1.00" height="12.50" fill="#1091ae"/>
<rect x="367.00" y="605.80" width="1.00" height="12.50" fill="#0a71e4"/>
<rect x="369.00" y="605.80" width="2.00" height="12.50" fill="#0f8cb7"/>
<rect x="375.00" y="605.80" width="2.00" height="12.50" fill="#1096a6"/>
<rect x="381.00" y="605.80" width="1.00" height="12.50" fill="#0d83c6"/>
<rect x="383.00" y="605.80" width="2.00" height="12.50" fill="#1099a3"/>
<rect x="386.00" y="605.80" width="3.00" height="12.50" fill="#108eb3"/>
<rect x="389.00" y="605.80" width="1.00" height="12.50" fill="#1091af"/>
<rect x="393.00" y="605.80" width="2.00" height="12.50" fill="#0a64f8"/>
<rect x="403.00" y="605.80" width="1.00" height="12.50" fill="#1095a8"/>
<rect x="414.00" y="605.80" width="3.00" height="12.50" fill="#1094ab"/>
<rect x="417.00" y="605.80" width="1.00" height="12.50" fill="#0f8cb6"/>
<rect x="426.00" y="605.80" width="1.00" height="12.50" fill="#1091af"/>
<rect x="430.00" y="605.80" width="1.00" height="12.50" fill="#1097a5"/>
<rect x="433.00" y="605.80" width="3.00" height="12.50" fill="#1093ac"/>
<rect x="439.00" y="605.80" width="3.00" height="12.50" fill="#0d85c2"/>
<rect x="442.00" y="605.80" width="1.00" height="12.50" fill="#0f8cb7"/>
<rect x="444.00" y="605.80" width="2.00" height="12.50" fill="#1091ae"/>
<rect x="447.00" y="605.80" width="2.00" height="12.50" fill="#1092ac"/>
<rect x="450.00" y="605.80" width="1.00" height="12.50" fill="#0a77da"/>
<rect x="456.00" y="605.80" width="1.00" height="12.50" fill="#0f8db4"/>
<rect x="462.00" y="605.80" width="2.00" height="12.50" fill="#0e87bf"/>
<rect x="466.00" y="605.80" width="3.00" height="12.50" fill="#1095a9"/>
<rect x="477.00" y="605.80" width="2.00" height="12.50" fill="#108fb2"/>
<rect x="480.00" y="605.80" width="3.00" height="12.50" fill="#0e89bb"/>
<rect x="483.00" y="605.80" width="1.00" height="12.50" fill="#0d83c6"/>
<rect x="497.00" y="605.80" width="1.00" height="12.50" fill="#0a75dd"/>
<rect x="499.00" y="605.80" width="1.00" height="12.50" fill="#0f8db5"/>
<rect x="502.00" y="605.80" width="2.00" height="12.50" fill="#0f8cb7"/>
<rect x="509.00" y="605.80" width="1.00" height="12.50" fill="#1098a3"/>
<rect x="517.00" y="605.80" width="1.00" height="12.50" fill="#0c59ff"/>
<rect x="522.00" y="605.80" width="1.00" height="12.50" fill="#0d84c3"/>
<rect x="524.00" y="605.80" width="3.00" height="12.50" fill="#0d86c1"/>
<rect x="531.00" y="605.80" width="1.00" height="12.50" fill="#1098a3"/>
<rect x="537.00" y="605.80" width="1.00" height="12.50" fill="#0f8db5"/>
<rect x="540.00" y="605.80" width="2.00" height="12.50" fill="#0d83c6"/>
<rect x="546.00" y="605.80" width="1.00" height="12.50" fill="#0a6aef"/>
<rect x="551.00" y="605.80" width="1.00" height="12.50" fill="#1095a8"/>
<rect x="553.00" y="605.80" width="1.00" height="12.50" fill="#1098a3"/>
<rect x="556.00" y="605.80" width="1.00" height="12.50" fill="#1093ac"/>
<rect x="558.00" y="605.80" width="3.00" height="12.50" fill="#0f8db5"/>
<rect x="561.00" y="605.80" width="2.00" height="12.50" fill="#0e8abb"/>
<rect x="566.00" y="605.80" width="3.00" height="12.50" fill="#0d85c3"/>
<rect x="571.00" y="605.80" width="2.00" height="12.50" fill="#0a61fe"/>
<rect x="576.00" y="605.80" width="1.00" height="12.50" fill="#1098a5"/>
<rect x="578.00" y="605.80" width="1.00" height="12.50" fill="#0f8aba"/>
<rect x="581.00" y="605.80" width="1.00" height="12.50" fill="#0f8eb4"/>
<rect x="584.00" y="605.80" width="1.00" height="12.50" fill="#0a72e2"/>
<rect x="586.00" y="605.80" width="3.00" height="12.50" fill="#1090b1"/>
<rect x="589.00" y="605.80" width="3.00" height="12.50" fill="#0e89bc"/>
<rect x="592.00" y="605.80" width="1.00" height="12.50" fill="#0a65f7"/>
<rect x="596.00" y="605.80" width="1.00" height="12.50" fill="#0b5cff"/>
<rect x="600.00" y="605.80" width="2.00" height="12.50" fill="#1094aa"/>
<rect x="604.00" y="605.80" width="2.00" height="12.50" fill="#0a75dc"/>
<rect x="607.00" y="605.80" width="2.00" height="12.50" fill="#0f8db6"/>
<rect x="613.00" y="605.80" width="2.00" height="12.50" fill="#1097a6"/>
<rect x="619.00" y="605.80" width="3.00" height="12.50" fill="#0d82c7"/>
<rect x="626.00" y="605.80" width="2.00" height="12.50" fill="#0d86c1"/>
<rect x="629.00" y="605.80" width="3.00" height="12.50" fill="#0e89bc"/>
<rect x="633.00" y="605.80" width="1.00" height="12.50" fill="#1097a5"/>
<rect x="635.00" y="605.80" width="3.00" height="12.50" fill="#0a6bed"/>
<rect x="638.00" y="605.80" width="2.00" height="12.50" fill="#108fb2"/>
<rect x="642.00" y="605.80" width="1.00" height="12.50" fill="#0a71e3"/>
<rect x="644.00" y="605.80" width="2.00" height="12.50" fill="#1094aa"/>
<rect x="648.00" y="605.80" width="1.00" height="12.50" fill="#0d82c7"/>
<rect x="650.00" y="605.80" width="1.00" height="12.50" fill="#1092ad"/>
<rect x="652.00" y="605.80" width="2.00" height="12.50" fill="#0f8aba"/>
<rect x="655.00" y="605.80" width="3.00" height="12.50" fill="#0e88be"/>
<rect x="660.00" y="605.80" width="2.00" height="12.50" fill="#0f8bb8"/>
<rect x="666.00" y="605.80" width="1.00" height="12.50" fill="#1099a2"/>
<rect x="669.00" y="605.80" width="2.00" height="12.50" fill="#1093ac"/>
<rect x="672.00" y="605.80" width="2.00" height="12.50" fill="#1095a8"/>
<rect x="675.00" y="605.80" width="1.00" height="12.50" fill="#1092ac"/>
<rect x="679.00" y="605.80" width="2.00" height="12.50" fill="#0c59ff"/>
<rect x="686.00" y="605.80" width="1.00" height="12.50" fill="#0d82c7"/>
<rect x="689.00" y="605.80" width="1.00" height="12.50" fill="#1093ac"/>
<rect x="697.00" y="605.80" width="2.00" height="12.50" fill="#1099a3"/>
<rect x="702.00" y="605.80" width="1.00" height="12.50" fill="#1097a5"/>
<rect x="704.00" y="605.80" width="1.00" height="12.50" fill="#0d84c4"/>
<rect x="707.00" y="605.80" width="2.00" height="12.50" fill="#0e8aba"/>
<rect x="711.00" y="605.80" width="1.00" height="12.50" fill="#0a6ee8"/>
<rect x="713.00" y="605.80" width="1.00" height="12.50" fill="#0b5cff"/>
<rect x="726.00" y="605.80" width="3.00" height="12.50" fill="#1097a5"/>
<rect x="729.00" y="605.80" width="2.00" height="12.50" fill="#1096a7"/>
<rect x="732.00" y="605.80" width="1.00" height="12.50" fill="#1092ad"/>
<rect x="735.00" y="605.80" width="1.00" height="12.50" fill="#1090b0"/>
<rect x="737.00" y="605.80" width="1.00" height="12.50" fill="#0f8eb4"/>
<rect x="742.00" y="605.80" width="2.00" height="12.50" fill="#0a62fc"/>
<rect x="745.00" y="605.80" width="2.00" height="12.50" fill="#1096a7"/>
<rect x="754.00" y="605.80" width="2.00" height="12.50" fill="#1090b0"/>
<rect x="757.00" y="605.80" width="1.00" height="12.50" fill="#0f8ab9"/>
<rect x="760.00" y="605.80" width="2.00" height="12.50" fill="#0a63fa"/>
<rect x="763.00" y="605.80" width="1.00" height="12.50" fill="#0f8cb7"/>
<rect x="765.00" y="605.80" width="3.00" height="12.50" fill="#108fb2"/>
<rect x="770.00" y="605.80" width="3.00" height="12.50" fill="#1099a2"/>
<rect x="773.00" y="605.80" width="3.00" height="12.50" fill="#1099a3"/>
<rect x="777.00" y="605.80" width="1.00" height="12.50" fill="#1092ad"/>
<rect x="779.00" y="605.80" width="1.00" height="12.50" fill="#0e87bf"/>
<rect x="781.00" y="605.80" width="2.00" height="12.50" fill="#0f8cb6"/>
<rect x="784.00" y="605.80" width="3.00" height="12.50" fill="#0d85c2"/>
<rect x="792.00" y="605.80" width="2.00" height="12.50" fill="#0d86c1"/>
<rect x="801.00" y="605.80" width="3.00" height="12.50" fill="#1094ab"/>
<rect x="805.00" y="605.80" width="3.00" height="12.50" fill="#0a77da"/>
<rect x="808.00" y="605.80" width="3.00" height="12.50" fill="#0a70e5"/>
<rect x="811.00" y="605.80" width="1.00" height="12.50" fill="#1097a5"/>
<rect x="817.00" y="605.80" width="1.00" height="12.50" fill="#1092ad"/>
<rect x="819.00" y="605.80" width="3.00" height="12.50" fill="#0e86c1"/>
<rect x="824.00" y="605.80" width="3.00" height="12.50" fill="#1091af"/>
<rect x="828.00" y="605.80" width="1.00" height="12.50" fill="#1097a5"/>
<rect x="839.00" y="605.80" width="1.00" height="12.50" fill="#0e88bd"/>
<rect x="842.00" y="605.80" width="1.00" height="12.50" fill="#0e88be"/>
<rect x="845.00" y="605.80" width="1.00" height="12.50" fill="#0e87c0"/>
<rect x="847.00" y="605.80" width="2.00" height="12.50" fill="#0a64f8"/>
<rect x="850.00" y="605.80" width="3.00" height="12.50" fill="#0f8bb9"/>
<rect x="856.00" y="605.80" width="2.00" height="12.50" fill="#1095a8"/>
<rect x="859.00" y="605.80" width="1.00" height="12.50" fill="#1099a3"/>
<rect x="861.00" y="605.80" width="2.00" height="12.50" fill="#1094ab"/>
<rect x="865.00" y="605.80" width="2.00" height="12.50" fill="#108eb3"/>
<rect x="871.00" y="605.80" width="3.00" height="12.50" fill="#1092ad"/>
<rect x="878.00" y="605.80" width="3.00" height="12.50" fill="#1098a5"/>
<rect x="882.00" y="605.80" width="1.00" height="12.50" fill="#0e86c1"/>
<rect x="886.00" y="605.80" width="2.00" height="12.50" fill="#0a74df"/>
<rect x="898.00" y="605.80" width="3.00" height="12.50" fill="#0b5eff"/>
<rect x="906.00" y="605.80" width="1.00" height="12.50" fill="#0e8aba"/>
<rect x="908.00" y="605.80" width="3.00" height="12.50" fill="#0d84c4"/>
<rect x="913.00" y="605.80" width="2.00" height="12.50" fill="#0a62fb"/>
<rect x="917.00" y="605.80" width="3.00" height="12.50" fill="#1095a8"/>
<rect x="922.00" y="605.80" width="1.00" height="12.50" fill="#0f8cb7"/>
<rect x="925.00" y="605.80" width="3.00" height="12.50" fill="#1090b0"/>
<rect x="928.00" y="605.80" width="1.00" height="12.50" fill="#0d85c2"/>
<rect x="933.00" y="605.80" width="1.00" height="12.50" fill="#0d84c5"/>
<rect x="936.00" y="605.80" width="1.00" height="12.50" fill="#108fb2"/>
<rect x="941.00" y="605.80" width="2.00" height="12.50" fill="#0f8db5"/>
<rect x="947.00" y="605.80" width="1.00" height="12.50" fill="#1097a5"/>
<rect x="954.00" y="605.80" width="3.00" height="12.50" fill="#0a6aef"/>
<rect x="961.00" y="605.80" width="1.00" height="12.50" fill="#0e89bb"/>
<rect x="963.00" y="605.80" width="1.00" height="12.50" fill="#108fb1"/>
<rect x="965.00" y="605.80" width="3.00" height="12.50" fill="#1093ac"/>
<rect x="969.00" y="605.80" width="1.00" height="12.50" fill="#0b5eff"/>
<rect x="973.00" y="605.80" width="2.00" height="12.50" fill="#1093ab"/>
<rect x="976.00" y="605.80" width="2.00" height="12.50" fill="#0e8aba"/>
<rect x="983.00" y="605.80" width="2.00" height="12.50" fill="#0a64f9"/>
<rect x="986.00" y="605.80" width="1.00" height="12.50" fill="#0a77da"/>
<rect x="989.00" y="605.80" width="3.00" height="12.50" fill="#0a66f5"/>
<rect x="995.00" y="605.80" width="3.00" height="12.50" fill="#108eb3"/>
<rect x="998.00" y="605.80" width="1.00" height="12.50" fill="#0d84c5"/>
<rect x="1000.00" y="605.80" width="3.00" height="12.50" fill="#0e87bf"/>
<rect x="1003.00" y="605.80" width="1.00" height="12.50" fill="#0a71e3"/>
<rect x="1005.00" y="605.80" width="2.00" height="12.50" fill="#0e8aba"/>
<rect x="1009.00" y="605.80" width="2.00" height="12.50" fill="#0e89bc"/>
<rect x="1013.00" y="605.80" width="1.00" height="12.50" fill="#0c5aff"/>
<rect x="1021.00" y="605.80" width="3.00" height="12.50" fill="#1095a9"/>
<rect x="1024.00" y="605.80" width="3.00" height="12.50" fill="#1099a3"/>
<rect x="1027.00" y="605.80" width="1.00" height="12.50" fill="#1095a8"/>
<rect x="1031.00" y="605.80" width="2.00" height="12.50" fill="#0e88bd"/>
<rect x="1035.00" y="605.80" width="3.00" height="12.50" fill="#0d84c4"/>
<rect x="1044.00" y="605.80" width="1.00" height="12.50" fill="#0d84c4"/>
<rect x="1047.00" y="605.80" width="3.00" height="12.50" fill="#1091af"/>
<rect x="1050.00" y="605.80" width="1.00" height="12.50" fill="#0c82c8"/>
<rect x="1052.00" y="605.80" width="1.00" height="12.50" fill="#0d85c3"/>
<rect x="1057.00" y="605.80" width="2.00" height="12.50" fill="#1091af"/>
<rect x="1060.00" y="605.80" width="1.00" height="12.50" fill="#1090b0"/>
<rect x="1069.00" y="605.80" width="1.00" height="12.50" fill="#1090b0"/>
<rect x="1074.00" y="605.80" width="2.00" height="12.50" fill="#0f8cb7"/>
<rect x="96.00" y="618.30" width="3.00" height="12.50" fill="#10a98c"/>
<rect x="100.00" y="618.30" width="3.00" height="12.50" fill="#109e9b"/>
<rect x="103.00" y="618.30" width="3.00" height="12.50" fill="#1098a4"/>
<rect x="106.00" y="618.30" width="1.00" height="12.50" fill="#109d9c"/>
<rect x="113.00" y="618.30" width="1.00" height="12.50" fill="#10ab89"/>
<rect x="116.00" y="618.30" width="1.00" height="12.50" fill="#10a492"/>
<rect x="120.00" y="618.30" width="3.00" height="12.50" fill="#10a493"/>
<rect x="123.00" y="618.30" width="3.00" height="12.50" fill="#109d9d"/>
<rect x="128.00" y="618.30" width="1.00" height="12.50" fill="#109b9f"/>
<rect x="137.00" y="618.30" width="1.00" height="12.50" fill="#10a493"/>
<rect x="140.00" y="618.30" width="1.00" height="12.50" fill="#10a98c"/>
<rect x="144.00" y="618.30" width="3.00" height="12.50" fill="#1099a3"/>
<rect x="149.00" y="618.30" width="1.00" height="12.50" fill="#109f9a"/>
<rect x="151.00" y="618.30" width="1.00" height="12.50" fill="#10ae86"/>
<rect x="153.00" y="618.30" width="3.00" height="12.50" fill="#10ad86"/>
<rect x="156.00" y="618.30" width="1.00" height="12.50" fill="#0f8db5"/>
<rect x="158.00" y="618.30" width="1.00" height="12.50" fill="#0a79d7"/>
<rect x="161.00" y="618.30" width="1.00" height="12.50" fill="#10a295"/>
<rect x="167.00" y="618.30" width="3.00" height="12.50" fill="#10a099"/>
<rect x="170.00" y="618.30" width="1.00" height="12.50" fill="#0c7fcc"/>
<rect x="174.00" y="618.30" width="3.00" height="12.50" fill="#109d9c"/>
<rect x="177.00" y="618.30" width="2.00" height="12.50" fill="#1099a3"/>
<rect x="185.00" y="618.30" width="3.00" height="12.50" fill="#109e9b"/>
<rect x="188.00" y="618.30" width="3.00" height="12.50" fill="#109aa1"/>
<rect x="191.00" y="618.30" width="1.00" height="12.50" fill="#0b7ad5"/>
<rect x="198.00" y="618.30" width="1.00" height="12.50" fill="#0e8abb"/>
<rect x="200.00" y="618.30" width="2.00" height="12.50" fill="#109b9f"/>
<rect x="205.00" y="618.30" width="2.00" height="12.50" fill="#0c7fcc"/>
<rect x="208.00" y="618.30" width="1.00" height="12.50" fill="#0f8bb9"/>
<rect x="212.00" y="618.30" width="2.00" height="12.50" fill="#10a493"/>
<rect x="219.00" y="618.30" width="3.00" height="12.50" fill="#109f99"/>
<rect x="229.00" y="618.30" width="3.00" height="12.50" fill="#10ac89"/>
<rect x="237.00" y="618.30" width="3.00" height="12.50" fill="#109f99"/>
<rect x="240.00" y="618.30" width="1.00" height="12.50" fill="#10ae86"/>
<rect x="244.00" y="618.30" width="1.00" height="12.50" fill="#1097a5"/>
<rect x="247.00" y="618.30" width="3.00" height="12.50" fill="#10aa8a"/>
<rect x="254.00" y="618.30" width="3.00" height="12.50" fill="#0d83c6"/>
<rect x="263.00" y="618.30" width="1.00" height="12.50" fill="#109b9f"/>
<rect x="278.00" y="618.30" width="2.00" height="12.50" fill="#10a098"/>
<rect x="282.00" y="618.30" width="2.00" height="12.50" fill="#10ae85"/>
<rect x="286.00" y="618.30" width="1.00" height="12.50" fill="#1097a5"/>
<rect x="288.00" y="618.30" width="1.00" height="12.50" fill="#109d9c"/>
<rect x="291.00" y="618.30" width="3.00" height="12.50" fill="#109e9b"/>
<rect x="294.00" y="618.30" width="1.00" height="12.50" fill="#10a690"/>
<rect x="296.00" y="618.30" width="3.00" height="12.50" fill="#109aa1"/>
<rect x="299.00" y="618.30" width="2.00" height="12.50" fill="#10a591"/>
<rect x="313.00" y="618.30" width="2.00" height="12.50" fill="#109aa1"/>
<rect x="317.00" y="618.30" width="3.00" height="12.50" fill="#10a78f"/>
<rect x="320.00" y="618.30" width="1.00" height="12.50" fill="#10a295"/>
<rect x="322.00" y="618.30" width="2.00" height="12.50" fill="#10a493"/>
<rect x="325.00" y="618.30" width="3.00" height="12.50" fill="#1097a5"/>
<rect x="328.00" y="618.30" width="1.00" height="12.50" fill="#1098a4"/>
<rect x="330.00" y="618.30" width="1.00" height="12.50" fill="#10ac88"/>
<rect x="332.00" y="618.30" width="2.00" height="12.50" fill="#109aa2"/>
<rect x="347.00" y="618.30" width="3.00" height="12.50" fill="#1097a5"/>
<rect x="354.00" y="618.30" width="2.00" height="12.50" fill="#10a098"/>
<rect x="359.00" y="618.30" width="1.00" height="12.50" fill="#109d9c"/>
<rect x="362.00" y="618.30" width="3.00" height="12.50" fill="#10a88e"/>
<rect x="369.00" y="618.30" width="2.00" height="12.50" fill="#109ba0"/>
<rect x="374.00" y="618.30" width="2.00" height="12.50" fill="#10a98b"/>
<rect x="391.00" y="618.30" width="3.00" height="12.50" fill="#10ad87"/>
<rect x="394.00" y="618.30" width="1.00" height="12.50" fill="#0d82c7"/>
<rect x="396.00" y="618.30" width="3.00" height="12.50" fill="#10a98c"/>
<rect x="401.00" y="618.30" width="3.00" height="12.50" fill="#10a98c"/>
<rect x="404.00" y="618.30" width="1.00" height="12.50" fill="#10a88d"/>
<rect x="408.00" y="618.30" width="2.00" height="12.50" fill="#1098a3"/>
<rect x="414.00" y="618.30" width="2.00" height="12.50" fill="#109d9d"/>
<rect x="418.00" y="618.30" width="1.00" height="12.50" fill="#10a690"/>
<rect x="426.00" y="618.30" width="2.00" height="12.50" fill="#10a098"/>
<rect x="432.00" y="618.30" width="2.00" height="12.50" fill="#0a79d7"/>
<rect x="442.00" y="618.30" width="1.00" height="12.50" fill="#10aa8a"/>
<rect x="444.00" y="618.30" width="2.00" height="12.50" fill="#10ac88"/>
<rect x="447.00" y="618.30" width="3.00" height="12.50" fill="#1098a4"/>
<rect x="456.00" y="618.30" width="3.00" height="12.50" fill="#10a393"/>
<rect x="480.00" y="618.30" width="3.00" height="12.50" fill="#10a98d"/>
<rect x="483.00" y="618.30" width="1.00" height="12.50" fill="#10ae85"/>
<rect x="488.00" y="618.30" width="3.00" height="12.50" fill="#109ba0"/>
<rect x="497.00" y="618.30" width="1.00" height="12.50" fill="#109aa1"/>
<rect x="499.00" y="618.30" width="1.00" height="12.50" fill="#109d9c"/>
<rect x="502.00" y="618.30" width="2.00" height="12.50" fill="#10a88e"/>
<rect x="507.00" y="618.30" width="1.00" height="12.50" fill="#10ab89"/>
<rect x="509.00" y="618.30" width="2.00" height="12.50" fill="#10ab8a"/>
<rect x="517.00" y="618.30" width="1.00" height="12.50" fill="#1097a5"/>
<rect x="520.00" y="618.30" width="3.00" height="12.50" fill="#10a88e"/>
<rect x="523.00" y="618.30" width="2.00" height="12.50" fill="#109e9a"/>
<rect x="526.00" y="618.30" width="1.00" height="12.50" fill="#10a98c"/>
<rect x="528.00" y="618.30" width="1.00" height="12.50" fill="#10a88d"/>
<rect x="535.00" y="618.30" width="1.00" height="12.50" fill="#0e86c0"/>
<rect x="537.00" y="618.30" width="1.00" height="12.50" fill="#10a592"/>
<rect x="540.00" y="618.30" width="1.00" height="12.50" fill="#0d84c4"/>
<rect x="545.00" y="618.30" width="2.00" height="12.50" fill="#0d85c2"/>
<rect x="550.00" y="618.30" width="2.00" height="12.50" fill="#108eb3"/>
<rect x="553.00" y="618.30" width="1.00" height="12.50" fill="#10ac88"/>
<rect x="556.00" y="618.30" width="1.00" height="12.50" fill="#109c9f"/>
<rect x="558.00" y="618.30" width="1.00" height="12.50" fill="#0e88bd"/>
<rect x="562.00" y="618.30" width="1.00" height="12.50" fill="#1097a5"/>
<rect x="565.00" y="618.30" width="1.00" height="12.50" fill="#109aa2"/>
<rect x="570.00" y="618.30" width="1.00" height="12.50" fill="#10a492"/>
<rect x="572.00" y="618.30" width="1.00" height="12.50" fill="#10a690"/>
<rect x="577.00" y="618.30" width="1.00" height="12.50" fill="#109d9c"/>
<rect x="581.00" y="618.30" width="1.00" height="12.50" fill="#10ac87"/>
<rect x="584.00" y="618.30" width="1.00" height="12.50" fill="#10ab89"/>
<rect x="587.00" y="618.30" width="3.00" height="12.50" fill="#109c9d"/>
<rect x="590.00" y="618.30" width="3.00" height="12.50" fill="#1099a2"/>
<rect x="596.00" y="618.30" width="1.00" height="12.50" fill="#10a098"/>
<rect x="605.00" y="618.30" width="1.00" height="12.50" fill="#109d9c"/>
<rect x="607.00" y="618.30" width="1.00" height="12.50" fill="#0f8db5"/>
<rect x="614.00" y="618.30" width="1.00" height="12.50" fill="#10a690"/>
<rect x="617.00" y="618.30" width="3.00" height="12.50" fill="#0d85c2"/>
<rect x="620.00" y="618.30" width="1.00" height="12.50" fill="#0f8cb7"/>
<rect x="623.00" y="618.30" width="1.00" height="12.50" fill="#0f8db4"/>
<rect x="626.00" y="618.30" width="3.00" height="12.50" fill="#0b7ece"/>
<rect x="630.00" y="618.30" width="2.00" height="12.50" fill="#10a098"/>
<rect x="633.00" y="618.30" width="1.00" height="12.50" fill="#0c82c7"/>
<rect x="635.00" y="618.30" width="1.00" height="12.50" fill="#10a097"/>
<rect x="639.00" y="618.30" width="3.00" height="12.50" fill="#10a68f"/>
<rect x="644.00" y="618.30" width="2.00" height="12.50" fill="#109aa1"/>
<rect x="647.00" y="618.30" width="3.00" height="12.50" fill="#1098a5"/>
<rect x="650.00" y="618.30" width="1.00" height="12.50" fill="#109aa1"/>
<rect x="653.00" y="618.30" width="1.00" height="12.50" fill="#10ac88"/>
<rect x="656.00" y="618.30" width="3.00" height="12.50" fill="#109ba0"/>
<rect x="660.00" y="618.30" width="2.00" height="12.50" fill="#10a197"/>
<rect x="668.00" y="618.30" width="1.00" height="12.50" fill="#109ba0"/>
<rect x="670.00" y="618.30" width="3.00" height="12.50" fill="#109ba0"/>
<rect x="673.00" y="618.30" width="1.00" height="12.50" fill="#10a690"/>
<rect x="676.00" y="618.30" width="3.00" height="12.50" fill="#10ad87"/>
<rect x="679.00" y="618.30" width="2.00" height="12.50" fill="#0e87bf"/>
<rect x="686.00" y="618.30" width="1.00" height="12.50" fill="#10a78f"/>
<rect x="688.00" y="618.30" width="2.00" height="12.50" fill="#1097a5"/>
<rect x="695.00" y="618.30" width="3.00" height="12.50" fill="#109b9f"/>
<rect x="698.00" y="618.30" width="1.00" height="12.50" fill="#0d84c4"/>
<rect x="704.00" y="618.30" width="2.00" height="12.50" fill="#10a88e"/>
<rect x="707.00" y="618.30" width="2.00" height="12.50" fill="#109d9c"/>
<rect x="710.00" y="618.30" width="3.00" height="12.50" fill="#0f8ab9"/>
<rect x="716.00" y="618.30" width="1.00" height="12.50" fill="#0b7cd1"/>
<rect x="723.00" y="618.30" width="1.00" height="12.50" fill="#1099a3"/>
<rect x="726.00" y="618.30" width="3.00" height="12.50" fill="#0c80cb"/>
<rect x="729.00" y="618.30" width="2.00" height="12.50" fill="#109e9c"/>
<rect x="732.00" y="618.30" width="3.00" height="12.50" fill="#1098a4"/>
<rect x="735.00" y="618.30" width="1.00" height="12.50" fill="#109aa0"/>
<rect x="737.00" y="618.30" width="1.00" height="12.50" fill="#109f9a"/>
<rect x="742.00" y="618.30" width="2.00" height="12.50" fill="#10ad87"/>
<rect x="745.00" y="618.30" width="1.00" height="12.50" fill="#10ad87"/>
<rect x="754.00" y="618.30" width="1.00" height="12.50" fill="#10a591"/>
<rect x="756.00" y="618.30" width="2.00" height="12.50" fill="#10a690"/>
<rect x="759.00" y="618.30" width="2.00" height="12.50" fill="#10a098"/>
<rect x="768.00" y="618.30" width="3.00" height="12.50" fill="#10a690"/>
<rect x="771.00" y="618.30" width="1.00" height="12.50" fill="#0c7fcd"/>
<rect x="773.00" y="618.30" width="3.00" height="12.50" fill="#10a492"/>
<rect x="779.00" y="618.30" width="3.00" height="12.50" fill="#1090b1"/>
<rect x="782.00" y="618.30" width="1.00" height="12.50" fill="#10a691"/>
<rect x="792.00" y="618.30" width="2.00" height="12.50" fill="#10a492"/>
<rect x="795.00" y="618.30" width="1.00" height="12.50" fill="#109e9c"/>
<rect x="800.00" y="618.30" width="3.00" height="12.50" fill="#10ab89"/>
<rect x="805.00" y="618.30" width="1.00" height="12.50" fill="#1098a4"/>
<rect x="810.00" y="618.30" width="2.00" height="12.50" fill="#109d9d"/>
<rect x="816.00" y="618.30" width="2.00" height="12.50" fill="#10a592"/>
<rect x="819.00" y="618.30" width="2.00" height="12.50" fill="#10a295"/>
<rect x="825.00" y="618.30" width="3.00" height="12.50" fill="#0d85c3"/>
<rect x="842.00" y="618.30" width="1.00" height="12.50" fill="#10a098"/>
<rect x="845.00" y="618.30" width="2.00" height="12.50" fill="#1099a3"/>
<rect x="850.00" y="618.30" width="3.00" height="12.50" fill="#1099a2"/>
<rect x="856.00" y="618.30" width="3.00" height="12.50" fill="#10aa8b"/>
<rect x="861.00" y="618.30" width="3.00" height="12.50" fill="#1098a5"/>
<rect x="864.00" y="618.30" width="3.00" height="12.50" fill="#1098a5"/>
<rect x="867.00" y="618.30" width="1.00" height="12.50" fill="#109f9a"/>
<rect x="869.00" y="618.30" width="3.00" height="12.50" fill="#0e89bb"/>
<rect x="872.00" y="618.30" width="2.00" height="12.50" fill="#0a73e0"/>
<rect x="879.00" y="618.30" width="2.00" height="12.50" fill="#0d86c1"/>
<rect x="882.00" y="618.30" width="1.00" height="12.50" fill="#1097a5"/>
<rect x="886.00" y="618.30" width="2.00" height="12.50" fill="#10ad87"/>
<rect x="889.00" y="618.30" width="3.00" height="12.50" fill="#1097a5"/>
<rect x="899.00" y="618.30" width="2.00" height="12.50" fill="#0b7dd0"/>
<rect x="902.00" y="618.30" width="1.00" height="12.50" fill="#10a394"/>
<rect x="908.00" y="618.30" width="3.00" height="12.50" fill="#10a197"/>
<rect x="914.00" y="618.30" width="1.00" height="12.50" fill="#109c9e"/>
<rect x="922.00" y="618.30" width="1.00" height="12.50" fill="#109aa2"/>
<rect x="925.00" y="618.30" width="3.00" height="12.50" fill="#10ad86"/>
<rect x="931.00" y="618.30" width="1.00" height="12.50" fill="#10aa8b"/>
<rect x="933.00" y="618.30" width="1.00" height="12.50" fill="#10a690"/>
<rect x="935.00" y="618.30" width="2.00" height="12.50" fill="#0b7dd0"/>
<rect x="940.00" y="618.30" width="1.00" height="12.50" fill="#10a295"/>
<rect x="942.00" y="618.30" width="1.00" height="12.50" fill="#10a493"/>
<rect x="947.00" y="618.30" width="1.00" height="12.50" fill="#10a690"/>
<rect x="954.00" y="618.30" width="2.00" height="12.50" fill="#0f8db4"/>
<rect x="957.00" y="618.30" width="2.00" height="12.50" fill="#0c80ca"/>
<rect x="961.00" y="618.30" width="1.00" height="12.50" fill="#0b7ad5"/>
<rect x="966.00" y="618.30" width="3.00" height="12.50" fill="#10a099"/>
<rect x="973.00" y="618.30" width="2.00" height="12.50" fill="#109b9f"/>
<rect x="976.00" y="618.30" width="2.00" height="12.50" fill="#109f99"/>
<rect x="989.00" y="618.30" width="3.00" height="12.50" fill="#109e9a"/>
<rect x="993.00" y="618.30" width="1.00" height="12.50" fill="#10a098"/>
<rect x="999.00" y="618.30" width="1.00" height="12.50" fill="#10ae85"/>
<rect x="1001.00" y="618.30" width="3.00" height="12.50" fill="#10ab89"/>
<rect x="1004.00" y="618.30" width="3.00" height="12.50" fill="#10a196"/>
<rect x="1011.00" y="618.30" width="3.00" height="12.50" fill="#0e88bd"/>
<rect x="1020.00" y="618.30" width="3.00" height="12.50" fill="#109aa0"/>
<rect x="1023.00" y="618.30" width="3.00" height="12.50" fill="#109ba0"/>
<rect x="1026.00" y="618.30" width="2.00" height="12.50" fill="#10a492"/>
<rect x="1035.00" y="618.30" width="3.00" height="12.50" fill="#109b9f"/>
<rect x="1038.00" y="618.30" width="2.00" height="12.50" fill="#0b7ad4"/>
<rect x="1044.00" y="618.30" width="1.00" height="12.50" fill="#109f9a"/>
<rect x="1047.00" y="618.30" width="1.00" height="12.50" fill="#109ba0"/>
<rect x="1052.00" y="618.30" width="3.00" height="12.50" fill="#1097a6"/>
<rect x="1057.00" y="618.30" width="3.00" height="12.50" fill="#109c9f"/>
<rect x="1068.00" y="618.30" width="2.00" height="12.50" fill="#0e86c0"/>
<rect x="96.00" y="630.80" width="3.00" height="16.80" fill="#29c563"/>
<rect x="100.00" y="630.80" width="1.00" height="16.80" fill="#10b47e"/>
<rect x="102.00" y="630.80" width="3.00" height="16.80" fill="#21c16a"/>
<rect x="105.00" y="630.80" width="2.00" height="16.80" fill="#11b877"/>
<rect x="112.00" y="630.80" width="2.00" height="16.80" fill="#19bd70"/>
<rect x="115.00" y="630.80" width="2.00" height="16.80" fill="#1fc06b"/>
<rect x="118.00" y="630.80" width="3.00" height="16.80" fill="#109d9d"/>
<rect x="128.00" y="630.80" width="2.00" height="16.80" fill="#10b082"/>
<rect x="136.00" y="630.80" width="1.00" height="16.80" fill="#16bb73"/>
<rect x="143.00" y="630.80" width="3.00" height="16.80" fill="#10b182"/>
<rect x="147.00" y="630.80" width="3.00" height="16.80" fill="#10b083"/>
<rect x="150.00" y="630.80" width="3.00" height="16.80" fill="#109e9c"/>
<rect x="153.00" y="630.80" width="3.00" height="16.80" fill="#1ebf6c"/>
<rect x="156.00" y="630.80" width="1.00" height="16.80" fill="#29c463"/>
<rect x="166.00" y="630.80" width="3.00" height="16.80" fill="#10b181"/>
<rect x="171.00" y="630.80" width="1.00" height="16.80" fill="#10b182"/>
<rect x="176.00" y="630.80" width="1.00" height="16.80" fill="#1abd6f"/>
<rect x="179.00" y="630.80" width="1.00" height="16.80" fill="#2bc562"/>
<rect x="186.00" y="630.80" width="3.00" height="16.80" fill="#109f99"/>
<rect x="189.00" y="630.80" width="3.00" height="16.80" fill="#10ad86"/>
<rect x="195.00" y="630.80" width="3.00" height="16.80" fill="#2ac562"/>
<rect x="198.00" y="630.80" width="3.00" height="16.80" fill="#19bd70"/>
<rect x="201.00" y="630.80" width="1.00" height="16.80" fill="#27c365"/>
<rect x="203.00" y="630.80" width="1.00" height="16.80" fill="#109d9c"/>
<rect x="205.00" y="630.80" width="1.00" height="16.80" fill="#10ac88"/>
<rect x="208.00" y="630.80" width="1.00" height="16.80" fill="#108eb3"/>
<rect x="211.00" y="630.80" width="3.00" height="16.80" fill="#21c16a"/>
<rect x="214.00" y="630.80" width="3.00" height="16.80" fill="#10b37f"/>
<rect x="220.00" y="630.80" width="2.00" height="16.80" fill="#10b083"/>
<rect x="228.00" y="630.80" width="3.00" height="16.80" fill="#10b280"/>
<rect x="235.00" y="630.80" width="3.00" height="16.80" fill="#10b37f"/>
<rect x="238.00" y="630.80" width="3.00" height="16.80" fill="#13b976"/>
<rect x="244.00" y="630.80" width="1.00" height="16.80" fill="#10ab89"/>
<rect x="247.00" y="630.80" width="2.00" height="16.80" fill="#10b181"/>
<rect x="251.00" y="630.80" width="3.00" height="16.80" fill="#10ab8a"/>
<rect x="254.00" y="630.80" width="1.00" height="16.80" fill="#10b181"/>
<rect x="273.00" y="630.80" width="1.00" height="16.80" fill="#109c9f"/>
<rect x="277.00" y="630.80" width="3.00" height="16.80" fill="#1dbf6d"/>
<rect x="282.00" y="630.80" width="1.00" height="16.80" fill="#10b280"/>
<rect x="285.00" y="630.80" width="3.00" height="16.80" fill="#10b280"/>
<rect x="288.00" y="630.80" width="1.00" height="16.80" fill="#10b77a"/>
<rect x="291.00" y="630.80" width="2.00" height="16.80" fill="#10ad86"/>
<rect x="294.00" y="630.80" width="3.00" height="16.80" fill="#10b77a"/>
<rect x="297.00" y="630.80" width="3.00" height="16.80" fill="#24c267"/>
<rect x="300.00" y="630.80" width="1.00" height="16.80" fill="#1cbe6e"/>
<rect x="303.00" y="630.80" width="1.00" height="16.80" fill="#1dbe6d"/>
<rect x="308.00" y="630.80" width="1.00" height="16.80" fill="#1098a4"/>
<rect x="316.00" y="630.80" width="1.00" height="16.80" fill="#10b47e"/>
<rect x="320.00" y="630.80" width="1.00" height="16.80" fill="#1091ae"/>
<rect x="322.00" y="630.80" width="2.00" height="16.80" fill="#10af85"/>
<rect x="325.00" y="630.80" width="3.00" height="16.80" fill="#1098a5"/>
<rect x="330.00" y="630.80" width="1.00" height="16.80" fill="#10ad86"/>
<rect x="335.00" y="630.80" width="1.00" height="16.80" fill="#11b977"/>
<rect x="339.00" y="630.80" width="1.00" height="16.80" fill="#10b878"/>
<rect x="349.00" y="630.80" width="1.00" height="16.80" fill="#14ba75"/>
<rect x="352.00" y="630.80" width="1.00" height="16.80" fill="#15ba74"/>
<rect x="354.00" y="630.80" width="2.00" height="16.80" fill="#108eb3"/>
<rect x="359.00" y="630.80" width="2.00" height="16.80" fill="#2ac562"/>
<rect x="365.00" y="630.80" width="1.00" height="16.80" fill="#23c268"/>
<rect x="369.00" y="630.80" width="1.00" height="16.80" fill="#109e9c"/>
<rect x="371.00" y="630.80" width="2.00" height="16.80" fill="#109e9b"/>
<rect x="374.00" y="630.80" width="3.00" height="16.80" fill="#23c268"/>
<rect x="377.00" y="630.80" width="3.00" height="16.80" fill="#10b181"/>
<rect x="380.00" y="630.80" width="1.00" height="16.80" fill="#10b57c"/>
<rect x="383.00" y="630.80" width="2.00" height="16.80" fill="#0f8db6"/>
<rect x="389.00" y="630.80" width="1.00" height="16.80" fill="#10b779"/>
<rect x="408.00" y="630.80" width="2.00" height="16.80" fill="#10aa8b"/>
<rect x="414.00" y="630.80" width="1.00" height="16.80" fill="#13b976"/>
<rect x="416.00" y="630.80" width="2.00" height="16.80" fill="#0f8db6"/>
<rect x="426.00" y="630.80" width="2.00" height="16.80" fill="#0f8eb3"/>
<rect x="431.00" y="630.80" width="3.00" height="16.80" fill="#27c365"/>
<rect x="434.00" y="630.80" width="2.00" height="16.80" fill="#1ebf6c"/>
<rect x="438.00" y="630.80" width="1.00" height="16.80" fill="#12b977"/>
<rect x="444.00" y="630.80" width="1.00" height="16.80" fill="#12b977"/>
<rect x="447.00" y="630.80" width="3.00" height="16.80" fill="#10ae85"/>
<rect x="456.00" y="630.80" width="3.00" height="16.80" fill="#10b67b"/>
<rect x="463.00" y="630.80" width="1.00" height="16.80" fill="#10b57c"/>
<rect x="466.00" y="630.80" width="2.00" height="16.80" fill="#10b47d"/>
<rect x="478.00" y="630.80" width="3.00" height="16.80" fill="#10aa8a"/>
<rect x="483.00" y="630.80" width="1.00" height="16.80" fill="#1ebf6c"/>
<rect x="488.00" y="630.80" width="3.00" height="16.80" fill="#10ac88"/>
<rect x="492.00" y="630.80" width="1.00" height="16.80" fill="#12b976"/>
<rect x="496.00" y="630.80" width="1.00" height="16.80" fill="#1abd70"/>
<rect x="498.00" y="630.80" width="2.00" height="16.80" fill="#10ad86"/>
<rect x="502.00" y="630.80" width="3.00" height="16.80" fill="#1099a3"/>
<rect x="505.00" y="630.80" width="1.00" height="16.80" fill="#10b083"/>
<rect x="517.00" y="630.80" width="3.00" height="16.80" fill="#10ad86"/>
<rect x="520.00" y="630.80" width="3.00" height="16.80" fill="#21c06a"/>
<rect x="524.00" y="630.80" width="1.00" height="16.80" fill="#10b77a"/>
<rect x="526.00" y="630.80" width="1.00" height="16.80" fill="#10ac88"/>
<rect x="528.00" y="630.80" width="1.00" height="16.80" fill="#109e9b"/>
<rect x="531.00" y="630.80" width="1.00" height="16.80" fill="#10b37e"/>
<rect x="540.00" y="630.80" width="2.00" height="16.80" fill="#10af84"/>
<rect x="545.00" y="630.80" width="3.00" height="16.80" fill="#1bbe6f"/>
<rect x="548.00" y="630.80" width="1.00" height="16.80" fill="#10b37e"/>
<rect x="551.00" y="630.80" width="1.00" height="16.80" fill="#27c464"/>
<rect x="553.00" y="630.80" width="1.00" height="16.80" fill="#23c268"/>
<rect x="556.00" y="630.80" width="1.00" height="16.80" fill="#1092ad"/>
<rect x="558.00" y="630.80" width="3.00" height="16.80" fill="#2cc661"/>
<rect x="561.00" y="630.80" width="2.00" height="16.80" fill="#10ac88"/>
<rect x="565.00" y="630.80" width="3.00" height="16.80" fill="#24c268"/>
<rect x="568.00" y="630.80" width="1.00" height="16.80" fill="#1dbf6d"/>
<rect x="570.00" y="630.80" width="3.00" height="16.80" fill="#1cbe6e"/>
<rect x="577.00" y="630.80" width="1.00" height="16.80" fill="#10b57c"/>
<rect x="579.00" y="630.80" width="1.00" height="16.80" fill="#23c268"/>
<rect x="581.00" y="630.80" width="1.00" height="16.80" fill="#10ae85"/>
<rect x="586.00" y="630.80" width="1.00" height="16.80" fill="#22c169"/>
<rect x="588.00" y="630.80" width="3.00" height="16.80" fill="#17bb72"/>
<rect x="596.00" y="630.80" width="2.00" height="16.80" fill="#10b67b"/>
<rect x="601.00" y="630.80" width="1.00" height="16.80" fill="#10aa8b"/>
<rect x="603.00" y="630.80" width="3.00" height="16.80" fill="#108fb1"/>
<rect x="607.00" y="630.80" width="2.00" height="16.80" fill="#10b083"/>
<rect x="615.00" y="630.80" width="3.00" height="16.80" fill="#15ba74"/>
<rect x="618.00" y="630.80" width="2.00" height="16.80" fill="#1fc06b"/>
<rect x="626.00" y="630.80" width="1.00" height="16.80" fill="#27c365"/>
<rect x="633.00" y="630.80" width="3.00" height="16.80" fill="#18bc71"/>
<rect x="636.00" y="630.80" width="2.00" height="16.80" fill="#10af83"/>
<rect x="639.00" y="630.80" width="1.00" height="16.80" fill="#1094a9"/>
<rect x="643.00" y="630.80" width="3.00" height="16.80" fill="#0f8db5"/>
<rect x="647.00" y="630.80" width="3.00" height="16.80" fill="#10b879"/>
<rect x="650.00" y="630.80" width="1.00" height="16.80" fill="#10b47d"/>
<rect x="655.00" y="630.80" width="3.00" height="16.80" fill="#1096a8"/>
<rect x="658.00" y="630.80" width="1.00" height="16.80" fill="#24c267"/>
<rect x="660.00" y="630.80" width="2.00" height="16.80" fill="#26c366"/>
<rect x="664.00" y="630.80" width="1.00" height="16.80" fill="#10aa8b"/>
<rect x="668.00" y="630.80" width="1.00" height="16.80" fill="#10b47e"/>
<rect x="678.00" y="630.80" width="3.00" height="16.80" fill="#1093ab"/>
<rect x="686.00" y="630.80" width="1.00" height="16.80" fill="#10b878"/>
<rect x="688.00" y="630.80" width="2.00" height="16.80" fill="#10b280"/>
<rect x="696.00" y="630.80" width="3.00" height="16.80" fill="#10b47d"/>
<rect x="699.00" y="630.80" width="1.00" height="16.80" fill="#2bc562"/>
<rect x="701.00" y="630.80" width="1.00" height="16.80" fill="#21c16a"/>
<rect x="707.00" y="630.80" width="2.00" height="16.80" fill="#109f99"/>
<rect x="710.00" y="630.80" width="1.00" height="16.80" fill="#10b47d"/>
<rect x="714.00" y="630.80" width="2.00" height="16.80" fill="#10b083"/>
<rect x="723.00" y="630.80" width="1.00" height="16.80" fill="#2bc562"/>
<rect x="727.00" y="630.80" width="3.00" height="16.80" fill="#1fbf6c"/>
<rect x="730.00" y="630.80" width="1.00" height="16.80" fill="#10ac87"/>
<rect x="732.00" y="630.80" width="1.00" height="16.80" fill="#2bc661"/>
<rect x="734.00" y="630.80" width="1.00" height="16.80" fill="#1097a6"/>
<rect x="742.00" y="630.80" width="1.00" height="16.80" fill="#10af84"/>
<rect x="749.00" y="630.80" width="1.00" height="16.80" fill="#1093ac"/>
<rect x="754.00" y="630.80" width="2.00" height="16.80" fill="#10ad86"/>
<rect x="763.00" y="630.80" width="1.00" height="16.80" fill="#10b47d"/>
<rect x="766.00" y="630.80" width="1.00" height="16.80" fill="#10ae85"/>
<rect x="770.00" y="630.80" width="3.00" height="16.80" fill="#15ba74"/>
<rect x="773.00" y="630.80" width="3.00" height="16.80" fill="#19bc71"/>
<rect x="779.00" y="630.80" width="1.00" height="16.80" fill="#24c267"/>
<rect x="781.00" y="630.80" width="2.00" height="16.80" fill="#10b280"/>
<rect x="784.00" y="630.80" width="1.00" height="16.80" fill="#29c563"/>
<rect x="792.00" y="630.80" width="2.00" height="16.80" fill="#20c06b"/>
<rect x="795.00" y="630.80" width="1.00" height="16.80" fill="#25c366"/>
<rect x="800.00" y="630.80" width="3.00" height="16.80" fill="#1fbf6c"/>
<rect x="803.00" y="630.80" width="1.00" height="16.80" fill="#2bc562"/>
<rect x="805.00" y="630.80" width="3.00" height="16.80" fill="#109e9b"/>
<rect x="808.00" y="630.80" width="1.00" height="16.80" fill="#1096a7"/>
<rect x="817.00" y="630.80" width="1.00" height="16.80" fill="#11b977"/>
<rect x="819.00" y="630.80" width="3.00" height="16.80" fill="#25c366"/>
<rect x="822.00" y="630.80" width="1.00" height="16.80" fill="#72dc37"/>
<rect x="824.00" y="630.80" width="3.00" height="16.80" fill="#1099a3"/>
<rect x="827.00" y="630.80" width="2.00" height="16.80" fill="#10aa8b"/>
<rect x="835.00" y="630.80" width="1.00" height="16.80" fill="#28c464"/>
<rect x="837.00" y="630.80" width="1.00" height="16.80" fill="#10ae85"/>
<rect x="839.00" y="630.80" width="3.00" height="16.80" fill="#16bb73"/>
<rect x="842.00" y="630.80" width="1.00" height="16.80" fill="#17bc72"/>
<rect x="846.00" y="630.80" width="3.00" height="16.80" fill="#24c268"/>
<rect x="849.00" y="630.80" width="3.00" height="16.80" fill="#10b47d"/>
<rect x="852.00" y="630.80" width="1.00" height="16.80" fill="#10ad87"/>
<rect x="856.00" y="630.80" width="2.00" height="16.80" fill="#22c169"/>
<rect x="863.00" y="630.80" width="2.00" height="16.80" fill="#10b47e"/>
<rect x="866.00" y="630.80" width="1.00" height="16.80" fill="#10af84"/>
<rect x="873.00" y="630.80" width="3.00" height="16.80" fill="#10b281"/>
<rect x="878.00" y="630.80" width="3.00" height="16.80" fill="#10b67b"/>
<rect x="886.00" y="630.80" width="1.00" height="16.80" fill="#10ac88"/>
<rect x="889.00" y="630.80" width="3.00" height="16.80" fill="#25c267"/>
<rect x="899.00" y="630.80" width="2.00" height="16.80" fill="#2dc660"/>
<rect x="908.00" y="630.80" width="1.00" height="16.80" fill="#10b181"/>
<rect x="910.00" y="630.80" width="1.00" height="16.80" fill="#109f9a"/>
<rect x="914.00" y="630.80" width="1.00" height="16.80" fill="#10b67b"/>
<rect x="917.00" y="630.80" width="1.00" height="16.80" fill="#20c06b"/>
<rect x="919.00" y="630.80" width="3.00" height="16.80" fill="#31c85d"/>
<rect x="922.00" y="630.80" width="3.00" height="16.80" fill="#58d644"/>
<rect x="925.00" y="630.80" width="3.00" height="16.80" fill="#4bd34b"/>
<rect x="928.00" y="630.80" width="1.00" height="16.80" fill="#10aa8b"/>
<rect x="931.00" y="630.80" width="1.00" height="16.80" fill="#1091ae"/>
<rect x="933.00" y="630.80" width="3.00" height="16.80" fill="#10b280"/>
<rect x="941.00" y="630.80" width="1.00" height="16.80" fill="#10af84"/>
<rect x="944.00" y="630.80" width="3.00" height="16.80" fill="#1bbe6f"/>
<rect x="947.00" y="630.80" width="3.00" height="16.80" fill="#26c366"/>
<rect x="950.00" y="630.80" width="1.00" height="16.80" fill="#28c464"/>
<rect x="955.00" y="630.80" width="3.00" height="16.80" fill="#1fbf6c"/>
<rect x="958.00" y="630.80" width="1.00" height="16.80" fill="#10ae86"/>
<rect x="961.00" y="630.80" width="3.00" height="16.80" fill="#11b977"/>
<rect x="966.00" y="630.80" width="2.00" height="16.80" fill="#1098a4"/>
<rect x="971.00" y="630.80" width="3.00" height="16.80" fill="#10b77a"/>
<rect x="976.00" y="630.80" width="2.00" height="16.80" fill="#17bb72"/>
<rect x="983.00" y="630.80" width="2.00" height="16.80" fill="#26c366"/>
<rect x="987.00" y="630.80" width="1.00" height="16.80" fill="#109aa2"/>
<rect x="990.00" y="630.80" width="2.00" height="16.80" fill="#28c464"/>
<rect x="995.00" y="630.80" width="3.00" height="16.80" fill="#1dbe6d"/>
<rect x="998.00" y="630.80" width="2.00" height="16.80" fill="#10b083"/>
<rect x="1003.00" y="630.80" width="3.00" height="16.80" fill="#24c267"/>
<rect x="1006.00" y="630.80" width="1.00" height="16.80" fill="#23c268"/>
<rect x="1010.00" y="630.80" width="3.00" height="16.80" fill="#26c366"/>
<rect x="1013.00" y="630.80" width="1.00" height="16.80" fill="#23c168"/>
<rect x="1015.00" y="630.80" width="1.00" height="16.80" fill="#1dbe6d"/>
<rect x="1020.00" y="630.80" width="3.00" height="16.80" fill="#25c366"/>
<rect x="1023.00" y="630.80" width="3.00" height="16.80" fill="#26c366"/>
<rect x="1026.00" y="630.80" width="3.00" height="16.80" fill="#10b878"/>
<rect x="1029.00" y="630.80" width="3.00" height="16.80" fill="#49d24b"/>
<rect x="1032.00" y="630.80" width="3.00" height="16.80" fill="#2dc760"/>
<rect x="1035.00" y="630.80" width="3.00" height="16.80" fill="#33ca5b"/>
<rect x="1039.00" y="630.80" width="1.00" height="16.80" fill="#10b67a"/>
<rect x="1044.00" y="630.80" width="3.00" height="16.80" fill="#10af84"/>
<rect x="1048.00" y="630.80" width="1.00" height="16.80" fill="#109aa1"/>
<rect x="1050.00" y="630.80" width="1.00" height="16.80" fill="#1cbe6e"/>
<rect x="1052.00" y="630.80" width="1.00" height="16.80" fill="#10b182"/>
<rect x="1057.00" y="630.80" width="3.00" height="16.80" fill="#24c267"/>
<rect x="1062.00" y="630.80" width="1.00" height="16.80" fill="#10b37f"/>
<rect x="1067.00" y="630.80" width="3.00" height="16.80" fill="#19bd70"/>
<rect x="1070.00" y="630.80" width="2.00" height="16.80" fill="#11b977"/>
<rect x="1073.00" y="630.80" width="1.00" height="16.80" fill="#10ae85"/>
<rect x="1075.00" y="630.80" width="1.00" height="16.80" fill="#1bbd6f"/>
<rect x="97.00" y="647.60" width="2.00" height="16.20" fill="#60d840"/>
<rect x="100.00" y="647.60" width="3.00" height="16.20" fill="#50d448"/>
<rect x="103.00" y="647.60" width="2.00" height="16.20" fill="#71dc38"/>
<rect x="113.00" y="647.60" width="1.00" height="16.20" fill="#37cc57"/>
<rect x="115.00" y="647.60" width="1.00" height="16.20" fill="#70dc38"/>
<rect x="119.00" y="647.60" width="1.00" height="16.20" fill="#48d24c"/>
<rect x="122.00" y="647.60" width="1.00" height="16.20" fill="#10ad87"/>
<rect x="128.00" y="647.60" width="2.00" height="16.20" fill="#31c85d"/>
<rect x="132.00" y="647.60" width="3.00" height="16.20" fill="#39cc56"/>
<rect x="136.00" y="647.60" width="2.00" height="16.20" fill="#48d24c"/>
<rect x="144.00" y="647.60" width="2.00" height="16.20" fill="#57d645"/>
<rect x="149.00" y="647.60" width="3.00" height="16.20" fill="#10b57b"/>
<rect x="152.00" y="647.60" width="3.00" height="16.20" fill="#10ae85"/>
<rect x="155.00" y="647.60" width="1.00" height="16.20" fill="#70dc38"/>
<rect x="158.00" y="647.60" width="2.00" height="16.20" fill="#64d93e"/>
<rect x="164.00" y="647.60" width="3.00" height="16.20" fill="#10b57c"/>
<rect x="167.00" y="647.60" width="2.00" height="16.20" fill="#34ca5a"/>
<rect x="170.00" y="647.60" width="2.00" height="16.20" fill="#10b47d"/>
<rect x="174.00" y="647.60" width="2.00" height="16.20" fill="#10ab89"/>
<rect x="178.00" y="647.60" width="2.00" height="16.20" fill="#3fcf51"/>
<rect x="186.00" y="647.60" width="1.00" height="16.20" fill="#58d644"/>
<rect x="188.00" y="647.60" width="3.00" height="16.20" fill="#36cb58"/>
<rect x="191.00" y="647.60" width="1.00" height="16.20" fill="#64d93e"/>
<rect x="196.00" y="647.60" width="1.00" height="16.20" fill="#66da3d"/>
<rect x="200.00" y="647.60" width="2.00" height="16.20" fill="#31c95c"/>
<rect x="205.00" y="647.60" width="2.00" height="16.20" fill="#73dd37"/>
<rect x="208.00" y="647.60" width="1.00" height="16.20" fill="#60d840"/>
<rect x="211.00" y="647.60" width="2.00" height="16.20" fill="#49d24b"/>
<rect x="214.00" y="647.60" width="1.00" height="16.20" fill="#6fdc38"/>
<rect x="216.00" y="647.60" width="1.00" height="16.20" fill="#2fc85e"/>
<rect x="219.00" y="647.60" width="2.00" height="16.20" fill="#45d14e"/>
<rect x="226.00" y="647.60" width="1.00" height="16.20" fill="#39cd56"/>
<rect x="228.00" y="647.60" width="3.00" height="16.20" fill="#5ad643"/>
<rect x="231.00" y="647.60" width="1.00" height="16.20" fill="#4cd34a"/>
<rect x="235.00" y="647.60" width="2.00" height="16.20" fill="#61d840"/>
<rect x="238.00" y="647.60" width="1.00" height="16.20" fill="#4bd34b"/>
<rect x="244.00" y="647.60" width="1.00" height="16.20" fill="#5dd742"/>
<rect x="246.00" y="647.60" width="1.00" height="16.20" fill="#4fd448"/>
<rect x="251.00" y="647.60" width="3.00" height="16.20" fill="#34ca5a"/>
<rect x="254.00" y="647.60" width="1.00" height="16.20" fill="#49d24c"/>
<rect x="260.00" y="647.60" width="1.00" height="16.20" fill="#56d545"/>
<rect x="277.00" y="647.60" width="2.00" height="16.20" fill="#52d547"/>
<rect x="280.00" y="647.60" width="3.00" height="16.20" fill="#3dce53"/>
<rect x="287.00" y="647.60" width="1.00" height="16.20" fill="#50d448"/>
<rect x="292.00" y="647.60" width="3.00" height="16.20" fill="#10b280"/>
<rect x="295.00" y="647.60" width="3.00" height="16.20" fill="#6edc39"/>
<rect x="298.00" y="647.60" width="1.00" height="16.20" fill="#3acd55"/>
<rect x="300.00" y="647.60" width="2.00" height="16.20" fill="#46d24d"/>
<rect x="316.00" y="647.60" width="3.00" height="16.20" fill="#2ec75f"/>
<rect x="321.00" y="647.60" width="3.00" height="16.20" fill="#10a393"/>
<rect x="325.00" y="647.60" width="3.00" height="16.20" fill="#10b37e"/>
<rect x="328.00" y="647.60" width="2.00" height="16.20" fill="#50d448"/>
<rect x="333.00" y="647.60" width="1.00" height="16.20" fill="#4ed449"/>
<rect x="339.00" y="647.60" width="2.00" height="16.20" fill="#60d840"/>
<rect x="346.00" y="647.60" width="1.00" height="16.20" fill="#40d050"/>
<rect x="355.00" y="647.60" width="1.00" height="16.20" fill="#51d448"/>
<rect x="365.00" y="647.60" width="1.00" height="16.20" fill="#6ddb3a"/>
<rect x="367.00" y="647.60" width="1.00" height="16.20" fill="#4fd449"/>
<rect x="372.00" y="647.60" width="2.00" height="16.20" fill="#14ba75"/>
<rect x="375.00" y="647.60" width="2.00" height="16.20" fill="#a2e416"/>
<rect x="378.00" y="647.60" width="3.00" height="16.20" fill="#a7e513"/>
<rect x="381.00" y="647.60" width="1.00" height="16.20" fill="#33ca5b"/>
<rect x="383.00" y="647.60" width="1.00" height="16.20" fill="#63d93f"/>
<rect x="388.00" y="647.60" width="3.00" height="16.20" fill="#10a493"/>
<rect x="391.00" y="647.60" width="1.00" height="16.20" fill="#3fcf51"/>
<rect x="393.00" y="647.60" width="1.00" height="16.20" fill="#3bce54"/>
<rect x="397.00" y="647.60" width="2.00" height="16.20" fill="#6cdb3a"/>
<rect x="401.00" y="647.60" width="1.00" height="16.20" fill="#68da3c"/>
<rect x="409.00" y="647.60" width="1.00" height="16.20" fill="#65d93e"/>
<rect x="415.00" y="647.60" width="3.00" height="16.20" fill="#2ec75f"/>
<rect x="433.00" y="647.60" width="1.00" height="16.20" fill="#10a68f"/>
<rect x="442.00" y="647.60" width="1.00" height="16.20" fill="#48d24c"/>
<rect x="445.00" y="647.60" width="1.00" height="16.20" fill="#4cd34a"/>
<rect x="447.00" y="647.60" width="3.00" height="16.20" fill="#3acd55"/>
<rect x="458.00" y="647.60" width="1.00" height="16.20" fill="#10a88d"/>
<rect x="462.00" y="647.60" width="2.00" height="16.20" fill="#34ca5a"/>
<rect x="471.00" y="647.60" width="1.00" height="16.20" fill="#10af83"/>
<rect x="477.00" y="647.60" width="2.00" height="16.20" fill="#41d050"/>
<rect x="480.00" y="647.60" width="1.00" height="16.20" fill="#69da3c"/>
<rect x="483.00" y="647.60" width="1.00" height="16.20" fill="#3dce53"/>
<rect x="488.00" y="647.60" width="3.00" height="16.20" fill="#54d546"/>
<rect x="502.00" y="647.60" width="2.00" height="16.20" fill="#69da3b"/>
<rect x="505.00" y="647.60" width="1.00" height="16.20" fill="#56d645"/>
<rect x="507.00" y="647.60" width="2.00" height="16.20" fill="#32c95c"/>
<rect x="517.00" y="647.60" width="1.00" height="16.20" fill="#10a78f"/>
<rect x="520.00" y="647.60" width="3.00" height="16.20" fill="#33ca5b"/>
<rect x="524.00" y="647.60" width="1.00" height="16.20" fill="#4dd349"/>
<rect x="529.00" y="647.60" width="3.00" height="16.20" fill="#6ddb3a"/>
<rect x="534.00" y="647.60" width="3.00" height="16.20" fill="#70dc38"/>
<rect x="537.00" y="647.60" width="1.00" height="16.20" fill="#55d545"/>
<rect x="540.00" y="647.60" width="2.00" height="16.20" fill="#59d644"/>
<rect x="545.00" y="647.60" width="3.00" height="16.20" fill="#6ddb3a"/>
<rect x="551.00" y="647.60" width="3.00" height="16.20" fill="#43d14f"/>
<rect x="558.00" y="647.60" width="1.00" height="16.20" fill="#13b976"/>
<rect x="561.00" y="647.60" width="1.00" height="16.20" fill="#44d14e"/>
<rect x="565.00" y="647.60" width="1.00" height="16.20" fill="#10a592"/>
<rect x="568.00" y="647.60" width="1.00" height="16.20" fill="#37cc57"/>
<rect x="571.00" y="647.60" width="2.00" height="16.20" fill="#68da3c"/>
<rect x="578.00" y="647.60" width="2.00" height="16.20" fill="#2ec75f"/>
<rect x="581.00" y="647.60" width="1.00" height="16.20" fill="#10b779"/>
<rect x="584.00" y="647.60" width="1.00" height="16.20" fill="#45d14e"/>
<rect x="587.00" y="647.60" width="1.00" height="16.20" fill="#55d546"/>
<rect x="589.00" y="647.60" width="1.00" height="16.20" fill="#64d93e"/>
<rect x="591.00" y="647.60" width="2.00" height="16.20" fill="#4cd34a"/>
<rect x="594.00" y="647.60" width="3.00" height="16.20" fill="#6fdc38"/>
<rect x="600.00" y="647.60" width="1.00" height="16.20" fill="#5ed741"/>
<rect x="605.00" y="647.60" width="1.00" height="16.20" fill="#10b67b"/>
<rect x="607.00" y="647.60" width="2.00" height="16.20" fill="#2dc760"/>
<rect x="619.00" y="647.60" width="3.00" height="16.20" fill="#47d24d"/>
<rect x="626.00" y="647.60" width="1.00" height="16.20" fill="#43d14e"/>
<rect x="635.00" y="647.60" width="1.00" height="16.20" fill="#36cb58"/>
<rect x="639.00" y="647.60" width="1.00" height="16.20" fill="#3bce54"/>
<rect x="644.00" y="647.60" width="1.00" height="16.20" fill="#42d14f"/>
<rect x="647.00" y="647.60" width="2.00" height="16.20" fill="#35ca59"/>
<rect x="650.00" y="647.60" width="1.00" height="16.20" fill="#2fc85e"/>
<rect x="656.00" y="647.60" width="3.00" height="16.20" fill="#43d14e"/>
<rect x="661.00" y="647.60" width="1.00" height="16.20" fill="#10a592"/>
<rect x="668.00" y="647.60" width="3.00" height="16.20" fill="#35ca59"/>
<rect x="672.00" y="647.60" width="2.00" height="16.20" fill="#4fd449"/>
<rect x="675.00" y="647.60" width="3.00" height="16.20" fill="#73dd36"/>
<rect x="678.00" y="647.60" width="3.00" height="16.20" fill="#45d14e"/>
<rect x="686.00" y="647.60" width="1.00" height="16.20" fill="#6cdb3a"/>
<rect x="688.00" y="647.60" width="2.00" height="16.20" fill="#33c95b"/>
<rect x="694.00" y="647.60" width="3.00" height="16.20" fill="#61d840"/>
<rect x="697.00" y="647.60" width="1.00" height="16.20" fill="#71dc38"/>
<rect x="701.00" y="647.60" width="2.00" height="16.20" fill="#56d645"/>
<rect x="705.00" y="647.60" width="1.00" height="16.20" fill="#4cd34a"/>
<rect x="707.00" y="647.60" width="2.00" height="16.20" fill="#4dd34a"/>
<rect x="710.00" y="647.60" width="3.00" height="16.20" fill="#72dd37"/>
<rect x="713.00" y="647.60" width="1.00" height="16.20" fill="#48d24c"/>
<rect x="726.00" y="647.60" width="3.00" height="16.20" fill="#71dc38"/>
<rect x="729.00" y="647.60" width="1.00" height="16.20" fill="#61d840"/>
<rect x="735.00" y="647.60" width="1.00" height="16.20" fill="#6adb3b"/>
<rect x="742.00" y="647.60" width="2.00" height="16.20" fill="#51d448"/>
<rect x="749.00" y="647.60" width="1.00" height="16.20" fill="#30c85d"/>
<rect x="754.00" y="647.60" width="3.00" height="16.20" fill="#44d14e"/>
<rect x="757.00" y="647.60" width="1.00" height="16.20" fill="#30c85d"/>
<rect x="759.00" y="647.60" width="2.00" height="16.20" fill="#3dce53"/>
<rect x="770.00" y="647.60" width="3.00" height="16.20" fill="#4ad24b"/>
<rect x="773.00" y="647.60" width="3.00" height="16.20" fill="#10a691"/>
<rect x="779.00" y="647.60" width="1.00" height="16.20" fill="#36cb59"/>
<rect x="786.00" y="647.60" width="1.00" height="16.20" fill="#3fcf51"/>
<rect x="795.00" y="647.60" width="1.00" height="16.20" fill="#3ecf52"/>
<rect x="800.00" y="647.60" width="1.00" height="16.20" fill="#43d14e"/>
<rect x="803.00" y="647.60" width="1.00" height="16.20" fill="#69da3c"/>
<rect x="808.00" y="647.60" width="2.00" height="16.20" fill="#68da3c"/>
<rect x="819.00" y="647.60" width="3.00" height="16.20" fill="#80e030"/>
<rect x="822.00" y="647.60" width="3.00" height="16.20" fill="#b3e609"/>
<rect x="825.00" y="647.60" width="1.00" height="16.20" fill="#8be128"/>
<rect x="828.00" y="647.60" width="1.00" height="16.20" fill="#3fcf51"/>
<rect x="837.00" y="647.60" width="1.00" height="16.20" fill="#10a295"/>
<rect x="840.00" y="647.60" width="3.00" height="16.20" fill="#10b37f"/>
<rect x="850.00" y="647.60" width="3.00" height="16.20" fill="#34ca5a"/>
<rect x="860.00" y="647.60" width="3.00" height="16.20" fill="#64d93e"/>
<rect x="863.00" y="647.60" width="3.00" height="16.20" fill="#10a295"/>
<rect x="869.00" y="647.60" width="1.00" height="16.20" fill="#4ed349"/>
<rect x="872.00" y="647.60" width="3.00" height="16.20" fill="#10b67a"/>
<rect x="878.00" y="647.60" width="3.00" height="16.20" fill="#36cb58"/>
<rect x="886.00" y="647.60" width="1.00" height="16.20" fill="#43d14e"/>
<rect x="889.00" y="647.60" width="3.00" height="16.20" fill="#10af83"/>
<rect x="902.00" y="647.60" width="1.00" height="16.20" fill="#5cd742"/>
<rect x="908.00" y="647.60" width="3.00" height="16.20" fill="#59d644"/>
<rect x="915.00" y="647.60" width="3.00" height="16.20" fill="#5ad643"/>
<rect x="920.00" y="647.60" width="1.00" height="16.20" fill="#a4e415"/>
<rect x="922.00" y="647.60" width="3.00" height="16.20" fill="#a9e511"/>
<rect x="925.00" y="647.60" width="3.00" height="16.20" fill="#88e12a"/>
<rect x="931.00" y="647.60" width="1.00" height="16.20" fill="#37cc57"/>
<rect x="933.00" y="647.60" width="1.00" height="16.20" fill="#38cc57"/>
<rect x="935.00" y="647.60" width="2.00" height="16.20" fill="#72dc37"/>
<rect x="941.00" y="647.60" width="1.00" height="16.20" fill="#31c95c"/>
<rect x="943.00" y="647.60" width="3.00" height="16.20" fill="#96e31f"/>
<rect x="946.00" y="647.60" width="3.00" height="16.20" fill="#c5e300"/>
<rect x="949.00" y="647.60" width="2.00" height="16.20" fill="#9ce31b"/>
<rect x="954.00" y="647.60" width="2.00" height="16.20" fill="#33ca5b"/>
<rect x="958.00" y="647.60" width="1.00" height="16.20" fill="#3ecf52"/>
<rect x="963.00" y="647.60" width="2.00" height="16.20" fill="#2ec75f"/>
<rect x="966.00" y="647.60" width="3.00" height="16.20" fill="#31c95c"/>
<rect x="969.00" y="647.60" width="1.00" height="16.20" fill="#3fd050"/>
<rect x="983.00" y="647.60" width="2.00" height="16.20" fill="#4bd34b"/>
<rect x="989.00" y="647.60" width="1.00" height="16.20" fill="#3bcd54"/>
<rect x="991.00" y="647.60" width="1.00" height="16.20" fill="#10a592"/>
<rect x="1003.00" y="647.60" width="3.00" height="16.20" fill="#4bd34a"/>
<rect x="1012.00" y="647.60" width="2.00" height="16.20" fill="#4dd349"/>
<rect x="1015.00" y="647.60" width="1.00" height="16.20" fill="#36cb58"/>
<rect x="1019.00" y="647.60" width="3.00" height="16.20" fill="#33c95b"/>
<rect x="1022.00" y="647.60" width="3.00" height="16.20" fill="#31c85d"/>
<rect x="1025.00" y="647.60" width="3.00" height="16.20" fill="#10b083"/>
<rect x="1028.00" y="647.60" width="3.00" height="16.20" fill="#91e223"/>
<rect x="1031.00" y="647.60" width="3.00" height="16.20" fill="#a6e513"/>
<rect x="1034.00" y="647.60" width="3.00" height="16.20" fill="#a7e513"/>
<rect x="1037.00" y="647.60" width="3.00" height="16.20" fill="#85e12c"/>
<rect x="1044.00" y="647.60" width="3.00" height="16.20" fill="#44d14e"/>
<rect x="1050.00" y="647.60" width="1.00" height="16.20" fill="#47d24d"/>
<rect x="1052.00" y="647.60" width="3.00" height="16.20" fill="#4fd449"/>
<rect x="1057.00" y="647.60" width="3.00" height="16.20" fill="#3ecf51"/>
<rect x="1060.00" y="647.60" width="1.00" height="16.20" fill="#44d14e"/>
<rect x="1062.00" y="647.60" width="1.00" height="16.20" fill="#37cb58"/>
<rect x="1068.00" y="647.60" width="3.00" height="16.20" fill="#69da3b"/>
<rect x="1074.00" y="647.60" width="2.00" height="16.20" fill="#57d645"/>
<rect x="1079.00" y="647.60" width="1.00" height="16.20" fill="#53d546"/>
<rect x="98.00" y="663.80" width="1.00" height="12.80" fill="#b2e60b"/>
<rect x="100.00" y="663.80" width="1.00" height="12.80" fill="#a9e511"/>
<rect x="103.00" y="663.80" width="3.00" height="12.80" fill="#a5e514"/>
<rect x="106.00" y="663.80" width="1.00" height="12.80" fill="#9be31c"/>
<rect x="113.00" y="663.80" width="1.00" height="12.80" fill="#aee60d"/>
<rect x="116.00" y="663.80" width="1.00" height="12.80" fill="#2ec75f"/>
<rect x="129.00" y="663.80" width="1.00" height="12.80" fill="#89e129"/>
<rect x="134.00" y="663.80" width="1.00" height="12.80" fill="#89e129"/>
<rect x="144.00" y="663.80" width="2.00" height="12.80" fill="#90e224"/>
<rect x="147.00" y="663.80" width="3.00" height="12.80" fill="#a8e512"/>
<rect x="154.00" y="663.80" width="3.00" height="12.80" fill="#afe60d"/>
<rect x="166.00" y="663.80" width="1.00" height="12.80" fill="#80e030"/>
<rect x="186.00" y="663.80" width="3.00" height="12.80" fill="#94e321"/>
<rect x="189.00" y="663.80" width="3.00" height="12.80" fill="#a1e417"/>
<rect x="195.00" y="663.80" width="3.00" height="12.80" fill="#2ac563"/>
<rect x="198.00" y="663.80" width="2.00" height="12.80" fill="#89e129"/>
<rect x="208.00" y="663.80" width="1.00" height="12.80" fill="#a4e415"/>
<rect x="211.00" y="663.80" width="3.00" height="12.80" fill="#61d840"/>
<rect x="214.00" y="663.80" width="1.00" height="12.80" fill="#98e31e"/>
<rect x="219.00" y="663.80" width="3.00" height="12.80" fill="#42d14f"/>
<rect x="228.00" y="663.80" width="3.00" height="12.80" fill="#97e31e"/>
<rect x="238.00" y="663.80" width="1.00" height="12.80" fill="#a1e418"/>
<rect x="244.00" y="663.80" width="1.00" height="12.80" fill="#82e02e"/>
<rect x="251.00" y="663.80" width="3.00" height="12.80" fill="#8be128"/>
<rect x="254.00" y="663.80" width="1.00" height="12.80" fill="#a9e511"/>
<rect x="263.00" y="663.80" width="1.00" height="12.80" fill="#98e31e"/>
<rect x="277.00" y="663.80" width="3.00" height="12.80" fill="#8ce227"/>
<rect x="285.00" y="663.80" width="3.00" height="12.80" fill="#a3e416"/>
<rect x="291.00" y="663.80" width="3.00" height="12.80" fill="#30c85d"/>
<rect x="294.00" y="663.80" width="1.00" height="12.80" fill="#85e12c"/>
<rect x="297.00" y="663.80" width="2.00" height="12.80" fill="#a6e514"/>
<rect x="300.00" y="663.80" width="1.00" height="12.80" fill="#b1e60c"/>
<rect x="316.00" y="663.80" width="2.00" height="12.80" fill="#25c267"/>
<rect x="320.00" y="663.80" width="1.00" height="12.80" fill="#81e02f"/>
<rect x="322.00" y="663.80" width="2.00" height="12.80" fill="#80e030"/>
<rect x="327.00" y="663.80" width="1.00" height="12.80" fill="#97e31f"/>
<rect x="340.00" y="663.80" width="1.00" height="12.80" fill="#93e222"/>
<rect x="347.00" y="663.80" width="3.00" height="12.80" fill="#52d447"/>
<rect x="352.00" y="663.80" width="1.00" height="12.80" fill="#9ce31b"/>
<rect x="354.00" y="663.80" width="2.00" height="12.80" fill="#89e129"/>
<rect x="369.00" y="663.80" width="1.00" height="12.80" fill="#a7e513"/>
<rect x="372.00" y="663.80" width="3.00" height="12.80" fill="#cddb00"/>
<rect x="375.00" y="663.80" width="2.00" height="12.80" fill="#ddb500"/>
<rect x="379.00" y="663.80" width="3.00" height="12.80" fill="#dac800"/>
<rect x="384.00" y="663.80" width="1.00" height="12.80" fill="#9ee419"/>
<rect x="388.00" y="663.80" width="2.00" height="12.80" fill="#aee60d"/>
<rect x="393.00" y="663.80" width="1.00" height="12.80" fill="#a1e417"/>
<rect x="397.00" y="663.80" width="1.00" height="12.80" fill="#ace60f"/>
<rect x="409.00" y="663.80" width="1.00" height="12.80" fill="#34ca5a"/>
<rect x="416.00" y="663.80" width="1.00" height="12.80" fill="#96e320"/>
<rect x="426.00" y="663.80" width="1.00" height="12.80" fill="#8ae128"/>
<rect x="432.00" y="663.80" width="2.00" height="12.80" fill="#afe60d"/>
<rect x="441.00" y="663.80" width="2.00" height="12.80" fill="#87e12a"/>
<rect x="444.00" y="663.80" width="2.00" height="12.80" fill="#9de41a"/>
<rect x="448.00" y="663.80" width="1.00" height="12.80" fill="#93e222"/>
<rect x="452.00" y="663.80" width="1.00" height="12.80" fill="#a7e513"/>
<rect x="456.00" y="663.80" width="3.00" height="12.80" fill="#a3e416"/>
<rect x="462.00" y="663.80" width="2.00" height="12.80" fill="#99e31e"/>
<rect x="482.00" y="663.80" width="1.00" height="12.80" fill="#a3e416"/>
<rect x="485.00" y="663.80" width="2.00" height="12.80" fill="#b0e60c"/>
<rect x="490.00" y="663.80" width="1.00" height="12.80" fill="#98e31e"/>
<rect x="502.00" y="663.80" width="2.00" height="12.80" fill="#a9e511"/>
<rect x="507.00" y="663.80" width="1.00" height="12.80" fill="#8ce127"/>
<rect x="509.00" y="663.80" width="2.00" height="12.80" fill="#82e02f"/>
<rect x="541.00" y="663.80" width="1.00" height="12.80" fill="#b0e60c"/>
<rect x="556.00" y="663.80" width="1.00" height="12.80" fill="#88e12a"/>
<rect x="558.00" y="663.80" width="3.00" height="12.80" fill="#a1e417"/>
<rect x="562.00" y="663.80" width="1.00" height="12.80" fill="#55d545"/>
<rect x="565.00" y="663.80" width="3.00" height="12.80" fill="#b1e60b"/>
<rect x="568.00" y="663.80" width="1.00" height="12.80" fill="#b2e60a"/>
<rect x="570.00" y="663.80" width="2.00" height="12.80" fill="#2ac562"/>
<rect x="578.00" y="663.80" width="2.00" height="12.80" fill="#90e224"/>
<rect x="587.00" y="663.80" width="2.00" height="12.80" fill="#86e12b"/>
<rect x="596.00" y="663.80" width="1.00" height="12.80" fill="#9fe419"/>
<rect x="607.00" y="663.80" width="2.00" height="12.80" fill="#94e321"/>
<rect x="617.00" y="663.80" width="3.00" height="12.80" fill="#8de226"/>
<rect x="620.00" y="663.80" width="1.00" height="12.80" fill="#8de226"/>
<rect x="626.00" y="663.80" width="3.00" height="12.80" fill="#85e12c"/>
<rect x="630.00" y="663.80" width="2.00" height="12.80" fill="#91e223"/>
<rect x="644.00" y="663.80" width="1.00" height="12.80" fill="#9de41a"/>
<rect x="646.00" y="663.80" width="1.00" height="12.80" fill="#a1e417"/>
<rect x="648.00" y="663.80" width="3.00" height="12.80" fill="#a5e514"/>
<rect x="652.00" y="663.80" width="1.00" height="12.80" fill="#81e02f"/>
<rect x="655.00" y="663.80" width="1.00" height="12.80" fill="#9be31c"/>
<rect x="660.00" y="663.80" width="2.00" height="12.80" fill="#8fe225"/>
<rect x="668.00" y="663.80" width="1.00" height="12.80" fill="#2fc85e"/>
<rect x="673.00" y="663.80" width="1.00" height="12.80" fill="#84e02d"/>
<rect x="675.00" y="663.80" width="1.00" height="12.80" fill="#37cb58"/>
<rect x="688.00" y="663.80" width="2.00" height="12.80" fill="#8ce227"/>
<rect x="698.00" y="663.80" width="2.00" height="12.80" fill="#95e320"/>
<rect x="710.00" y="663.80" width="3.00" height="12.80" fill="#9ee41a"/>
<rect x="727.00" y="663.80" width="3.00" height="12.80" fill="#85e12c"/>
<rect x="730.00" y="663.80" width="1.00" height="12.80" fill="#9ce41b"/>
<rect x="732.00" y="663.80" width="1.00" height="12.80" fill="#89e129"/>
<rect x="735.00" y="663.80" width="1.00" height="12.80" fill="#8de226"/>
<rect x="737.00" y="663.80" width="1.00" height="12.80" fill="#8ee225"/>
<rect x="742.00" y="663.80" width="2.00" height="12.80" fill="#a7e512"/>
<rect x="749.00" y="663.80" width="1.00" height="12.80" fill="#55d545"/>
<rect x="754.00" y="663.80" width="1.00" height="12.80" fill="#5dd741"/>
<rect x="756.00" y="663.80" width="2.00" height="12.80" fill="#94e321"/>
<rect x="759.00" y="663.80" width="1.00" height="12.80" fill="#8fe225"/>
<rect x="764.00" y="663.80" width="3.00" height="12.80" fill="#85e12d"/>
<rect x="770.00" y="663.80" width="3.00" height="12.80" fill="#95e320"/>
<rect x="773.00" y="663.80" width="3.00" height="12.80" fill="#3acd55"/>
<rect x="781.00" y="663.80" width="2.00" height="12.80" fill="#82e02f"/>
<rect x="786.00" y="663.80" width="1.00" height="12.80" fill="#3ecf52"/>
<rect x="792.00" y="663.80" width="2.00" height="12.80" fill="#60d840"/>
<rect x="810.00" y="663.80" width="2.00" height="12.80" fill="#8de226"/>
<rect x="817.00" y="663.80" width="1.00" height="12.80" fill="#a8e512"/>
<rect x="819.00" y="663.80" width="3.00" height="12.80" fill="#cbdd00"/>
<rect x="822.00" y="663.80" width="1.00" height="12.80" fill="#cfd900"/>
<rect x="824.00" y="663.80" width="2.00" height="12.80" fill="#cfd900"/>
<rect x="836.00" y="663.80" width="2.00" height="12.80" fill="#b3e60a"/>
<rect x="840.00" y="663.80" width="1.00" height="12.80" fill="#88e12a"/>
<rect x="842.00" y="663.80" width="1.00" height="12.80" fill="#90e224"/>
<rect x="850.00" y="663.80" width="3.00" height="12.80" fill="#a5e514"/>
<rect x="857.00" y="663.80" width="1.00" height="12.80" fill="#90e224"/>
<rect x="862.00" y="663.80" width="1.00" height="12.80" fill="#34ca5a"/>
<rect x="865.00" y="663.80" width="1.00" height="12.80" fill="#abe510"/>
<rect x="869.00" y="663.80" width="2.00" height="12.80" fill="#a0e418"/>
<rect x="872.00" y="663.80" width="1.00" height="12.80" fill="#87e12b"/>
<rect x="887.00" y="663.80" width="1.00" height="12.80" fill="#b0e60c"/>
<rect x="889.00" y="663.80" width="1.00" height="12.80" fill="#51d447"/>
<rect x="898.00" y="663.80" width="1.00" height="12.80" fill="#b1e60b"/>
<rect x="900.00" y="663.80" width="1.00" height="12.80" fill="#a0e418"/>
<rect x="908.00" y="663.80" width="2.00" height="12.80" fill="#89e12a"/>
<rect x="914.00" y="663.80" width="1.00" height="12.80" fill="#60d840"/>
<rect x="917.00" y="663.80" width="3.00" height="12.80" fill="#b2e60a"/>
<rect x="920.00" y="663.80" width="3.00" height="12.80" fill="#d3d500"/>
<rect x="923.00" y="663.80" width="1.00" height="12.80" fill="#e2a500"/>
<rect x="925.00" y="663.80" width="3.00" height="12.80" fill="#d6d200"/>
<rect x="933.00" y="663.80" width="1.00" height="12.80" fill="#34ca5a"/>
<rect x="935.00" y="663.80" width="2.00" height="12.80" fill="#a2e417"/>
<rect x="942.00" y="663.80" width="3.00" height="12.80" fill="#67da3d"/>
<rect x="945.00" y="663.80" width="1.00" height="12.80" fill="#cddb00"/>
<rect x="947.00" y="663.80" width="3.00" height="12.80" fill="#dfac00"/>
<rect x="950.00" y="663.80" width="1.00" height="12.80" fill="#c3e500"/>
<rect x="955.00" y="663.80" width="2.00" height="12.80" fill="#b1e60c"/>
<rect x="967.00" y="663.80" width="2.00" height="12.80" fill="#8de226"/>
<rect x="973.00" y="663.80" width="2.00" height="12.80" fill="#88e12a"/>
<rect x="976.00" y="663.80" width="1.00" height="12.80" fill="#95e320"/>
<rect x="990.00" y="663.80" width="2.00" height="12.80" fill="#b2e60a"/>
<rect x="996.00" y="663.80" width="1.00" height="12.80" fill="#9ae31d"/>
<rect x="999.00" y="663.80" width="1.00" height="12.80" fill="#a5e514"/>
<rect x="1003.00" y="663.80" width="3.00" height="12.80" fill="#a0e418"/>
<rect x="1015.00" y="663.80" width="1.00" height="12.80" fill="#4ed349"/>
<rect x="1020.00" y="663.80" width="3.00" height="12.80" fill="#84e12d"/>
<rect x="1023.00" y="663.80" width="3.00" height="12.80" fill="#a6e514"/>
<rect x="1026.00" y="663.80" width="3.00" height="12.80" fill="#8de226"/>
<rect x="1029.00" y="663.80" width="3.00" height="12.80" fill="#d8d000"/>
<rect x="1032.00" y="663.80" width="3.00" height="12.80" fill="#f28e00"/>
<rect x="1035.00" y="663.80" width="3.00" height="12.80" fill="#97e31f"/>
<rect x="1038.00" y="663.80" width="2.00" height="12.80" fill="#a9e511"/>
<rect x="1052.00" y="663.80" width="1.00" height="12.80" fill="#85e12c"/>
<rect x="1062.00" y="663.80" width="1.00" height="12.80" fill="#b2e60a"/>
<rect x="1069.00" y="663.80" width="1.00" height="12.80" fill="#82e02f"/>
<rect x="1071.00" y="663.80" width="3.00" height="12.80" fill="#aee60d"/>
<rect x="96.00" y="676.60" width="3.00" height="14.00" fill="#c0e800"/>
<rect x="100.00" y="676.60" width="1.00" height="14.00" fill="#c8e000"/>
<rect x="103.00" y="676.60" width="3.00" height="14.00" fill="#c5e300"/>
<rect x="113.00" y="676.60" width="1.00" height="14.00" fill="#88e12a"/>
<rect x="119.00" y="676.60" width="1.00" height="14.00" fill="#8fe224"/>
<rect x="129.00" y="676.60" width="1.00" height="14.00" fill="#b5e708"/>
<rect x="132.00" y="676.60" width="2.00" height="14.00" fill="#cfd900"/>
<rect x="148.00" y="676.60" width="3.00" height="14.00" fill="#c5e300"/>
<rect x="151.00" y="676.60" width="2.00" height="14.00" fill="#bae705"/>
<rect x="159.00" y="676.60" width="1.00" height="14.00" fill="#cddb00"/>
<rect x="164.00" y="676.60" width="1.00" height="14.00" fill="#d4d400"/>
<rect x="170.00" y="676.60" width="1.00" height="14.00" fill="#d4d400"/>
<rect x="175.00" y="676.60" width="2.00" height="14.00" fill="#c8e000"/>
<rect x="189.00" y="676.60" width="2.00" height="14.00" fill="#b8e706"/>
<rect x="195.00" y="676.60" width="1.00" height="14.00" fill="#d3d500"/>
<rect x="198.00" y="676.60" width="1.00" height="14.00" fill="#c5e300"/>
<rect x="200.00" y="676.60" width="2.00" height="14.00" fill="#d2d600"/>
<rect x="205.00" y="676.60" width="1.00" height="14.00" fill="#d5d300"/>
<rect x="208.00" y="676.60" width="1.00" height="14.00" fill="#c0e800"/>
<rect x="212.00" y="676.60" width="1.00" height="14.00" fill="#d2d600"/>
<rect x="219.00" y="676.60" width="1.00" height="14.00" fill="#cade00"/>
<rect x="226.00" y="676.60" width="1.00" height="14.00" fill="#cbdd00"/>
<rect x="229.00" y="676.60" width="1.00" height="14.00" fill="#bae705"/>
<rect x="246.00" y="676.60" width="2.00" height="14.00" fill="#d0d800"/>
<rect x="249.00" y="676.60" width="1.00" height="14.00" fill="#c5e300"/>
<rect x="251.00" y="676.60" width="3.00" height="14.00" fill="#cbdd00"/>
<rect x="254.00" y="676.60" width="1.00" height="14.00" fill="#cfd900"/>
<rect x="260.00" y="676.60" width="1.00" height="14.00" fill="#7adf33"/>
<rect x="277.00" y="676.60" width="2.00" height="14.00" fill="#cfd900"/>
<rect x="282.00" y="676.60" width="1.00" height="14.00" fill="#99e31d"/>
<rect x="286.00" y="676.60" width="1.00" height="14.00" fill="#d1d700"/>
<rect x="292.00" y="676.60" width="3.00" height="14.00" fill="#c1e700"/>
<rect x="295.00" y="676.60" width="2.00" height="14.00" fill="#c6e200"/>
<rect x="300.00" y="676.60" width="1.00" height="14.00" fill="#c7e100"/>
<rect x="309.00" y="676.60" width="1.00" height="14.00" fill="#ccdc00"/>
<rect x="314.00" y="676.60" width="1.00" height="14.00" fill="#d5d300"/>
<rect x="316.00" y="676.60" width="3.00" height="14.00" fill="#b6e707"/>
<rect x="319.00" y="676.60" width="2.00" height="14.00" fill="#d0d800"/>
<rect x="322.00" y="676.60" width="1.00" height="14.00" fill="#d3d500"/>
<rect x="327.00" y="676.60" width="2.00" height="14.00" fill="#c0e800"/>
<rect x="347.00" y="676.60" width="1.00" height="14.00" fill="#76de35"/>
<rect x="349.00" y="676.60" width="1.00" height="14.00" fill="#d3d500"/>
<rect x="352.00" y="676.60" width="1.00" height="14.00" fill="#d5d300"/>
<rect x="354.00" y="676.60" width="1.00" height="14.00" fill="#bee802"/>
<rect x="364.00" y="676.60" width="2.00" height="14.00" fill="#b7e707"/>
<rect x="371.00" y="676.60" width="3.00" height="14.00" fill="#bce703"/>
<rect x="374.00" y="676.60" width="3.00" height="14.00" fill="#f88700"/>
<rect x="377.00" y="676.60" width="3.00" height="14.00" fill="#ff7500"/>
<rect x="380.00" y="676.60" width="1.00" height="14.00" fill="#deb200"/>
<rect x="383.00" y="676.60" width="1.00" height="14.00" fill="#b4e609"/>
<rect x="388.00" y="676.60" width="1.00" height="14.00" fill="#b4e609"/>
<rect x="393.00" y="676.60" width="1.00" height="14.00" fill="#d4d400"/>
<rect x="397.00" y="676.60" width="1.00" height="14.00" fill="#ceda00"/>
<rect x="416.00" y="676.60" width="1.00" height="14.00" fill="#b6e707"/>
<rect x="426.00" y="676.60" width="1.00" height="14.00" fill="#bce703"/>
<rect x="432.00" y="676.60" width="2.00" height="14.00" fill="#bbe704"/>
<rect x="442.00" y="676.60" width="1.00" height="14.00" fill="#d1d700"/>
<rect x="449.00" y="676.60" width="1.00" height="14.00" fill="#cddb00"/>
<rect x="463.00" y="676.60" width="1.00" height="14.00" fill="#cfd900"/>
<rect x="483.00" y="676.60" width="1.00" height="14.00" fill="#c8e000"/>
<rect x="488.00" y="676.60" width="3.00" height="14.00" fill="#c4e400"/>
<rect x="508.00" y="676.60" width="1.00" height="14.00" fill="#cbdd00"/>
<rect x="520.00" y="676.60" width="1.00" height="14.00" fill="#ceda00"/>
<rect x="522.00" y="676.60" width="1.00" height="14.00" fill="#bfe801"/>
<rect x="525.00" y="676.60" width="2.00" height="14.00" fill="#d5d300"/>
<rect x="528.00" y="676.60" width="3.00" height="14.00" fill="#c4e400"/>
<rect x="531.00" y="676.60" width="1.00" height="14.00" fill="#c8e000"/>
<rect x="537.00" y="676.60" width="1.00" height="14.00" fill="#c8e000"/>
<rect x="547.00" y="676.60" width="1.00" height="14.00" fill="#99e31d"/>
<rect x="553.00" y="676.60" width="1.00" height="14.00" fill="#c6e200"/>
<rect x="556.00" y="676.60" width="1.00" height="14.00" fill="#c9df00"/>
<rect x="558.00" y="676.60" width="3.00" height="14.00" fill="#d4d400"/>
<rect x="562.00" y="676.60" width="1.00" height="14.00" fill="#c2e600"/>
<rect x="565.00" y="676.60" width="1.00" height="14.00" fill="#c9df00"/>
<rect x="570.00" y="676.60" width="1.00" height="14.00" fill="#ceda00"/>
<rect x="572.00" y="676.60" width="1.00" height="14.00" fill="#ccdc00"/>
<rect x="581.00" y="676.60" width="1.00" height="14.00" fill="#bee801"/>
<rect x="589.00" y="676.60" width="1.00" height="14.00" fill="#cddb00"/>
<rect x="592.00" y="676.60" width="1.00" height="14.00" fill="#b7e707"/>
<rect x="607.00" y="676.60" width="2.00" height="14.00" fill="#b6e708"/>
<rect x="626.00" y="676.60" width="1.00" height="14.00" fill="#cfd900"/>
<rect x="628.00" y="676.60" width="1.00" height="14.00" fill="#cbdd00"/>
<rect x="635.00" y="676.60" width="1.00" height="14.00" fill="#c9df00"/>
<rect x="637.00" y="676.60" width="3.00" height="14.00" fill="#cade00"/>
<rect x="661.00" y="676.60" width="1.00" height="14.00" fill="#c9df00"/>
<rect x="668.00" y="676.60" width="1.00" height="14.00" fill="#c8e000"/>
<rect x="675.00" y="676.60" width="2.00" height="14.00" fill="#b8e706"/>
<rect x="679.00" y="676.60" width="2.00" height="14.00" fill="#d5d300"/>
<rect x="688.00" y="676.60" width="1.00" height="14.00" fill="#d4d400"/>
<rect x="695.00" y="676.60" width="3.00" height="14.00" fill="#b9e705"/>
<rect x="698.00" y="676.60" width="1.00" height="14.00" fill="#c7e100"/>
<rect x="701.00" y="676.60" width="1.00" height="14.00" fill="#cbdd00"/>
<rect x="707.00" y="676.60" width="2.00" height="14.00" fill="#c8e000"/>
<rect x="710.00" y="676.60" width="2.00" height="14.00" fill="#93e222"/>
<rect x="723.00" y="676.60" width="1.00" height="14.00" fill="#bce803"/>
<rect x="726.00" y="676.60" width="2.00" height="14.00" fill="#8be128"/>
<rect x="732.00" y="676.60" width="1.00" height="14.00" fill="#ceda00"/>
<rect x="742.00" y="676.60" width="2.00" height="14.00" fill="#c7e100"/>
<rect x="745.00" y="676.60" width="1.00" height="14.00" fill="#c4e400"/>
<rect x="760.00" y="676.60" width="2.00" height="14.00" fill="#8ce127"/>
<rect x="763.00" y="676.60" width="1.00" height="14.00" fill="#cade00"/>
<rect x="772.00" y="676.60" width="3.00" height="14.00" fill="#d5d300"/>
<rect x="779.00" y="676.60" width="1.00" height="14.00" fill="#c5e300"/>
<rect x="781.00" y="676.60" width="2.00" height="14.00" fill="#bde802"/>
<rect x="802.00" y="676.60" width="2.00" height="14.00" fill="#67da3d"/>
<rect x="806.00" y="676.60" width="3.00" height="14.00" fill="#c9df00"/>
<rect x="810.00" y="676.60" width="2.00" height="14.00" fill="#ceda00"/>
<rect x="817.00" y="676.60" width="1.00" height="14.00" fill="#9ce41b"/>
<rect x="819.00" y="676.60" width="3.00" height="14.00" fill="#e79e00"/>
<rect x="822.00" y="676.60" width="3.00" height="14.00" fill="#ff6b00"/>
<rect x="825.00" y="676.60" width="1.00" height="14.00" fill="#e4a200"/>
<rect x="835.00" y="676.60" width="1.00" height="14.00" fill="#d3d500"/>
<rect x="842.00" y="676.60" width="1.00" height="14.00" fill="#b4e609"/>
<rect x="845.00" y="676.60" width="1.00" height="14.00" fill="#84e02d"/>
<rect x="850.00" y="676.60" width="2.00" height="14.00" fill="#c1e700"/>
<rect x="856.00" y="676.60" width="2.00" height="14.00" fill="#d0d800"/>
<rect x="861.00" y="676.60" width="3.00" height="14.00" fill="#ceda00"/>
<rect x="869.00" y="676.60" width="2.00" height="14.00" fill="#c5e300"/>
<rect x="880.00" y="676.60" width="1.00" height="14.00" fill="#c6e200"/>
<rect x="887.00" y="676.60" width="1.00" height="14.00" fill="#b7e707"/>
<rect x="900.00" y="676.60" width="1.00" height="14.00" fill="#7ade33"/>
<rect x="910.00" y="676.60" width="1.00" height="14.00" fill="#a0e418"/>
<rect x="914.00" y="676.60" width="2.00" height="14.00" fill="#78de34"/>
<rect x="917.00" y="676.60" width="1.00" height="14.00" fill="#93e222"/>
<rect x="919.00" y="676.60" width="3.00" height="14.00" fill="#e3a300"/>
<rect x="922.00" y="676.60" width="2.00" height="14.00" fill="#ff7d00"/>
<rect x="925.00" y="676.60" width="3.00" height="14.00" fill="#fa8500"/>
<rect x="931.00" y="676.60" width="1.00" height="14.00" fill="#87e12b"/>
<rect x="933.00" y="676.60" width="2.00" height="14.00" fill="#b6e707"/>
<rect x="936.00" y="676.60" width="1.00" height="14.00" fill="#c6e200"/>
<rect x="942.00" y="676.60" width="3.00" height="14.00" fill="#deb300"/>
<rect x="945.00" y="676.60" width="2.00" height="14.00" fill="#ff7a00"/>
<rect x="948.00" y="676.60" width="3.00" height="14.00" fill="#fe8100"/>
<rect x="954.00" y="676.60" width="2.00" height="14.00" fill="#ccdc00"/>
<rect x="968.00" y="676.60" width="1.00" height="14.00" fill="#c8e000"/>
<rect x="973.00" y="676.60" width="1.00" height="14.00" fill="#8be127"/>
<rect x="976.00" y="676.60" width="2.00" height="14.00" fill="#7bdf33"/>
<rect x="983.00" y="676.60" width="1.00" height="14.00" fill="#a2e416"/>
<rect x="989.00" y="676.60" width="3.00" height="14.00" fill="#a0e418"/>
<rect x="995.00" y="676.60" width="1.00" height="14.00" fill="#d2d600"/>
<rect x="999.00" y="676.60" width="3.00" height="14.00" fill="#ceda00"/>
<rect x="1012.00" y="676.60" width="2.00" height="14.00" fill="#6bdb3a"/>
<rect x="1015.00" y="676.60" width="1.00" height="14.00" fill="#c2e600"/>
<rect x="1023.00" y="676.60" width="3.00" height="14.00" fill="#ceda00"/>
<rect x="1027.00" y="676.60" width="3.00" height="14.00" fill="#c2e600"/>
<rect x="1030.00" y="676.60" width="3.00" height="14.00" fill="#ff8000"/>
<rect x="1033.00" y="676.60" width="1.00" height="14.00" fill="#f28d00"/>
<rect x="1035.00" y="676.60" width="3.00" height="14.00" fill="#ec9500"/>
<rect x="1059.00" y="676.60" width="1.00" height="14.00" fill="#b4e709"/>
<rect x="1062.00" y="676.60" width="1.00" height="14.00" fill="#c3e500"/>
<rect x="1069.00" y="676.60" width="1.00" height="14.00" fill="#c1e700"/>
<rect x="1073.00" y="676.60" width="1.00" height="14.00" fill="#cbdd00"/>
<rect x="1075.00" y="676.60" width="1.00" height="14.00" fill="#cfd900"/>
<rect x="435.00" y="515.32" width="1.00" height="5.00" fill="#1212b6"/>
<rect x="530.00" y="515.08" width="1.00" height="3.00" fill="#1212b6"/>
<rect x="409.00" y="514.73" width="1.00" height="5.00" fill="#1212b6"/>
<rect x="292.00" y="518.64" width="1.00" height="5.00" fill="#1212b6"/>
<rect x="835.00" y="518.99" width="1.00" height="5.00" fill="#1212b6"/>
<rect x="268.00" y="519.02" width="1.00" height="5.00" fill="#1212b6"/>
<rect x="239.00" y="514.85" width="1.00" height="3.00" fill="#1212b6"/>
<rect x="649.00" y="519.23" width="1.00" height="3.00" fill="#1212b6"/>
<rect x="700.00" y="516.95" width="1.00" height="8.00" fill="#1212b6"/>
<rect x="297.00" y="519.58" width="1.00" height="8.00" fill="#1212b6"/>
<rect x="231.00" y="517.94" width="1.00" height="3.00" fill="#1212b6"/>
<rect x="509.00" y="519.04" width="1.00" height="3.00" fill="#1212b6"/>
<rect x="993.00" y="519.84" width="1.00" height="5.00" fill="#1212b6"/>
<rect x="129.00" y="514.07" width="1.00" height="5.00" fill="#1212b6"/>
<line x1="91.00" y1="686.35" x2="95.00" y2="686.35" stroke="#333333" stroke-width="1"/>
<line x1="91.00" y1="679.79" x2="95.00" y2="679.79" stroke="#333333" stroke-width="1"/>
<line x1="91.00" y1="674.70" x2="95.00" y2="674.70" stroke="#333333" stroke-width="1"/>
<line x1="91.00" y1="670.55" x2="95.00" y2="670.55" stroke="#333333" stroke-width="1"/>
<line x1="91.00" y1="667.03" x2="95.00" y2="667.03" stroke="#333333" stroke-width="1"/>
<line x1="91.00" y1="663.99" x2="95.00" y2="663.99" stroke="#333333" stroke-width="1"/>
<line x1="91.00" y1="661.30" x2="95.00" y2="661.30" stroke="#333333" stroke-width="1"/>
<line x1="87.00" y1="658.90" x2="95.00" y2="658.90" stroke="#333333" stroke-width="1"/>
<line x1="91.00" y1="643.10" x2="95.00" y2="643.10" stroke="#333333" stroke-width="1"/>
<line x1="91.00" y1="633.85" x2="95.00" y2="633.85" stroke="#333333" stroke-width="1"/>
<line x1="91.00" y1="627.29" x2="95.00" y2="627.29" stroke="#333333" stroke-width="1"/>
<line x1="91.00" y1="622.20" x2="95.00" y2="622.20" stroke="#333333" stroke-width="1"/>
<line x1="91.00" y1="618.05" x2="95.00" y2="618.05" stroke="#333333" stroke-width="1"/>
<line x1="91.00" y1="614.53" x2="95.00" y2="614.53" stroke="#333333" stroke-width="1"/>
<line x1="91.00" y1="611.49" x2="95.00" y2="611.49" stroke="#333333" stroke-width="1"/>
<line x1="91.00" y1="608.80" x2="95.00" y2="608.80" stroke="#333333" stroke-width="1"/>
<line x1="87.00" y1="606.40" x2="95.00" y2="606.40" stroke="#333333" stroke-width="1"/>
<line x1="91.00" y1="590.60" x2="95.00" y2="590.60" stroke="#333333" stroke-width="1"/>
<line x1="91.00" y1="581.35" x2="95.00" y2="581.35" stroke="#333333" stroke-width="1"/>
<line x1="91.00" y1="574.79" x2="95.00" y2="574.79" stroke="#333333" stroke-width="1"/>
<line x1="91.00" y1="569.70" x2="95.00" y2="569.70" stroke="#333333" stroke-width="1"/>
<line x1="91.00" y1="565.55" x2="95.00" y2="565.55" stroke="#333333" stroke-width="1"/>
<line x1="91.00" y1="562.03" x2="95.00" y2="562.03" stroke="#333333" stroke-width="1"/>
<line x1="91.00" y1="558.99" x2="95.00" y2="558.99" stroke="#333333" stroke-width="1"/>
<line x1="91.00" y1="556.30" x2="95.00" y2="556.30" stroke="#333333" stroke-width="1"/>
<line x1="87.00" y1="553.90" x2="95.00" y2="553.90" stroke="#333333" stroke-width="1"/>
<line x1="91.00" y1="538.10" x2="95.00" y2="538.10" stroke="#333333" stroke-width="1"/>
<line x1="91.00" y1="528.85" x2="95.00" y2="528.85" stroke="#333333" stroke-width="1"/>
<line x1="91.00" y1="522.29" x2="95.00" y2="522.29" stroke="#333333" stroke-width="1"/>
<line x1="91.00" y1="517.20" x2="95.00" y2="517.20" stroke="#333333" stroke-width="1"/>
<line x1="91.00" y1="513.05" x2="95.00" y2="513.05" stroke="#333333" stroke-width="1"/>
<text x="59.89" y="561.40" font-size="12.6" textLength="14.83" lengthAdjust="spacingAndGlyphs" fill="#3c3c3c">10</text>
<text x="75.53" y="555.30" font-size="12.6" textLength="6.72" lengthAdjust="spacingAndGlyphs" fill="#3c3c3c">4</text>
<text x="59.89" y="613.90" font-size="12.6" textLength="14.83" lengthAdjust="spacingAndGlyphs" fill="#3c3c3c">10</text>
<text x="75.35" y="607.80" font-size="12.6" textLength="6.67" lengthAdjust="spacingAndGlyphs" fill="#3c3c3c">3</text>
<text x="59.89" y="666.40" font-size="12.6" textLength="14.83" lengthAdjust="spacingAndGlyphs" fill="#3c3c3c">10</text>
<text x="75.23" y="660.30" font-size="12.6" textLength="6.33" lengthAdjust="spacingAndGlyphs" fill="#3c3c3c">2</text>
<text x="8.96" y="536.80" font-size="12.2" textLength="65.55" lengthAdjust="spacingAndGlyphs" fill="#3c3c3c">LEMMS Ions</text>
<text transform="translate(49.10,639.53) rotate(-90)" x="0" y="0" font-size="12.2" textLength="73.91" lengthAdjust="spacingAndGlyphs" fill="#3c3c3c">Energy (keV)</text>
<line x1="136.04" y1="689.00" x2="136.04" y2="692.00" stroke="#555555" stroke-width="0.8"/>
<line x1="177.08" y1="689.00" x2="177.08" y2="692.00" stroke="#555555" stroke-width="0.8"/>
<line x1="218.12" y1="689.00" x2="218.12" y2="692.00" stroke="#555555" stroke-width="0.8"/>
<line x1="259.17" y1="689.00" x2="259.17" y2="692.00" stroke="#555555" stroke-width="0.8"/>
<line x1="300.21" y1="689.00" x2="300.21" y2="692.00" stroke="#555555" stroke-width="0.8"/>
<line x1="341.25" y1="689.00" x2="341.25" y2="692.00" stroke="#555555" stroke-width="0.8"/>
<line x1="382.29" y1="689.00" x2="382.29" y2="692.00" stroke="#555555" stroke-width="0.8"/>
<line x1="423.33" y1="689.00" x2="423.33" y2="692.00" stroke="#555555" stroke-width="0.8"/>
<line x1="464.38" y1="689.00" x2="464.38" y2="692.00" stroke="#555555" stroke-width="0.8"/>
<line x1="505.42" y1="689.00" x2="505.42" y2="692.00" stroke="#555555" stroke-width="0.8"/>
<line x1="546.46" y1="689.00" x2="546.46" y2="692.00" stroke="#555555" stroke-width="0.8"/>
<line x1="587.50" y1="689.00" x2="587.50" y2="692.00" stroke="#555555" stroke-width="0.8"/>
<line x1="628.54" y1="689.00" x2="628.54" y2="692.00" stroke="#555555" stroke-width="0.8"/>
<line x1="669.58" y1="689.00" x2="669.58" y2="692.00" stroke="#555555" stroke-width="0.8"/>
<line x1="710.62" y1="689.00" x2="710.62" y2="692.00" stroke="#555555" stroke-width="0.8"/>
<line x1="751.67" y1="689.00" x2="751.67" y2="692.00" stroke="#555555" stroke-width="0.8"/>
<line x1="792.71" y1="689.00" x2="792.71" y2="692.00" stroke="#555555" stroke-width="0.8"/>
<line x1="833.75" y1="689.00" x2="833.75" y2="692.00" stroke="#555555" stroke-width="0.8"/>
<line x1="874.79" y1="689.00" x2="874.79" y2="692.00" stroke="#555555" stroke-width="0.8"/>
<line x1="915.83" y1="689.00" x2="915.83" y2="692.00" stroke="#555555" stroke-width="0.8"/>
<line x1="956.88" y1="689.00" x2="956.88" y2="692.00" stroke="#555555" stroke-width="0.8"/>
<line x1="997.92" y1="689.00" x2="997.92" y2="692.00" stroke="#555555" stroke-width="0.8"/>
<line x1="1038.96" y1="689.00" x2="1038.96" y2="692.00" stroke="#555555" stroke-width="0.8"/>
<rect x="1092.00" y="515.00" width="12.00" height="176.30" fill="url(#cm)"/>
<line x1="1104.50" y1="515.00" x2="1104.50" y2="691.30" stroke="#333333" stroke-width="1"/>
<line x1="1104.50" y1="515.20" x2="1113.00" y2="515.20" stroke="#333333" stroke-width="1"/>
<text x="1116.67" y="522.70" font-size="12.6" textLength="15.05" lengthAdjust="spacingAndGlyphs" fill="#3c3c3c">10</text>
<text x="1132.61" y="516.60" font-size="12.6" textLength="7.05" lengthAdjust="spacingAndGlyphs" fill="#3c3c3c">4</text>
<line x1="1104.50" y1="534.86" x2="1109.00" y2="534.86" stroke="#333333" stroke-width="1"/>
<line x1="1104.50" y1="554.52" x2="1113.00" y2="554.52" stroke="#333333" stroke-width="1"/>
<text x="1116.67" y="562.02" font-size="12.6" textLength="15.05" lengthAdjust="spacingAndGlyphs" fill="#3c3c3c">10</text>
<text x="1132.20" y="555.92" font-size="12.6" textLength="7.79" lengthAdjust="spacingAndGlyphs" fill="#3c3c3c">2</text>
<line x1="1104.50" y1="574.18" x2="1109.00" y2="574.18" stroke="#333333" stroke-width="1"/>
<line x1="1104.50" y1="593.84" x2="1113.00" y2="593.84" stroke="#333333" stroke-width="1"/>
<text x="1116.67" y="601.34" font-size="12.6" textLength="15.05" lengthAdjust="spacingAndGlyphs" fill="#3c3c3c">10</text>
<text x="1132.39" y="595.24" font-size="12.6" textLength="7.43" lengthAdjust="spacingAndGlyphs" fill="#3c3c3c">0</text>
<line x1="1104.50" y1="613.50" x2="1109.00" y2="613.50" stroke="#333333" stroke-width="1"/>
<line x1="1104.50" y1="633.16" x2="1113.00" y2="633.16" stroke="#333333" stroke-width="1"/>
<text x="1116.67" y="640.66" font-size="12.6" textLength="15.05" lengthAdjust="spacingAndGlyphs" fill="#3c3c3c">10</text>
<text x="1132.90" y="634.56" font-size="12.6" textLength="14.24" lengthAdjust="spacingAndGlyphs" fill="#3c3c3c">–2</text>
<line x1="1104.50" y1="652.82" x2="1109.00" y2="652.82" stroke="#333333" stroke-width="1"/>
<line x1="1104.50" y1="672.48" x2="1113.00" y2="672.48" stroke="#333333" stroke-width="1"/>
<text x="1116.67" y="679.98" font-size="12.6" textLength="15.05" lengthAdjust="spacingAndGlyphs" fill="#3c3c3c">10</text>
<text x="1132.90" y="673.88" font-size="12.6" textLength="13.96" lengthAdjust="spacingAndGlyphs" fill="#3c3c3c">–4</text>
<line x1="1104.50" y1="692.14" x2="1109.00" y2="692.14" stroke="#333333" stroke-width="1"/>
<text transform="translate(1156.30,517.40) rotate(90)" x="0" y="0" font-size="12.2" textLength="168.82" lengthAdjust="spacingAndGlyphs" fill="#3c3c3c">intensity 1/(s cm^2 ster keV)</text>
<rect x="95.00" y="695.00" width="986.00" height="16.00" fill="#262626"/>
<rect x="97.00" y="696.00" width="285.00" height="14.00" fill="#ff0000"/>
<rect x="383.00" y="696.00" width="619.00" height="14.00" fill="#00ff00"/>
<rect x="1003.00" y="696.00" width="77.00" height="14.00" fill="#ff0000"/>
<text x="29.16" y="706.90" font-size="12.2" textLength="50.49" lengthAdjust="spacingAndGlyphs" fill="#3c3c3c">Sunlight?</text>
<line x1="136.04" y1="710.40" x2="136.04" y2="714.60" stroke="#333333" stroke-width="1"/>
<line x1="177.08" y1="710.40" x2="177.08" y2="714.60" stroke="#333333" stroke-width="1"/>
<line x1="218.12" y1="710.40" x2="218.12" y2="718.50" stroke="#333333" stroke-width="1"/>
<line x1="259.17" y1="710.40" x2="259.17" y2="714.60" stroke="#333333" stroke-width="1"/>
<line x1="300.21" y1="710.40" x2="300.21" y2="714.60" stroke="#333333" stroke-width="1"/>
<line x1="341.25" y1="710.40" x2="341.25" y2="718.50" stroke="#333333" stroke-width="1"/>
<line x1="382.29" y1="710.40" x2="382.29" y2="714.60" stroke="#333333" stroke-width="1"/>
<line x1="423.33" y1="710.40" x2="423.33" y2="714.60" stroke="#333333" stroke-width="1"/>
<line x1="464.38" y1="710.40" x2="464.38" y2="718.50" stroke="#333333" stroke-width="1"/>
<line x1="505.42" y1="710.40" x2="505.42" y2="714.60" stroke="#333333" stroke-width="1"/>
<line x1="546.46" y1="710.40" x2="546.46" y2="714.60" stroke="#333333" stroke-width="1"/>
<line x1="587.50" y1="710.40" x2="587.50" y2="718.50" stroke="#333333" stroke-width="1"/>
<line x1="628.54" y1="710.40" x2="628.54" y2="714.60" stroke="#333333" stroke-width="1"/>
<line x1="669.58" y1="710.40" x2="669.58" y2="714.60" stroke="#333333" stroke-width="1"/>
<line x1="710.62" y1="710.40" x2="710.62" y2="718.50" stroke="#333333" stroke-width="1"/>
<line x1="751.67" y1="710.40" x2="751.67" y2="714.60" stroke="#333333" stroke-width="1"/>
<line x1="792.71" y1="710.40" x2="792.71" y2="714.60" stroke="#333333" stroke-width="1"/>
<line x1="833.75" y1="710.40" x2="833.75" y2="718.50" stroke="#333333" stroke-width="1"/>
<line x1="874.79" y1="710.40" x2="874.79" y2="714.60" stroke="#333333" stroke-width="1"/>
<line x1="915.83" y1="710.40" x2="915.83" y2="714.60" stroke="#333333" stroke-width="1"/>
<line x1="956.88" y1="710.40" x2="956.88" y2="718.50" stroke="#333333" stroke-width="1"/>
<line x1="997.92" y1="710.40" x2="997.92" y2="714.60" stroke="#333333" stroke-width="1"/>
<line x1="1038.96" y1="710.40" x2="1038.96" y2="714.60" stroke="#333333" stroke-width="1"/>
<line x1="1080.00" y1="710.40" x2="1080.00" y2="718.50" stroke="#333333" stroke-width="1"/>
<text x="200.03" y="734.00" font-size="12.8" textLength="35.59" lengthAdjust="spacingAndGlyphs" fill="#3c3c3c">03:00</text>
<text x="207.95" y="748.90" font-size="12.8" textLength="27.63" lengthAdjust="spacingAndGlyphs" fill="#3c3c3c">7.77</text>
<text x="199.88" y="763.90" font-size="12.8" textLength="34.90" lengthAdjust="spacingAndGlyphs" fill="#3c3c3c">61.83</text>
<text x="199.92" y="779.00" font-size="12.8" textLength="34.94" lengthAdjust="spacingAndGlyphs" fill="#3c3c3c">96.02</text>
<text x="323.15" y="734.00" font-size="12.8" textLength="35.59" lengthAdjust="spacingAndGlyphs" fill="#3c3c3c">06:00</text>
<text x="331.08" y="748.90" font-size="12.8" textLength="27.59" lengthAdjust="spacingAndGlyphs" fill="#3c3c3c">7.79</text>
<text x="323.00" y="763.90" font-size="12.8" textLength="34.90" lengthAdjust="spacingAndGlyphs" fill="#3c3c3c">61.56</text>
<text x="323.03" y="779.00" font-size="12.8" textLength="34.97" lengthAdjust="spacingAndGlyphs" fill="#3c3c3c">95.11</text>
<text x="446.28" y="734.00" font-size="12.8" textLength="35.59" lengthAdjust="spacingAndGlyphs" fill="#3c3c3c">09:00</text>
<text x="454.20" y="748.90" font-size="12.8" textLength="27.61" lengthAdjust="spacingAndGlyphs" fill="#3c3c3c">7.81</text>
<text x="446.13" y="763.90" font-size="12.8" textLength="34.89" lengthAdjust="spacingAndGlyphs" fill="#3c3c3c">61.28</text>
<text x="446.18" y="779.00" font-size="12.8" textLength="34.78" lengthAdjust="spacingAndGlyphs" fill="#3c3c3c">94.20</text>
<text x="568.85" y="734.00" font-size="12.8" textLength="36.15" lengthAdjust="spacingAndGlyphs" fill="#3c3c3c">12:00</text>
<text x="577.33" y="748.90" font-size="12.8" textLength="27.54" lengthAdjust="spacingAndGlyphs" fill="#3c3c3c">7.83</text>
<text x="569.25" y="763.90" font-size="12.8" textLength="34.83" lengthAdjust="spacingAndGlyphs" fill="#3c3c3c">61.00</text>
<text x="569.30" y="779.00" font-size="12.8" textLength="34.84" lengthAdjust="spacingAndGlyphs" fill="#3c3c3c">93.28</text>
<text x="691.98" y="734.00" font-size="12.8" textLength="36.15" lengthAdjust="spacingAndGlyphs" fill="#3c3c3c">15:00</text>
<text x="700.46" y="748.90" font-size="12.8" textLength="27.32" lengthAdjust="spacingAndGlyphs" fill="#3c3c3c">7.84</text>
<text x="692.38" y="763.90" font-size="12.8" textLength="34.99" lengthAdjust="spacingAndGlyphs" fill="#3c3c3c">60.72</text>
<text x="692.42" y="779.00" font-size="12.8" textLength="34.94" lengthAdjust="spacingAndGlyphs" fill="#3c3c3c">92.37</text>
<text x="815.10" y="734.00" font-size="12.8" textLength="36.15" lengthAdjust="spacingAndGlyphs" fill="#3c3c3c">18:00</text>
<text x="823.58" y="748.90" font-size="12.8" textLength="27.54" lengthAdjust="spacingAndGlyphs" fill="#3c3c3c">7.86</text>
<text x="815.50" y="763.90" font-size="12.8" textLength="34.90" lengthAdjust="spacingAndGlyphs" fill="#3c3c3c">60.43</text>
<text x="815.55" y="779.00" font-size="12.8" textLength="34.83" lengthAdjust="spacingAndGlyphs" fill="#3c3c3c">91.45</text>
<text x="938.61" y="734.00" font-size="12.8" textLength="35.76" lengthAdjust="spacingAndGlyphs" fill="#3c3c3c">21:00</text>
<text x="946.71" y="748.90" font-size="12.8" textLength="27.53" lengthAdjust="spacingAndGlyphs" fill="#3c3c3c">7.88</text>
<text x="938.63" y="763.90" font-size="12.8" textLength="34.69" lengthAdjust="spacingAndGlyphs" fill="#3c3c3c">60.14</text>
<text x="938.68" y="779.00" font-size="12.8" textLength="34.64" lengthAdjust="spacingAndGlyphs" fill="#3c3c3c">90.54</text>
<text x="1061.90" y="734.00" font-size="12.8" textLength="35.59" lengthAdjust="spacingAndGlyphs" fill="#3c3c3c">00:00</text>
<text x="1069.83" y="748.90" font-size="12.8" textLength="27.47" lengthAdjust="spacingAndGlyphs" fill="#3c3c3c">7.90</text>
<text x="1061.90" y="763.90" font-size="12.8" textLength="34.54" lengthAdjust="spacingAndGlyphs" fill="#3c3c3c">59.84</text>
<text x="1061.85" y="779.00" font-size="12.8" textLength="34.89" lengthAdjust="spacingAndGlyphs" fill="#3c3c3c">89.62</text>
<text x="1062.10" y="745.90" font-size="12.8" textLength="62.58" lengthAdjust="spacingAndGlyphs" fill="#3c3c3c">2014–331</text>
<text x="15.63" y="748.80" font-size="12.2" textLength="44.57" lengthAdjust="spacingAndGlyphs" fill="#3c3c3c">LT (hrs)</text>
<text x="45.65" y="763.90" font-size="12.2" textLength="14.16" lengthAdjust="spacingAndGlyphs" fill="#3c3c3c">Rs</text>
<text x="12.64" y="778.90" font-size="12.2" textLength="47.69" lengthAdjust="spacingAndGlyphs" fill="#3c3c3c">Dipole L</text>
<rect x="215.50" y="802.60" width="150.90" height="147.40" fill="#ffffff" stroke="#333333" stroke-width="1"/>
<line x1="207.00" y1="813.33" x2="215.50" y2="813.33" stroke="#333333" stroke-width="1"/>
<line x1="207.00" y1="834.39" x2="215.50" y2="834.39" stroke="#333333" stroke-width="1"/>
<line x1="207.00" y1="855.44" x2="215.50" y2="855.44" stroke="#333333" stroke-width="1"/>
<line x1="207.00" y1="876.50" x2="215.50" y2="876.50" stroke="#333333" stroke-width="1"/>
<line x1="207.00" y1="897.56" x2="215.50" y2="897.56" stroke="#333333" stroke-width="1"/>
<line x1="207.00" y1="918.61" x2="215.50" y2="918.61" stroke="#333333" stroke-width="1"/>
<line x1="207.00" y1="939.67" x2="215.50" y2="939.67" stroke="#333333" stroke-width="1"/>
<line x1="211.10" y1="802.80" x2="215.50" y2="802.80" stroke="#333333" stroke-width="1"/>
<line x1="211.10" y1="823.86" x2="215.50" y2="823.86" stroke="#333333" stroke-width="1"/>
<line x1="211.10" y1="844.91" x2="215.50" y2="844.91" stroke="#333333" stroke-width="1"/>
<line x1="211.10" y1="865.97" x2="215.50" y2="865.97" stroke="#333333" stroke-width="1"/>
<line x1="211.10" y1="887.03" x2="215.50" y2="887.03" stroke="#333333" stroke-width="1"/>
<line x1="211.10" y1="908.09" x2="215.50" y2="908.09" stroke="#333333" stroke-width="1"/>
<line x1="211.10" y1="929.14" x2="215.50" y2="929.14" stroke="#333333" stroke-width="1"/>
<line x1="211.10" y1="950.20" x2="215.50" y2="950.20" stroke="#333333" stroke-width="1"/>
<line x1="237.11" y1="950.00" x2="237.11" y2="958.00" stroke="#333333" stroke-width="1"/>
<line x1="291.00" y1="950.00" x2="291.00" y2="958.00" stroke="#333333" stroke-width="1"/>
<line x1="344.89" y1="950.00" x2="344.89" y2="958.00" stroke="#333333" stroke-width="1"/>
<line x1="366.45" y1="950.00" x2="366.45" y2="955.00" stroke="#333333" stroke-width="1"/>
<line x1="355.67" y1="950.00" x2="355.67" y2="955.00" stroke="#333333" stroke-width="1"/>
<line x1="334.11" y1="950.00" x2="334.11" y2="955.00" stroke="#333333" stroke-width="1"/>
<line x1="323.34" y1="950.00" x2="323.34" y2="955.00" stroke="#333333" stroke-width="1"/>
<line x1="312.56" y1="950.00" x2="312.56" y2="955.00" stroke="#333333" stroke-width="1"/>
<line x1="301.78" y1="950.00" x2="301.78" y2="955.00" stroke="#333333" stroke-width="1"/>
<line x1="280.22" y1="950.00" x2="280.22" y2="955.00" stroke="#333333" stroke-width="1"/>
<line x1="269.44" y1="950.00" x2="269.44" y2="955.00" stroke="#333333" stroke-width="1"/>
<line x1="258.66" y1="950.00" x2="258.66" y2="955.00" stroke="#333333" stroke-width="1"/>
<line x1="247.89" y1="950.00" x2="247.89" y2="955.00" stroke="#333333" stroke-width="1"/>
<line x1="226.33" y1="950.00" x2="226.33" y2="955.00" stroke="#333333" stroke-width="1"/>
<line x1="215.55" y1="950.00" x2="215.55" y2="955.00" stroke="#333333" stroke-width="1"/>
<text x="176.70" y="817.63" font-size="12.6" textLength="27.17" lengthAdjust="spacingAndGlyphs" fill="#3c3c3c">–60.</text>
<text x="176.70" y="838.69" font-size="12.6" textLength="27.17" lengthAdjust="spacingAndGlyphs" fill="#3c3c3c">–40.</text>
<text x="176.70" y="859.74" font-size="12.6" textLength="27.17" lengthAdjust="spacingAndGlyphs" fill="#3c3c3c">–20.</text>
<text x="190.90" y="880.80" font-size="12.6" textLength="13.15" lengthAdjust="spacingAndGlyphs" fill="#3c3c3c">0.</text>
<text x="182.94" y="901.86" font-size="12.6" textLength="21.03" lengthAdjust="spacingAndGlyphs" fill="#3c3c3c">20.</text>
<text x="183.37" y="922.91" font-size="12.6" textLength="20.58" lengthAdjust="spacingAndGlyphs" fill="#3c3c3c">40.</text>
<text x="182.94" y="943.97" font-size="12.6" textLength="21.03" lengthAdjust="spacingAndGlyphs" fill="#3c3c3c">60.</text>
<text x="226.63" y="973.90" font-size="12.6" textLength="19.65" lengthAdjust="spacingAndGlyphs" fill="#3c3c3c">50.</text>
<text x="285.35" y="973.90" font-size="12.6" textLength="14.21" lengthAdjust="spacingAndGlyphs" fill="#3c3c3c">0.</text>
<text x="331.60" y="973.90" font-size="12.6" textLength="26.02" lengthAdjust="spacingAndGlyphs" fill="#3c3c3c">–50.</text>
<text transform="translate(167.30,895.89) rotate(-90)" x="0" y="0" font-size="12.2" textLength="36.82" lengthAdjust="spacingAndGlyphs" fill="#3c3c3c">KSM–Y</text>
<text x="270.98" y="992.10" font-size="12.2" textLength="38.35" lengthAdjust="spacingAndGlyphs" fill="#3c3c3c">KSM–X</text>
<svg x="215.5" y="802.6" width="150.89999999999998" height="147.39999999999998" overflow="hidden">
<path d="M88.5,-5.1 L86.0,-3.1 L83.6,-1.1 L81.2,0.9 L78.9,2.8 L76.6,4.8 L74.5,6.8 L72.3,8.8 L70.3,10.7 L68.3,12.7 L66.4,14.7 L64.5,16.7 L62.7,18.6 L60.9,20.6 L59.3,22.6 L57.7,24.5 L56.1,26.5 L54.6,28.5 L53.2,30.5 L51.8,32.4 L50.5,34.4 L49.3,36.4 L48.1,38.4 L47.0,40.3 L46.0,42.3 L45.0,44.3 L44.1,46.3 L43.2,48.2 L42.4,50.2 L41.7,52.2 L41.0,54.2 L40.4,56.1 L39.9,58.1 L39.4,60.1 L39.0,62.1 L38.7,64.0 L38.4,66.0 L38.2,68.0 L38.0,70.0 L37.9,71.9 L37.9,73.9 L37.9,75.9 L38.0,77.8 L38.2,79.8 L38.4,81.8 L38.7,83.8 L39.0,85.7 L39.4,87.7 L39.9,89.7 L40.4,91.7 L41.0,93.6 L41.7,95.6 L42.4,97.6 L43.2,99.6 L44.1,101.5 L45.0,103.5 L46.0,105.5 L47.0,107.5 L48.1,109.4 L49.3,111.4 L50.5,113.4 L51.8,115.4 L53.2,117.3 L54.6,119.3 L56.1,121.3 L57.7,123.3 L59.3,125.2 L60.9,127.2 L62.7,129.2 L64.5,131.1 L66.4,133.1 L68.3,135.1 L70.3,137.1 L72.3,139.0 L74.5,141.0 L76.6,143.0 L78.9,145.0 L81.2,146.9 L83.6,148.9 L86.0,150.9 L88.5,152.9" fill="none" stroke="#0000ff" stroke-width="1.05" stroke-dasharray="2.2,1.3"/>
<path d="M151.1,-5.1 L145.9,-3.1 L140.9,-1.1 L136.1,0.9 L131.3,2.8 L126.7,4.8 L122.3,6.8 L117.9,8.8 L113.7,10.7 L109.6,12.7 L105.6,14.7 L101.8,16.7 L98.1,18.6 L94.6,20.6 L91.1,22.6 L87.8,24.5 L84.6,26.5 L81.6,28.5 L78.7,30.5 L75.9,32.4 L73.2,34.4 L70.7,36.4 L68.3,38.4 L66.0,40.3 L63.9,42.3 L61.9,44.3 L60.0,46.3 L58.2,48.2 L56.6,50.2 L55.1,52.2 L53.7,54.2 L52.5,56.1 L51.4,58.1 L50.4,60.1 L49.6,62.1 L48.9,64.0 L48.3,66.0 L47.8,68.0 L47.5,70.0 L47.3,71.9 L47.3,73.9 L47.3,75.9 L47.5,77.8 L47.8,79.8 L48.3,81.8 L48.9,83.8 L49.6,85.7 L50.4,87.7 L51.4,89.7 L52.5,91.7 L53.7,93.6 L55.1,95.6 L56.6,97.6 L58.2,99.6 L60.0,101.5 L61.9,103.5 L63.9,105.5 L66.0,107.5 L68.3,109.4 L70.7,111.4 L73.2,113.4 L75.9,115.4 L78.7,117.3 L81.6,119.3 L84.6,121.3 L87.8,123.3 L91.1,125.2 L94.6,127.2 L98.1,129.2 L101.8,131.1 L105.6,133.1 L109.6,135.1 L113.7,137.1 L117.9,139.0 L122.3,141.0 L126.7,143.0 L131.3,145.0 L136.1,146.9 L140.9,148.9 L145.9,150.9 L151.1,152.9" fill="none" stroke="#8b4513" stroke-width="1.05" stroke-dasharray="2.2,1.3"/>
</svg>
<ellipse cx="291.0" cy="877.4" rx="20.0" ry="21.2" fill="none" stroke="#000" stroke-width="1.2"/>
<rect x="290.00" y="875.50" width="2.00" height="2.00" fill="#000"/>
<circle cx="309.2" cy="867.3" r="2.6" fill="#ff0000"/>
<path d="M262.3,837.5 Q264.5,827 267,823 Q271,818 274.6,816.3" fill="none" stroke="#000" stroke-width="1.3"/>
<circle cx="267.0" cy="823.1" r="3.4" fill="#0000ff"/>
<path d="M262.90,817.90 L271.90,826.90" stroke="#ff0000" stroke-width="1.1" fill="none"/>
<path d="M262.90,826.90 L271.90,817.90" stroke="#ff0000" stroke-width="1.1" fill="none"/>
<rect x="509.50" y="802.60" width="151.00" height="147.40" fill="#ffffff" stroke="#333333" stroke-width="1"/>
<line x1="501.00" y1="950.20" x2="509.50" y2="950.20" stroke="#333333" stroke-width="1"/>
<line x1="501.00" y1="931.77" x2="509.50" y2="931.77" stroke="#333333" stroke-width="1"/>
<line x1="501.00" y1="913.35" x2="509.50" y2="913.35" stroke="#333333" stroke-width="1"/>
<line x1="501.00" y1="894.92" x2="509.50" y2="894.92" stroke="#333333" stroke-width="1"/>
<line x1="501.00" y1="876.50" x2="509.50" y2="876.50" stroke="#333333" stroke-width="1"/>
<line x1="501.00" y1="858.08" x2="509.50" y2="858.08" stroke="#333333" stroke-width="1"/>
<line x1="501.00" y1="839.65" x2="509.50" y2="839.65" stroke="#333333" stroke-width="1"/>
<line x1="501.00" y1="821.23" x2="509.50" y2="821.23" stroke="#333333" stroke-width="1"/>
<line x1="501.00" y1="802.80" x2="509.50" y2="802.80" stroke="#333333" stroke-width="1"/>
<line x1="505.10" y1="948.36" x2="509.50" y2="948.36" stroke="#333333" stroke-width="1"/>
<line x1="505.10" y1="946.51" x2="509.50" y2="946.51" stroke="#333333" stroke-width="1"/>
<line x1="505.10" y1="944.67" x2="509.50" y2="944.67" stroke="#333333" stroke-width="1"/>
<line x1="505.10" y1="942.83" x2="509.50" y2="942.83" stroke="#333333" stroke-width="1"/>
<line x1="505.10" y1="940.99" x2="509.50" y2="940.99" stroke="#333333" stroke-width="1"/>
<line x1="505.10" y1="939.14" x2="509.50" y2="939.14" stroke="#333333" stroke-width="1"/>
<line x1="505.10" y1="937.30" x2="509.50" y2="937.30" stroke="#333333" stroke-width="1"/>
<line x1="505.10" y1="935.46" x2="509.50" y2="935.46" stroke="#333333" stroke-width="1"/>
<line x1="505.10" y1="933.62" x2="509.50" y2="933.62" stroke="#333333" stroke-width="1"/>
<line x1="505.10" y1="929.93" x2="509.50" y2="929.93" stroke="#333333" stroke-width="1"/>
<line x1="505.10" y1="928.09" x2="509.50" y2="928.09" stroke="#333333" stroke-width="1"/>
<line x1="505.10" y1="926.25" x2="509.50" y2="926.25" stroke="#333333" stroke-width="1"/>
<line x1="505.10" y1="924.40" x2="509.50" y2="924.40" stroke="#333333" stroke-width="1"/>
<line x1="505.10" y1="922.56" x2="509.50" y2="922.56" stroke="#333333" stroke-width="1"/>
<line x1="505.10" y1="920.72" x2="509.50" y2="920.72" stroke="#333333" stroke-width="1"/>
<line x1="505.10" y1="918.88" x2="509.50" y2="918.88" stroke="#333333" stroke-width="1"/>
<line x1="505.10" y1="917.03" x2="509.50" y2="917.03" stroke="#333333" stroke-width="1"/>
<line x1="505.10" y1="915.19" x2="509.50" y2="915.19" stroke="#333333" stroke-width="1"/>
<line x1="505.10" y1="911.51" x2="509.50" y2="911.51" stroke="#333333" stroke-width="1"/>
<line x1="505.10" y1="909.66" x2="509.50" y2="909.66" stroke="#333333" stroke-width="1"/>
<line x1="505.10" y1="907.82" x2="509.50" y2="907.82" stroke="#333333" stroke-width="1"/>
<line x1="505.10" y1="905.98" x2="509.50" y2="905.98" stroke="#333333" stroke-width="1"/>
<line x1="505.10" y1="904.14" x2="509.50" y2="904.14" stroke="#333333" stroke-width="1"/>
<line x1="505.10" y1="902.29" x2="509.50" y2="902.29" stroke="#333333" stroke-width="1"/>
<line x1="505.10" y1="900.45" x2="509.50" y2="900.45" stroke="#333333" stroke-width="1"/>
<line x1="505.10" y1="898.61" x2="509.50" y2="898.61" stroke="#333333" stroke-width="1"/>
<line x1="505.10" y1="896.77" x2="509.50" y2="896.77" stroke="#333333" stroke-width="1"/>
<line x1="505.10" y1="893.08" x2="509.50" y2="893.08" stroke="#333333" stroke-width="1"/>
<line x1="505.10" y1="891.24" x2="509.50" y2="891.24" stroke="#333333" stroke-width="1"/>
<line x1="505.10" y1="889.40" x2="509.50" y2="889.40" stroke="#333333" stroke-width="1"/>
<line x1="505.10" y1="887.55" x2="509.50" y2="887.55" stroke="#333333" stroke-width="1"/>
<line x1="505.10" y1="885.71" x2="509.50" y2="885.71" stroke="#333333" stroke-width="1"/>
<line x1="505.10" y1="883.87" x2="509.50" y2="883.87" stroke="#333333" stroke-width="1"/>
<line x1="505.10" y1="882.03" x2="509.50" y2="882.03" stroke="#333333" stroke-width="1"/>
<line x1="505.10" y1="880.18" x2="509.50" y2="880.18" stroke="#333333" stroke-width="1"/>
<line x1="505.10" y1="878.34" x2="509.50" y2="878.34" stroke="#333333" stroke-width="1"/>
<line x1="505.10" y1="874.66" x2="509.50" y2="874.66" stroke="#333333" stroke-width="1"/>
<line x1="505.10" y1="872.82" x2="509.50" y2="872.82" stroke="#333333" stroke-width="1"/>
<line x1="505.10" y1="870.97" x2="509.50" y2="870.97" stroke="#333333" stroke-width="1"/>
<line x1="505.10" y1="869.13" x2="509.50" y2="869.13" stroke="#333333" stroke-width="1"/>
<line x1="505.10" y1="867.29" x2="509.50" y2="867.29" stroke="#333333" stroke-width="1"/>
<line x1="505.10" y1="865.45" x2="509.50" y2="865.45" stroke="#333333" stroke-width="1"/>
<line x1="505.10" y1="863.60" x2="509.50" y2="863.60" stroke="#333333" stroke-width="1"/>
<line x1="505.10" y1="861.76" x2="509.50" y2="861.76" stroke="#333333" stroke-width="1"/>
<line x1="505.10" y1="859.92" x2="509.50" y2="859.92" stroke="#333333" stroke-width="1"/>
<line x1="505.10" y1="856.23" x2="509.50" y2="856.23" stroke="#333333" stroke-width="1"/>
<line x1="505.10" y1="854.39" x2="509.50" y2="854.39" stroke="#333333" stroke-width="1"/>
<line x1="505.10" y1="852.55" x2="509.50" y2="852.55" stroke="#333333" stroke-width="1"/>
<line x1="505.10" y1="850.71" x2="509.50" y2="850.71" stroke="#333333" stroke-width="1"/>
<line x1="505.10" y1="848.86" x2="509.50" y2="848.86" stroke="#333333" stroke-width="1"/>
<line x1="505.10" y1="847.02" x2="509.50" y2="847.02" stroke="#333333" stroke-width="1"/>
<line x1="505.10" y1="845.18" x2="509.50" y2="845.18" stroke="#333333" stroke-width="1"/>
<line x1="505.10" y1="843.34" x2="509.50" y2="843.34" stroke="#333333" stroke-width="1"/>
<line x1="505.10" y1="841.49" x2="509.50" y2="841.49" stroke="#333333" stroke-width="1"/>
<line x1="505.10" y1="837.81" x2="509.50" y2="837.81" stroke="#333333" stroke-width="1"/>
<line x1="505.10" y1="835.97" x2="509.50" y2="835.97" stroke="#333333" stroke-width="1"/>
<line x1="505.10" y1="834.12" x2="509.50" y2="834.12" stroke="#333333" stroke-width="1"/>
<line x1="505.10" y1="832.28" x2="509.50" y2="832.28" stroke="#333333" stroke-width="1"/>
<line x1="505.10" y1="830.44" x2="509.50" y2="830.44" stroke="#333333" stroke-width="1"/>
<line x1="505.10" y1="828.60" x2="509.50" y2="828.60" stroke="#333333" stroke-width="1"/>
<line x1="505.10" y1="826.75" x2="509.50" y2="826.75" stroke="#333333" stroke-width="1"/>
<line x1="505.10" y1="824.91" x2="509.50" y2="824.91" stroke="#333333" stroke-width="1"/>
<line x1="505.10" y1="823.07" x2="509.50" y2="823.07" stroke="#333333" stroke-width="1"/>
<line x1="505.10" y1="819.38" x2="509.50" y2="819.38" stroke="#333333" stroke-width="1"/>
<line x1="505.10" y1="817.54" x2="509.50" y2="817.54" stroke="#333333" stroke-width="1"/>
<line x1="505.10" y1="815.70" x2="509.50" y2="815.70" stroke="#333333" stroke-width="1"/>
<line x1="505.10" y1="813.86" x2="509.50" y2="813.86" stroke="#333333" stroke-width="1"/>
<line x1="505.10" y1="812.01" x2="509.50" y2="812.01" stroke="#333333" stroke-width="1"/>
<line x1="505.10" y1="810.17" x2="509.50" y2="810.17" stroke="#333333" stroke-width="1"/>
<line x1="505.10" y1="808.33" x2="509.50" y2="808.33" stroke="#333333" stroke-width="1"/>
<line x1="505.10" y1="806.49" x2="509.50" y2="806.49" stroke="#333333" stroke-width="1"/>
<line x1="505.10" y1="804.64" x2="509.50" y2="804.64" stroke="#333333" stroke-width="1"/>
<line x1="509.50" y1="950.00" x2="509.50" y2="958.00" stroke="#333333" stroke-width="1"/>
<line x1="547.25" y1="950.00" x2="547.25" y2="958.00" stroke="#333333" stroke-width="1"/>
<line x1="585.00" y1="950.00" x2="585.00" y2="958.00" stroke="#333333" stroke-width="1"/>
<line x1="622.75" y1="950.00" x2="622.75" y2="958.00" stroke="#333333" stroke-width="1"/>
<line x1="660.50" y1="950.00" x2="660.50" y2="958.00" stroke="#333333" stroke-width="1"/>
<line x1="528.38" y1="950.00" x2="528.38" y2="955.00" stroke="#333333" stroke-width="1"/>
<line x1="566.12" y1="950.00" x2="566.12" y2="955.00" stroke="#333333" stroke-width="1"/>
<line x1="603.88" y1="950.00" x2="603.88" y2="955.00" stroke="#333333" stroke-width="1"/>
<line x1="641.62" y1="950.00" x2="641.62" y2="955.00" stroke="#333333" stroke-width="1"/>
<text x="469.60" y="954.50" font-size="12.6" textLength="27.17" lengthAdjust="spacingAndGlyphs" fill="#3c3c3c">–40.</text>
<text x="469.60" y="936.07" font-size="12.6" textLength="27.17" lengthAdjust="spacingAndGlyphs" fill="#3c3c3c">–30.</text>
<text x="469.60" y="917.65" font-size="12.6" textLength="27.17" lengthAdjust="spacingAndGlyphs" fill="#3c3c3c">–20.</text>
<text x="470.30" y="899.22" font-size="12.6" textLength="26.44" lengthAdjust="spacingAndGlyphs" fill="#3c3c3c">–10.</text>
<text x="483.80" y="880.80" font-size="12.6" textLength="13.15" lengthAdjust="spacingAndGlyphs" fill="#3c3c3c">0.</text>
<text x="475.85" y="862.38" font-size="12.6" textLength="21.02" lengthAdjust="spacingAndGlyphs" fill="#3c3c3c">10.</text>
<text x="475.84" y="843.95" font-size="12.6" textLength="21.03" lengthAdjust="spacingAndGlyphs" fill="#3c3c3c">20.</text>
<text x="476.04" y="825.52" font-size="12.6" textLength="20.82" lengthAdjust="spacingAndGlyphs" fill="#3c3c3c">30.</text>
<text x="476.27" y="807.10" font-size="12.6" textLength="20.58" lengthAdjust="spacingAndGlyphs" fill="#3c3c3c">40.</text>
<text x="500.09" y="973.90" font-size="12.6" textLength="19.38" lengthAdjust="spacingAndGlyphs" fill="#3c3c3c">40.</text>
<text x="536.88" y="973.90" font-size="12.6" textLength="20.03" lengthAdjust="spacingAndGlyphs" fill="#3c3c3c">20.</text>
<text x="579.05" y="973.90" font-size="12.6" textLength="11.96" lengthAdjust="spacingAndGlyphs" fill="#3c3c3c">0.</text>
<text x="610.30" y="973.90" font-size="12.6" textLength="25.08" lengthAdjust="spacingAndGlyphs" fill="#3c3c3c">–20.</text>
<text x="647.90" y="973.90" font-size="12.6" textLength="25.29" lengthAdjust="spacingAndGlyphs" fill="#3c3c3c">–40.</text>
<text transform="translate(461.50,895.93) rotate(-90)" x="0" y="0" font-size="12.2" textLength="37.98" lengthAdjust="spacingAndGlyphs" fill="#3c3c3c">KSM–Z</text>
<text x="564.56" y="992.10" font-size="12.2" textLength="38.97" lengthAdjust="spacingAndGlyphs" fill="#3c3c3c">KSM–X</text>
<svg x="509.5" y="802.6" width="151.0" height="147.39999999999998" overflow="hidden">
<path d="M34.2,151.3 L33.0,149.4 L31.8,147.4 L30.6,145.5 L29.5,143.5 L28.4,141.6 L27.4,139.7 L26.4,137.7 L25.4,135.8 L24.4,133.9 L23.5,131.9 L22.6,130.0 L21.7,128.1 L20.9,126.1 L20.1,124.2 L19.3,122.3 L18.6,120.3 L17.9,118.4 L17.2,116.5 L16.5,114.5 L15.9,112.6 L15.3,110.7 L14.7,108.7 L14.2,106.8 L13.7,104.9 L13.2,102.9 L12.8,101.0 L12.4,99.1 L12.0,97.1 L11.7,95.2 L11.3,93.2 L11.0,91.3 L10.8,89.4 L10.6,87.4 L10.4,85.5 L10.2,83.6 L10.1,81.6 L10.0,79.7 L9.9,77.8 L9.8,75.8 L9.8,73.9 L9.8,72.0 L9.9,70.0 L10.0,68.1 L10.1,66.2 L10.2,64.2 L10.4,62.3 L10.6,60.4 L10.8,58.4 L11.0,56.5 L11.3,54.6 L11.7,52.6 L12.0,50.7 L12.4,48.7 L12.8,46.8 L13.2,44.9 L13.7,42.9 L14.2,41.0 L14.7,39.1 L15.3,37.1 L15.9,35.2 L16.5,33.3 L17.2,31.3 L17.9,29.4 L18.6,27.5 L19.3,25.5 L20.1,23.6 L20.9,21.7 L21.7,19.7 L22.6,17.8 L23.5,15.9 L24.4,13.9 L25.4,12.0 L26.4,10.1 L27.4,8.1 L28.4,6.2 L29.5,4.3 L30.6,2.3 L31.8,0.4 L33.0,-1.6 L34.2,-3.5" fill="none" stroke="#0000ff" stroke-width="1.05" stroke-dasharray="2.2,1.3"/>
<path d="M72.9,151.3 L70.6,149.4 L68.4,147.4 L66.2,145.5 L64.1,143.5 L62.0,141.6 L60.1,139.7 L58.1,137.7 L56.2,135.8 L54.4,133.9 L52.6,131.9 L50.9,130.0 L49.3,128.1 L47.7,126.1 L46.2,124.2 L44.7,122.3 L43.3,120.3 L41.9,118.4 L40.6,116.5 L39.4,114.5 L38.2,112.6 L37.1,110.7 L36.0,108.7 L35.0,106.8 L34.0,104.9 L33.1,102.9 L32.3,101.0 L31.5,99.1 L30.8,97.1 L30.1,95.2 L29.5,93.2 L29.0,91.3 L28.5,89.4 L28.0,87.4 L27.7,85.5 L27.3,83.6 L27.1,81.6 L26.9,79.7 L26.7,77.8 L26.6,75.8 L26.6,73.9 L26.6,72.0 L26.7,70.0 L26.9,68.1 L27.1,66.2 L27.3,64.2 L27.7,62.3 L28.0,60.4 L28.5,58.4 L29.0,56.5 L29.5,54.6 L30.1,52.6 L30.8,50.7 L31.5,48.7 L32.3,46.8 L33.1,44.9 L34.0,42.9 L35.0,41.0 L36.0,39.1 L37.1,37.1 L38.2,35.2 L39.4,33.3 L40.6,31.3 L41.9,29.4 L43.3,27.5 L44.7,25.5 L46.2,23.6 L47.7,21.7 L49.3,19.7 L50.9,17.8 L52.6,15.9 L54.4,13.9 L56.2,12.0 L58.1,10.1 L60.1,8.1 L62.0,6.2 L64.1,4.3 L66.2,2.3 L68.4,0.4 L70.6,-1.6 L72.9,-3.5" fill="none" stroke="#8b4513" stroke-width="1.05" stroke-dasharray="2.2,1.3"/>
</svg>
<path d="M550.20,891.90 L621.20,862.50" stroke="#000" stroke-width="1.5" fill="none"/>
<rect x="583.0" y="875.0" width="4" height="3" fill="none" stroke="#000" stroke-width="1"/>
<circle cx="616.3" cy="864" r="2.6" fill="#ff0000"/>
<path d="M535.2,852.2 Q538,840 543,831 Q549,821 555.6,814.2" fill="none" stroke="#000" stroke-width="1.3"/>
<circle cx="542.6" cy="832.0" r="3.4" fill="#0000ff"/>
<path d="M539.10,824.10 L548.10,833.10" stroke="#ff0000" stroke-width="1.1" fill="none"/>
<path d="M539.10,833.10 L548.10,824.10" stroke="#ff0000" stroke-width="1.1" fill="none"/>
<rect x="803.60" y="802.60" width="151.10" height="147.40" fill="#ffffff" stroke="#333333" stroke-width="1"/>
<line x1="795.10" y1="939.67" x2="803.60" y2="939.67" stroke="#333333" stroke-width="1"/>
<line x1="795.10" y1="918.61" x2="803.60" y2="918.61" stroke="#333333" stroke-width="1"/>
<line x1="795.10" y1="897.56" x2="803.60" y2="897.56" stroke="#333333" stroke-width="1"/>
<line x1="795.10" y1="876.50" x2="803.60" y2="876.50" stroke="#333333" stroke-width="1"/>
<line x1="795.10" y1="855.44" x2="803.60" y2="855.44" stroke="#333333" stroke-width="1"/>
<line x1="795.10" y1="834.39" x2="803.60" y2="834.39" stroke="#333333" stroke-width="1"/>
<line x1="795.10" y1="813.33" x2="803.60" y2="813.33" stroke="#333333" stroke-width="1"/>
<line x1="799.20" y1="950.20" x2="803.60" y2="950.20" stroke="#333333" stroke-width="1"/>
<line x1="799.20" y1="929.14" x2="803.60" y2="929.14" stroke="#333333" stroke-width="1"/>
<line x1="799.20" y1="908.09" x2="803.60" y2="908.09" stroke="#333333" stroke-width="1"/>
<line x1="799.20" y1="887.03" x2="803.60" y2="887.03" stroke="#333333" stroke-width="1"/>
<line x1="799.20" y1="865.97" x2="803.60" y2="865.97" stroke="#333333" stroke-width="1"/>
<line x1="799.20" y1="844.91" x2="803.60" y2="844.91" stroke="#333333" stroke-width="1"/>
<line x1="799.20" y1="823.86" x2="803.60" y2="823.86" stroke="#333333" stroke-width="1"/>
<line x1="799.20" y1="802.80" x2="803.60" y2="802.80" stroke="#333333" stroke-width="1"/>
<line x1="825.24" y1="950.00" x2="825.24" y2="958.00" stroke="#333333" stroke-width="1"/>
<line x1="879.20" y1="950.00" x2="879.20" y2="958.00" stroke="#333333" stroke-width="1"/>
<line x1="933.16" y1="950.00" x2="933.16" y2="958.00" stroke="#333333" stroke-width="1"/>
<line x1="803.65" y1="950.00" x2="803.65" y2="955.00" stroke="#333333" stroke-width="1"/>
<line x1="814.44" y1="950.00" x2="814.44" y2="955.00" stroke="#333333" stroke-width="1"/>
<line x1="836.03" y1="950.00" x2="836.03" y2="955.00" stroke="#333333" stroke-width="1"/>
<line x1="846.82" y1="950.00" x2="846.82" y2="955.00" stroke="#333333" stroke-width="1"/>
<line x1="857.61" y1="950.00" x2="857.61" y2="955.00" stroke="#333333" stroke-width="1"/>
<line x1="868.41" y1="950.00" x2="868.41" y2="955.00" stroke="#333333" stroke-width="1"/>
<line x1="889.99" y1="950.00" x2="889.99" y2="955.00" stroke="#333333" stroke-width="1"/>
<line x1="900.79" y1="950.00" x2="900.79" y2="955.00" stroke="#333333" stroke-width="1"/>
<line x1="911.58" y1="950.00" x2="911.58" y2="955.00" stroke="#333333" stroke-width="1"/>
<line x1="922.37" y1="950.00" x2="922.37" y2="955.00" stroke="#333333" stroke-width="1"/>
<line x1="943.96" y1="950.00" x2="943.96" y2="955.00" stroke="#333333" stroke-width="1"/>
<line x1="954.75" y1="950.00" x2="954.75" y2="955.00" stroke="#333333" stroke-width="1"/>
<text x="763.40" y="943.97" font-size="12.6" textLength="27.17" lengthAdjust="spacingAndGlyphs" fill="#3c3c3c">–60.</text>
<text x="763.40" y="922.91" font-size="12.6" textLength="27.17" lengthAdjust="spacingAndGlyphs" fill="#3c3c3c">–40.</text>
<text x="763.40" y="901.86" font-size="12.6" textLength="27.17" lengthAdjust="spacingAndGlyphs" fill="#3c3c3c">–20.</text>
<text x="777.60" y="880.80" font-size="12.6" textLength="13.15" lengthAdjust="spacingAndGlyphs" fill="#3c3c3c">0.</text>
<text x="769.64" y="859.74" font-size="12.6" textLength="21.03" lengthAdjust="spacingAndGlyphs" fill="#3c3c3c">20.</text>
<text x="770.07" y="838.69" font-size="12.6" textLength="20.58" lengthAdjust="spacingAndGlyphs" fill="#3c3c3c">40.</text>
<text x="769.64" y="817.63" font-size="12.6" textLength="21.03" lengthAdjust="spacingAndGlyphs" fill="#3c3c3c">60.</text>
<text x="812.40" y="973.90" font-size="12.6" textLength="25.39" lengthAdjust="spacingAndGlyphs" fill="#3c3c3c">–50.</text>
<text x="873.88" y="973.90" font-size="12.6" textLength="11.25" lengthAdjust="spacingAndGlyphs" fill="#3c3c3c">0.</text>
<text x="921.53" y="973.90" font-size="12.6" textLength="19.98" lengthAdjust="spacingAndGlyphs" fill="#3c3c3c">50.</text>
<text transform="translate(755.70,895.93) rotate(-90)" x="0" y="0" font-size="12.2" textLength="37.98" lengthAdjust="spacingAndGlyphs" fill="#3c3c3c">KSM–Z</text>
<text x="859.36" y="992.10" font-size="12.2" textLength="39.09" lengthAdjust="spacingAndGlyphs" fill="#3c3c3c">KSM–Y</text>
<path d="M836.6,876.5 A42.6,42.2 0 1 1 921.8000000000001,876.5 A42.6,42.2 0 1 1 836.6,876.5 Z" fill="none" stroke="#0000ff" stroke-width="1.05" stroke-dasharray="2.2,1.3"/>
<path d="M862.9000000000001,876.5 A16.3,17.3 0 1 1 895.5,876.5 A16.3,17.3 0 1 1 862.9000000000001,876.5 Z" fill="none" stroke="#8b4513" stroke-width="1.05" stroke-dasharray="2.2,1.3"/>
<ellipse cx="879.2" cy="876.5" rx="21.8" ry="8.7" fill="none" stroke="#000" stroke-width="1.3"/>
<rect x="878.20" y="875.50" width="2.00" height="2.00" fill="#000"/>
<circle cx="869.6" cy="869.4" r="2.6" fill="#ff0000"/>
<path d="M817.00,841.00 L839.30,863.10" stroke="#000" stroke-width="1.3" fill="none"/>
<circle cx="824.4" cy="850.5" r="3.4" fill="#0000ff"/>
<path d="M819.90,846.00 L828.90,855.00" stroke="#ff0000" stroke-width="1.1" fill="none"/>
<path d="M819.90,855.00 L828.90,846.00" stroke="#ff0000" stroke-width="1.1" fill="none"/>
</svg></body></html>
